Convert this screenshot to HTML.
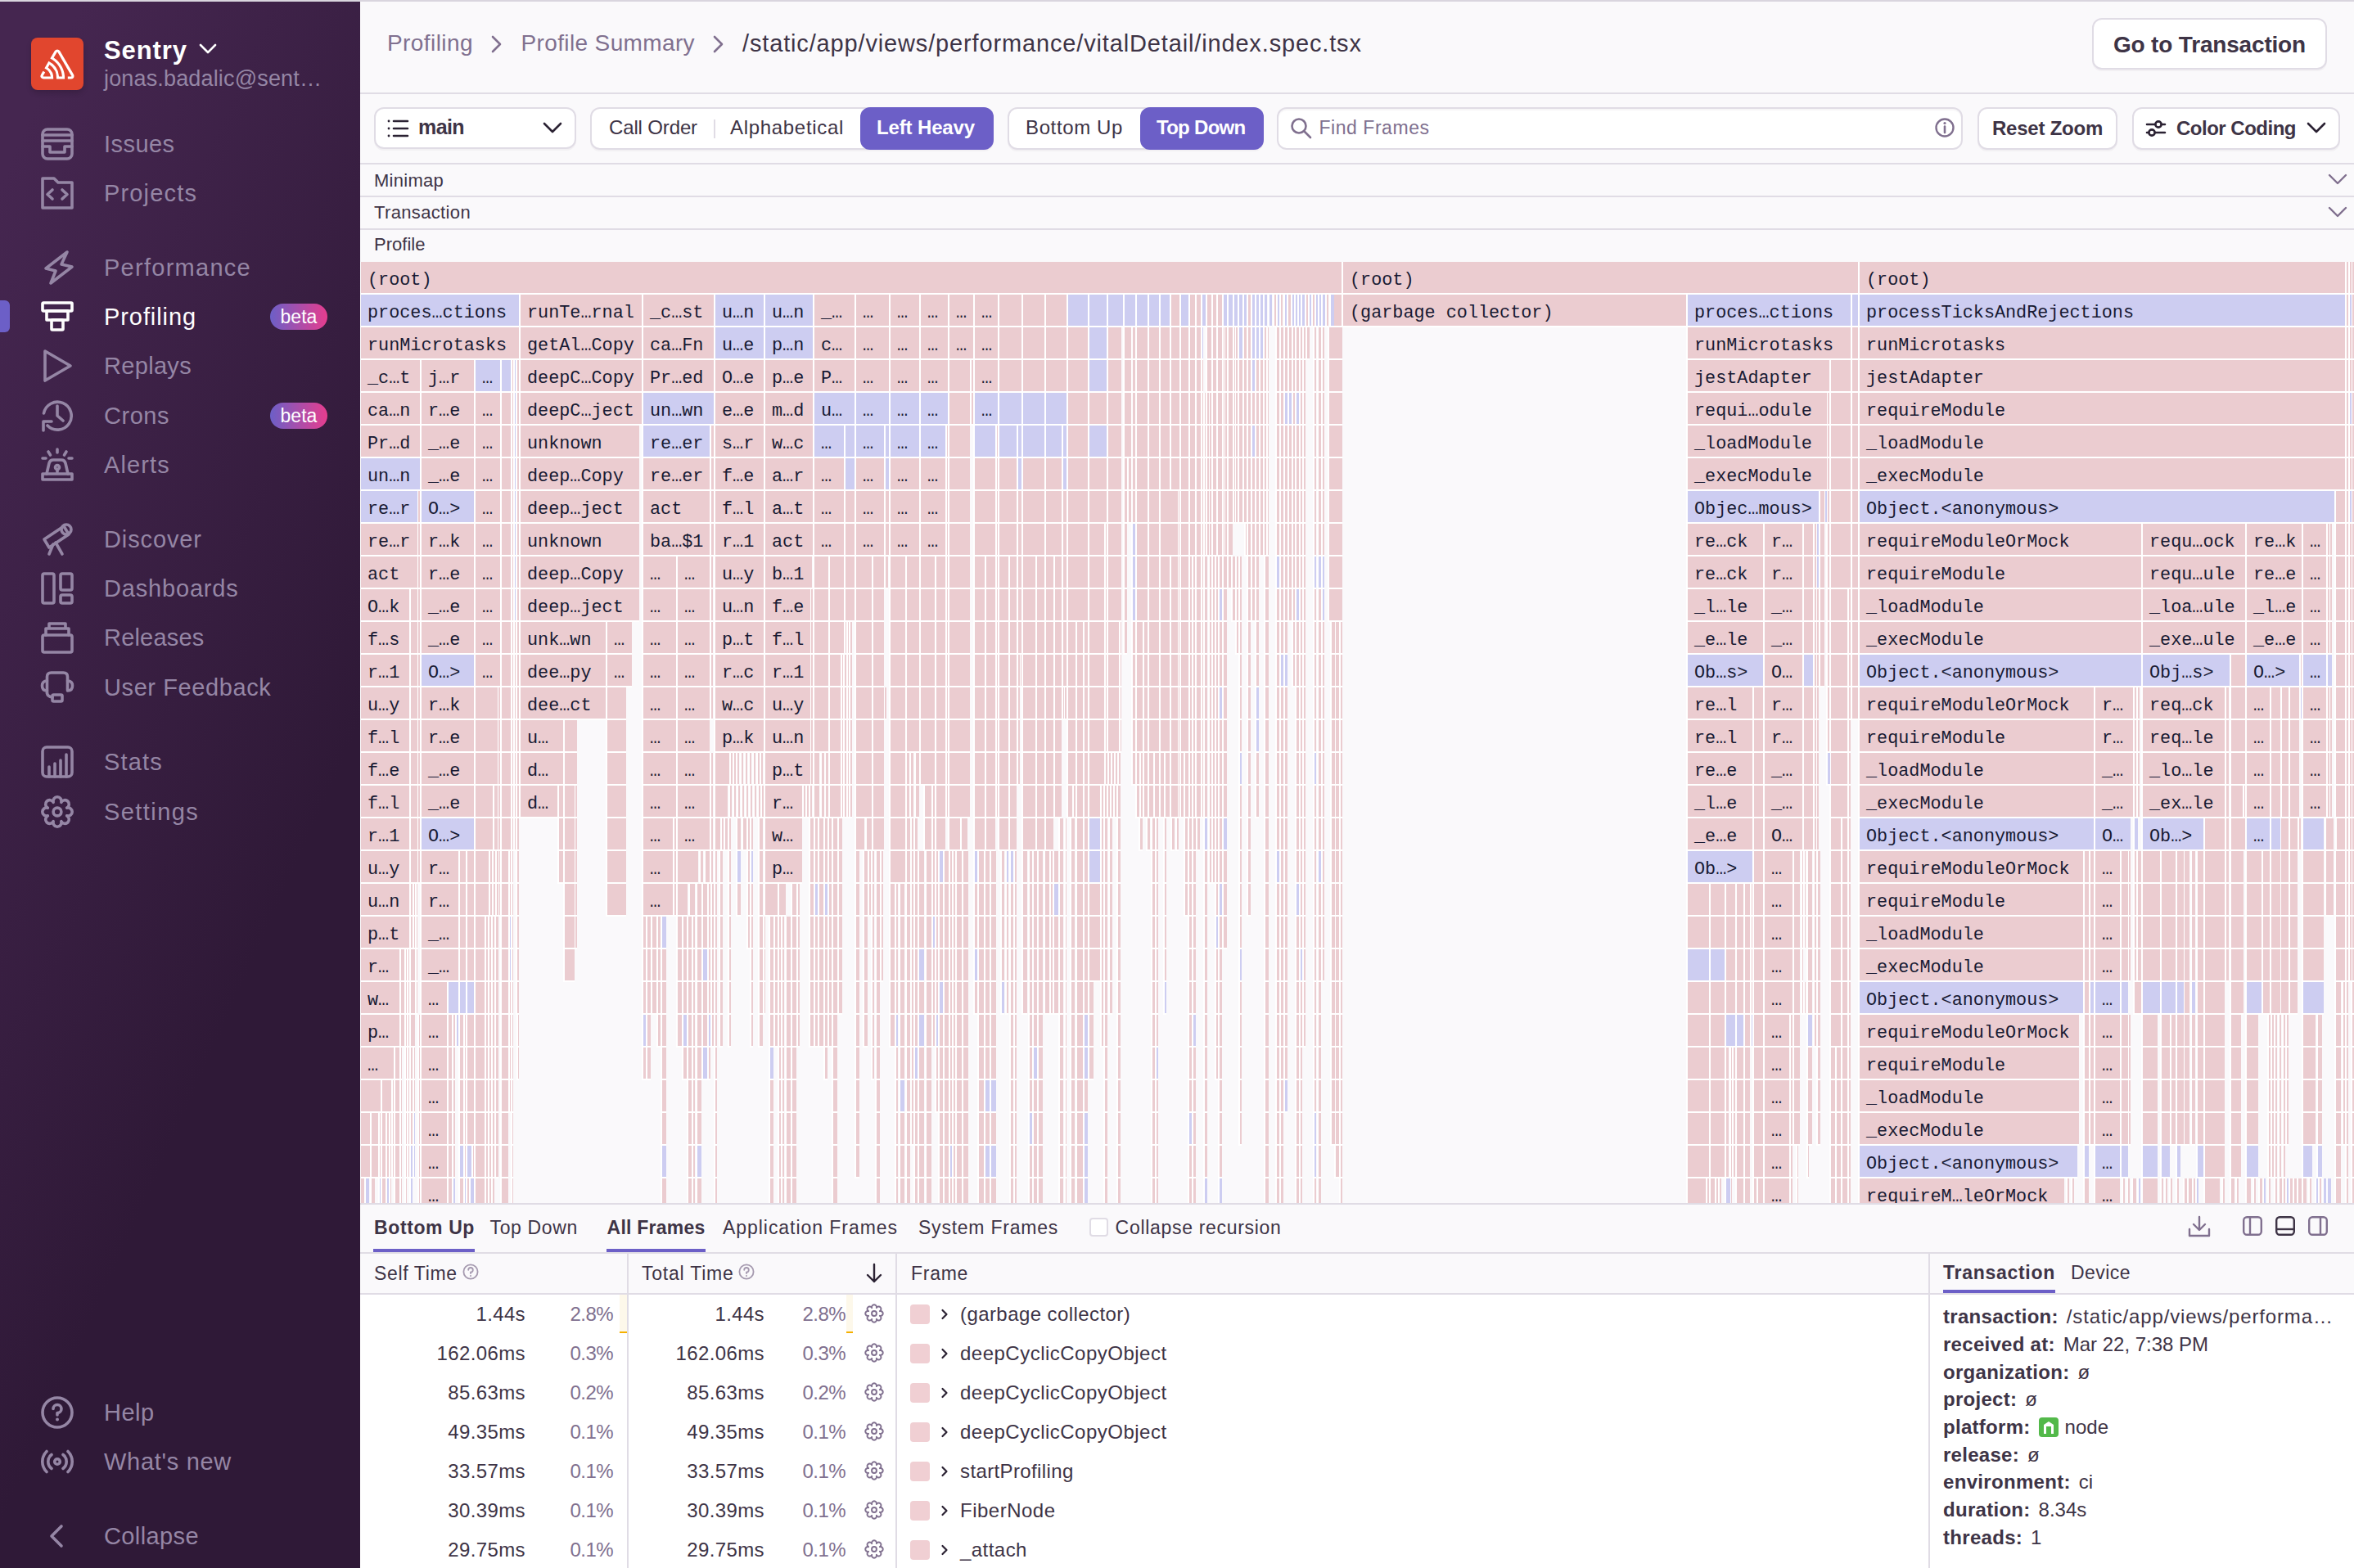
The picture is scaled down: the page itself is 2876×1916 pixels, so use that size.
<!DOCTYPE html>
<html><head><meta charset="utf-8"><title>Profiling</title>
<style>
html,body{margin:0;padding:0;width:2876px;height:1916px;overflow:hidden;background:#faf9fb;}
@media (max-width:2000px){html{zoom:0.5;}}
body{position:relative;font-family:"Liberation Sans",sans-serif;}
.t{position:absolute;white-space:pre;}
.r{position:absolute;display:block;}
</style></head><body>
<div class="r" style="left:0px;top:0px;width:2876px;height:2px;background:#d9d5de;"></div>
<div class="r" style="left:0px;top:2px;width:440px;height:1914px;background:linear-gradient(294.17deg, #2f1937 35.57%, #452650 92.42%);"></div>
<div class="r" style="left:38px;top:46px;width:64px;height:64px;background:#e1462e;border-radius:8px;box-shadow:0 4px 6px rgba(0,0,0,0.15);"></div>
<svg class="r" style="left:38px;top:46px;" width="64" height="64" viewBox="0 0 64 64"><path transform="translate(11.5,14.5) scale(0.82)" d="M29,2.26a4.67,4.67,0,0,0-8,0L14.42,13.53A32.21,32.21,0,0,1,32.17,40.19H27.55A27.68,27.68,0,0,0,12.09,17.47L6,28a15.92,15.92,0,0,1,9.23,12.17H4.62A.76.76,0,0,1,4,39.06l2.94-5a10.74,10.74,0,0,0-3.36-1.9l-2.91,5a4.54,4.54,0,0,0,1.69,6.24A4.66,4.66,0,0,0,4.62,44H19.150a19.4,19.4,0,0,0-8-17.31l2.31-4A23.87,23.87,0,0,1,23.76,44H36.07a35.88,35.88,0,0,0-16.41-31.8l4.67-8a.77.77,0,0,1,1.05-.27c.53.29,20.290,34.77,20.66,35.17a.76.76,0,0,1-.68,1.13H40.6q.09,1.91,0,3.81h4.78A4.59,4.59,0,0,0,50,39.43a4.49,4.49,0,0,0-.62-2.28Z" fill="#fff"/></svg>
<div class="t" style="left:127.0px;top:45.8px;font-size:31px;line-height:31px;color:#ffffff;font-family:'Liberation Sans', sans-serif;font-weight:bold;letter-spacing:0.92px;">Sentry</div>
<svg class="r" style="left:243px;top:53px;" width="22" height="14" viewBox="0 0 22 14"><path d="M2 2 L11 11 L20 2" fill="none" stroke="#fff" stroke-width="2.6" stroke-linecap="round" stroke-linejoin="round"/></svg>
<div class="t" style="left:127.0px;top:82.6px;font-size:27px;line-height:27px;color:#9586a5;font-family:'Liberation Sans', sans-serif;font-weight:normal;letter-spacing:0.16px;">jonas.badalic@sent…</div>
<div class="t" style="left:127.0px;top:162.0px;font-size:29px;line-height:29px;color:#9586a5;font-family:'Liberation Sans', sans-serif;font-weight:normal;letter-spacing:0.45px;">Issues</div>
<svg class="r" style="left:48px;top:154px;" width="44" height="44" viewBox="0 0 44 44"><rect x="4" y="4" width="36" height="36" rx="6" fill="none" stroke="#9586a5" stroke-width="3.6" stroke-linecap="round" stroke-linejoin="round"/><path d="M4 11 H40 M4 18 H40 M4 25 H13 V32 H31 V25 H40" fill="none" stroke="#9586a5" stroke-width="3.6" stroke-linecap="round" stroke-linejoin="round"/></svg>
<div class="t" style="left:127.0px;top:222.0px;font-size:29px;line-height:29px;color:#9586a5;font-family:'Liberation Sans', sans-serif;font-weight:normal;letter-spacing:1.16px;">Projects</div>
<svg class="r" style="left:48px;top:214px;" width="44" height="44" viewBox="0 0 44 44"><path d="M4 4 H18 L23 9 H40 V40 H4 Z" fill="none" stroke="#9586a5" stroke-width="3.6" stroke-linecap="round" stroke-linejoin="round"/><path d="M16 18 L10 23.5 L16 29 M28 18 L34 23.5 L28 29" fill="none" stroke="#9586a5" stroke-width="3.6" stroke-linecap="round" stroke-linejoin="round"/></svg>
<div class="t" style="left:127.0px;top:313.0px;font-size:29px;line-height:29px;color:#9586a5;font-family:'Liberation Sans', sans-serif;font-weight:normal;letter-spacing:1.27px;">Performance</div>
<svg class="r" style="left:48px;top:305px;" width="44" height="44" viewBox="0 0 44 44"><path d="M34 3 L8 23 L20 26 L14 41 L40 21 L27 18 Z" fill="none" stroke="#9586a5" stroke-width="3.6" stroke-linecap="round" stroke-linejoin="round"/></svg>
<div class="t" style="left:127.0px;top:373.0px;font-size:29px;line-height:29px;color:#ffffff;font-family:'Liberation Sans', sans-serif;font-weight:normal;letter-spacing:0.92px;">Profiling</div>
<svg class="r" style="left:48px;top:365px;" width="44" height="44" viewBox="0 0 44 44"><rect x="4" y="5" width="36" height="10" rx="1" fill="none" stroke="#ffffff" stroke-width="3.6" stroke-linecap="round" stroke-linejoin="round"/><rect x="9" y="15" width="26" height="11" fill="none" stroke="#ffffff" stroke-width="3.6" stroke-linecap="round" stroke-linejoin="round"/><rect x="15" y="26" width="14" height="12" rx="1" fill="none" stroke="#ffffff" stroke-width="3.6" stroke-linecap="round" stroke-linejoin="round"/></svg>
<div class="t" style="left:127.0px;top:433.0px;font-size:29px;line-height:29px;color:#9586a5;font-family:'Liberation Sans', sans-serif;font-weight:normal;letter-spacing:0.32px;">Replays</div>
<svg class="r" style="left:48px;top:425px;" width="44" height="44" viewBox="0 0 44 44"><path d="M7 4 L38 22 L7 40 Z" fill="none" stroke="#9586a5" stroke-width="3.6" stroke-linecap="round" stroke-linejoin="round"/></svg>
<div class="t" style="left:127.0px;top:494.0px;font-size:29px;line-height:29px;color:#9586a5;font-family:'Liberation Sans', sans-serif;font-weight:normal;letter-spacing:0.53px;">Crons</div>
<svg class="r" style="left:48px;top:486px;" width="44" height="44" viewBox="0 0 44 44"><path d="M5.5 19 A17 17 0 1 1 10 34" fill="none" stroke="#9586a5" stroke-width="3.6" stroke-linecap="round" stroke-linejoin="round"/><path d="M22 10 V22 L29 28" fill="none" stroke="#9586a5" stroke-width="3.6" stroke-linecap="round" stroke-linejoin="round"/><path d="M5 40 V29 H15" fill="none" stroke="#9586a5" stroke-width="3.6" stroke-linecap="round" stroke-linejoin="round"/></svg>
<div class="t" style="left:127.0px;top:554.0px;font-size:29px;line-height:29px;color:#9586a5;font-family:'Liberation Sans', sans-serif;font-weight:normal;letter-spacing:1.10px;">Alerts</div>
<svg class="r" style="left:48px;top:546px;" width="44" height="44" viewBox="0 0 44 44"><path d="M4 40 V33 H40 V40 Z" fill="none" stroke="#9586a5" stroke-width="3.6" stroke-linecap="round" stroke-linejoin="round"/><path d="M9 33 L12 20 Q13 16 17 16 H27 Q31 16 32 20 L35 33" fill="none" stroke="#9586a5" stroke-width="3.6" stroke-linecap="round" stroke-linejoin="round"/><circle cx="22" cy="25" r="2.5" fill="none" stroke="#9586a5" stroke-width="3.6" stroke-linecap="round" stroke-linejoin="round"/><path d="M22 27.5 V31 M22 3 V7 M11 6 L13.5 10 M33 6 L30.5 10 M4 14 H8 M36 14 H40" fill="none" stroke="#9586a5" stroke-width="3.6" stroke-linecap="round" stroke-linejoin="round"/></svg>
<div class="t" style="left:127.0px;top:645.0px;font-size:29px;line-height:29px;color:#9586a5;font-family:'Liberation Sans', sans-serif;font-weight:normal;letter-spacing:0.88px;">Discover</div>
<svg class="r" style="left:48px;top:637px;" width="44" height="44" viewBox="0 0 44 44"><path d="M6 22 L30 6 L36 16 L12 32 Z" fill="none" stroke="#9586a5" stroke-width="3.6" stroke-linecap="round" stroke-linejoin="round"/><circle cx="33" cy="10" r="6" fill="none" stroke="#9586a5" stroke-width="3.6" stroke-linecap="round" stroke-linejoin="round"/><path d="M17 28 L12 40 M20 26 L28 40" fill="none" stroke="#9586a5" stroke-width="3.6" stroke-linecap="round" stroke-linejoin="round"/></svg>
<div class="t" style="left:127.0px;top:705.0px;font-size:29px;line-height:29px;color:#9586a5;font-family:'Liberation Sans', sans-serif;font-weight:normal;letter-spacing:0.82px;">Dashboards</div>
<svg class="r" style="left:48px;top:697px;" width="44" height="44" viewBox="0 0 44 44"><rect x="4" y="4" width="14" height="36" rx="2" fill="none" stroke="#9586a5" stroke-width="3.6" stroke-linecap="round" stroke-linejoin="round"/><rect x="26" y="4" width="14" height="20" rx="2" fill="none" stroke="#9586a5" stroke-width="3.6" stroke-linecap="round" stroke-linejoin="round"/><rect x="26" y="30" width="14" height="10" rx="2" fill="none" stroke="#9586a5" stroke-width="3.6" stroke-linecap="round" stroke-linejoin="round"/></svg>
<div class="t" style="left:127.0px;top:765.0px;font-size:29px;line-height:29px;color:#9586a5;font-family:'Liberation Sans', sans-serif;font-weight:normal;letter-spacing:0.19px;">Releases</div>
<svg class="r" style="left:48px;top:757px;" width="44" height="44" viewBox="0 0 44 44"><rect x="4" y="19" width="36" height="21" rx="2" fill="none" stroke="#9586a5" stroke-width="3.6" stroke-linecap="round" stroke-linejoin="round"/><path d="M8 19 V11 H36 V19 M12 11 V5 H32 V11" fill="none" stroke="#9586a5" stroke-width="3.6" stroke-linecap="round" stroke-linejoin="round"/></svg>
<div class="t" style="left:127.0px;top:826.0px;font-size:29px;line-height:29px;color:#9586a5;font-family:'Liberation Sans', sans-serif;font-weight:normal;letter-spacing:0.60px;">User Feedback</div>
<svg class="r" style="left:48px;top:818px;" width="44" height="44" viewBox="0 0 44 44"><path d="M9.5 29 V9 Q9.5 4 14.5 4 H29.5 Q34.5 4 34.5 9 V25" fill="none" stroke="#9586a5" stroke-width="3.6" stroke-linecap="round" stroke-linejoin="round"/><path d="M9.5 14 Q3.5 14 3.5 20 Q3.5 26 9.5 26 M34.5 14 Q40.5 14 40.5 20 Q40.5 26 34.5 26" fill="none" stroke="#9586a5" stroke-width="3.6" stroke-linecap="round" stroke-linejoin="round"/><path d="M9.5 29 Q10 33 16 34" fill="none" stroke="#9586a5" stroke-width="3.6" stroke-linecap="round" stroke-linejoin="round"/><rect x="16" y="31" width="12" height="8" rx="1.5" fill="none" stroke="#9586a5" stroke-width="3.6" stroke-linecap="round" stroke-linejoin="round"/></svg>
<div class="t" style="left:127.0px;top:917.0px;font-size:29px;line-height:29px;color:#9586a5;font-family:'Liberation Sans', sans-serif;font-weight:normal;letter-spacing:1.18px;">Stats</div>
<svg class="r" style="left:48px;top:909px;" width="44" height="44" viewBox="0 0 44 44"><rect x="4" y="4" width="36" height="36" rx="5" fill="none" stroke="#9586a5" stroke-width="3.6" stroke-linecap="round" stroke-linejoin="round"/><path d="M12 40 V28 M19 40 V24 M26 40 V20 M33 40 V13" fill="none" stroke="#9586a5" stroke-width="3.6" stroke-linecap="round" stroke-linejoin="round"/></svg>
<div class="t" style="left:127.0px;top:978.0px;font-size:29px;line-height:29px;color:#9586a5;font-family:'Liberation Sans', sans-serif;font-weight:normal;letter-spacing:1.44px;">Settings</div>
<svg class="r" style="left:48px;top:970px;" width="44" height="44" viewBox="0 0 44 44"><path d="M17.18 10.36A5.05 5.05 0 1 1 26.82 10.36A5.05 5.05 0 1 1 33.64 17.18A5.05 5.05 0 1 1 33.64 26.82A5.05 5.05 0 1 1 26.82 33.64A5.05 5.05 0 1 1 17.18 33.64A5.05 5.05 0 1 1 10.36 26.82A5.05 5.05 0 1 1 10.36 17.18A5.05 5.05 0 1 1 17.18 10.36Z" fill="none" stroke="#9586a5" stroke-width="3.6" stroke-linecap="round" stroke-linejoin="round"/><circle cx="22" cy="22" r="4.9" fill="none" stroke="#9586a5" stroke-width="3.6" stroke-linecap="round" stroke-linejoin="round"/></svg>
<div class="t" style="left:127.0px;top:1712.0px;font-size:29px;line-height:29px;color:#9586a5;font-family:'Liberation Sans', sans-serif;font-weight:normal;letter-spacing:0.52px;">Help</div>
<svg class="r" style="left:48px;top:1704px;" width="44" height="44" viewBox="0 0 44 44"><circle cx="22" cy="22" r="18" fill="none" stroke="#9586a5" stroke-width="3.6" stroke-linecap="round" stroke-linejoin="round"/><path d="M17 17.5 A5 5 0 1 1 22 22.5 V25" fill="none" stroke="#9586a5" stroke-width="3.6" stroke-linecap="round" stroke-linejoin="round"/><circle cx="22" cy="30.5" r="2" fill="#9586a5"/></svg>
<div class="t" style="left:127.0px;top:1772.0px;font-size:29px;line-height:29px;color:#9586a5;font-family:'Liberation Sans', sans-serif;font-weight:normal;letter-spacing:0.70px;">What's new</div>
<svg class="r" style="left:48px;top:1764px;" width="44" height="44" viewBox="0 0 44 44"><circle cx="22" cy="22" r="3.3" fill="none" stroke="#9586a5" stroke-width="3.6" stroke-linecap="round" stroke-linejoin="round"/><path d="M15 13.5 A10.7 10.7 0 0 0 15 30.5 M29 13.5 A10.7 10.7 0 0 1 29 30.5 M9 9.5 A17.6 17.6 0 0 0 9 34.5 M35 9.5 A17.6 17.6 0 0 1 35 34.5" fill="none" stroke="#9586a5" stroke-width="3.6" stroke-linecap="round" stroke-linejoin="round"/></svg>
<div class="t" style="left:127.0px;top:1863.0px;font-size:29px;line-height:29px;color:#9586a5;font-family:'Liberation Sans', sans-serif;font-weight:normal;letter-spacing:0.40px;">Collapse</div>
<svg class="r" style="left:48px;top:1855px;" width="44" height="44" viewBox="0 0 44 44"><path d="M27 10 L15 22 L27 34" fill="none" stroke="#9586a5" stroke-width="3.6" stroke-linecap="round" stroke-linejoin="round"/></svg>
<div class="r" style="left:0px;top:367px;width:12px;height:39px;background:#6c5fc7;border-radius:0 6px 6px 0;"></div>
<div class="r" style="left:330px;top:371px;width:70px;height:32px;background:linear-gradient(90deg,#6c5fc7,#e63d8e);border-radius:16px;"></div>
<div class="t" style="left:342.5px;top:376.0px;font-size:23px;line-height:23px;color:#ffffff;font-family:'Liberation Sans', sans-serif;font-weight:normal;letter-spacing:0.05px;">beta</div>
<div class="r" style="left:330px;top:492px;width:70px;height:32px;background:linear-gradient(90deg,#6c5fc7,#e63d8e);border-radius:16px;"></div>
<div class="t" style="left:342.5px;top:497.0px;font-size:23px;line-height:23px;color:#ffffff;font-family:'Liberation Sans', sans-serif;font-weight:normal;letter-spacing:0.05px;">beta</div>
<div class="r" style="left:440px;top:2px;width:2436px;height:1914px;background:#faf9fb;"></div>
<div class="t" style="left:473.0px;top:39.3px;font-size:28px;line-height:28px;color:#80708f;font-family:'Liberation Sans', sans-serif;font-weight:normal;letter-spacing:0.43px;">Profiling</div>
<div class="t" style="left:636.5px;top:39.3px;font-size:28px;line-height:28px;color:#80708f;font-family:'Liberation Sans', sans-serif;font-weight:normal;letter-spacing:0.37px;">Profile Summary</div>
<div class="t" style="left:907.0px;top:38.5px;font-size:29px;line-height:29px;color:#3e3446;font-family:'Liberation Sans', sans-serif;font-weight:normal;letter-spacing:0.85px;">/static/app/views/performance/vitalDetail/index.spec.tsx</div>
<svg class="r" style="left:599px;top:42px;" width="16" height="24" viewBox="0 0 16 24"><path d="M3 3 L12 12 L3 21" fill="none" stroke="#80708f" stroke-width="2.6" stroke-linecap="round" stroke-linejoin="round"/></svg>
<svg class="r" style="left:870px;top:42px;" width="16" height="24" viewBox="0 0 16 24"><path d="M3 3 L12 12 L3 21" fill="none" stroke="#80708f" stroke-width="2.6" stroke-linecap="round" stroke-linejoin="round"/></svg>
<div class="r" style="left:2556px;top:22px;width:287px;height:63px;background:#ffffff;box-sizing:border-box;border:2px solid #e0dce5;border-radius:12px;box-shadow:0 2px 0 rgba(43,34,51,0.04);"></div>
<div class="t" style="left:2582.0px;top:41.3px;font-size:28px;line-height:28px;color:#3e3446;font-family:'Liberation Sans', sans-serif;font-weight:bold;letter-spacing:-0.18px;">Go to Transaction</div>
<div class="r" style="left:440px;top:113px;width:2436px;height:2px;background:#e0dce5;"></div>
<div class="r" style="left:457px;top:131px;width:247px;height:51px;background:#ffffff;box-sizing:border-box;border:2px solid #e0dce5;border-radius:12px;box-shadow:0 2px 0 rgba(43,34,51,0.04);"></div>
<svg class="r" style="left:472px;top:144px;" width="30" height="26" viewBox="0 0 30 26"><path d="M9 4 H26 M9 13 H26 M9 22 H26" stroke="#2b2233" stroke-width="2.6" stroke-linecap="round"/><circle cx="3" cy="4" r="1.4" fill="#2b2233"/><circle cx="3" cy="13" r="1.4" fill="#2b2233"/><circle cx="3" cy="22" r="1.4" fill="#2b2233"/></svg>
<div class="t" style="left:511.0px;top:143.3px;font-size:25px;line-height:25px;color:#3e3446;font-family:'Liberation Sans', sans-serif;font-weight:bold;letter-spacing:-0.59px;">main</div>
<svg class="r" style="left:663px;top:149px;" width="24" height="16" viewBox="0 0 24 16"><path d="M2 2 L12 12 L22 2" fill="none" stroke="#2b2233" stroke-width="2.6" stroke-linecap="round" stroke-linejoin="round"/></svg>
<div class="r" style="left:721px;top:131px;width:493px;height:52px;background:#ffffff;box-sizing:border-box;border:2px solid #e0dce5;border-radius:12px;box-shadow:0 2px 0 rgba(43,34,51,0.04);"></div>
<div class="t" style="left:744.0px;top:144.2px;font-size:24px;line-height:24px;color:#3e3446;font-family:'Liberation Sans', sans-serif;font-weight:normal;letter-spacing:-0.14px;">Call Order</div>
<div class="r" style="left:872px;top:146px;width:2px;height:23px;background:#e0dce5;"></div>
<div class="t" style="left:892.0px;top:144.2px;font-size:24px;line-height:24px;color:#3e3446;font-family:'Liberation Sans', sans-serif;font-weight:normal;letter-spacing:0.69px;">Alphabetical</div>
<div class="r" style="left:1051px;top:131px;width:163px;height:52px;background:#6c5fc7;border-radius:12px;"></div>
<div class="t" style="left:1071.0px;top:144.2px;font-size:24px;line-height:24px;color:#ffffff;font-family:'Liberation Sans', sans-serif;font-weight:bold;letter-spacing:-0.14px;">Left Heavy</div>
<div class="r" style="left:1231px;top:131px;width:313px;height:52px;background:#ffffff;box-sizing:border-box;border:2px solid #e0dce5;border-radius:12px;box-shadow:0 2px 0 rgba(43,34,51,0.04);"></div>
<div class="t" style="left:1253.0px;top:144.2px;font-size:24px;line-height:24px;color:#3e3446;font-family:'Liberation Sans', sans-serif;font-weight:normal;letter-spacing:0.62px;">Bottom Up</div>
<div class="r" style="left:1393px;top:131px;width:151px;height:52px;background:#6c5fc7;border-radius:12px;"></div>
<div class="t" style="left:1413.0px;top:144.2px;font-size:24px;line-height:24px;color:#ffffff;font-family:'Liberation Sans', sans-serif;font-weight:bold;letter-spacing:-0.71px;">Top Down</div>
<div class="r" style="left:1560px;top:131px;width:838px;height:52px;background:#ffffff;box-sizing:border-box;border:2px solid #e0dce5;border-radius:12px;box-shadow:0 2px 0 rgba(43,34,51,0.04);box-shadow:inset 0 2px 1px rgba(43,34,51,0.04);"></div>
<svg class="r" style="left:1576px;top:143px;" width="28" height="28" viewBox="0 0 28 28"><circle cx="11" cy="11" r="8.5" fill="none" stroke="#80708f" stroke-width="2.6"/><path d="M17.5 17.5 L25 25" stroke="#80708f" stroke-width="2.6" stroke-linecap="round"/></svg>
<div class="t" style="left:1611.5px;top:145.2px;font-size:23px;line-height:23px;color:#80708f;font-family:'Liberation Sans', sans-serif;font-weight:normal;letter-spacing:0.54px;">Find Frames</div>
<svg class="r" style="left:2363px;top:143px;" width="26" height="26" viewBox="0 0 26 26"><circle cx="13" cy="13" r="10.5" fill="none" stroke="#80708f" stroke-width="2.4"/><path d="M13 11.5 V19" stroke="#80708f" stroke-width="2.6" stroke-linecap="round"/><circle cx="13" cy="7.5" r="1.6" fill="#80708f"/></svg>
<div class="r" style="left:2416px;top:131px;width:171px;height:52px;background:#ffffff;box-sizing:border-box;border:2px solid #e0dce5;border-radius:12px;box-shadow:0 2px 0 rgba(43,34,51,0.04);"></div>
<div class="t" style="left:2434.0px;top:145.2px;font-size:24px;line-height:24px;color:#3e3446;font-family:'Liberation Sans', sans-serif;font-weight:bold;letter-spacing:-0.23px;">Reset Zoom</div>
<div class="r" style="left:2605px;top:131px;width:254px;height:52px;background:#ffffff;box-sizing:border-box;border:2px solid #e0dce5;border-radius:12px;box-shadow:0 2px 0 rgba(43,34,51,0.04);"></div>
<svg class="r" style="left:2620px;top:145px;" width="28" height="24" viewBox="0 0 28 24"><path d="M3 7 H25 M3 17 H25" stroke="#2b2233" stroke-width="2.6" stroke-linecap="round"/><circle cx="17" cy="7" r="3.6" fill="#fff" stroke="#2b2233" stroke-width="2.6"/><circle cx="9" cy="17" r="3.6" fill="#fff" stroke="#2b2233" stroke-width="2.6"/></svg>
<div class="t" style="left:2659.0px;top:145.2px;font-size:24px;line-height:24px;color:#3e3446;font-family:'Liberation Sans', sans-serif;font-weight:bold;letter-spacing:-0.50px;">Color Coding</div>
<svg class="r" style="left:2818px;top:149px;" width="24" height="16" viewBox="0 0 24 16"><path d="M2 2 L12 12 L22 2" fill="none" stroke="#2b2233" stroke-width="2.6" stroke-linecap="round" stroke-linejoin="round"/></svg>
<div class="r" style="left:440px;top:199px;width:2436px;height:2px;background:#e0dce5;"></div>
<div class="t" style="left:457.0px;top:209.9px;font-size:22px;line-height:22px;color:#3e3446;font-family:'Liberation Sans', sans-serif;font-weight:normal;letter-spacing:0.27px;">Minimap</div>
<div class="r" style="left:440px;top:239px;width:2436px;height:2px;background:#e0dce5;"></div>
<div class="t" style="left:457.0px;top:249.4px;font-size:22px;line-height:22px;color:#3e3446;font-family:'Liberation Sans', sans-serif;font-weight:normal;letter-spacing:0.35px;">Transaction</div>
<div class="r" style="left:440px;top:279px;width:2436px;height:2px;background:#e0dce5;"></div>
<div class="t" style="left:457.0px;top:288.4px;font-size:22px;line-height:22px;color:#3e3446;font-family:'Liberation Sans', sans-serif;font-weight:normal;letter-spacing:0.01px;">Profile</div>
<svg class="r" style="left:2844px;top:212px;" width="24" height="16" viewBox="0 0 24 16"><path d="M2 2 L12 12 L22 2" fill="none" stroke="#80708f" stroke-width="2.4" stroke-linecap="round" stroke-linejoin="round"/></svg>
<svg class="r" style="left:2844px;top:252px;" width="24" height="16" viewBox="0 0 24 16"><path d="M2 2 L12 12 L22 2" fill="none" stroke="#80708f" stroke-width="2.4" stroke-linecap="round" stroke-linejoin="round"/></svg>
<svg class="r" style="left:440px;top:320px" width="2436" height="1150" viewBox="440 320 2436 1150"><path fill="#ffffff" d="M439 320h1200v40h-1200zM1639 320h631v40h-631zM2270 320h595v40h-595zM2865 320h4v40h-4zM2869 320h4v40h-4zM2872 320h4v40h-4zM439 360h195v40h-195zM634 360h150v40h-150zM784 360h88v40h-88zM872 360h61v40h-61zM933 360h60v40h-60zM993 360h51v40h-51zM1044 360h42v40h-42zM1086 360h37v40h-37zM1123 360h35v40h-35zM1158 360h31v40h-31zM1189 360h30v40h-30zM1219 360h29v40h-29zM1248 360h28v40h-28zM1276 360h27v40h-27zM1303 360h26v40h-26zM1329 360h23v40h-23zM1352 360h20v40h-20zM1372 360h15v40h-15zM1387 360h15v40h-15zM1402 360h14v40h-14zM1416 360h13v40h-13zM1429 360h12v40h-12zM1441 360h11v40h-11zM1452 360h8v40h-8zM1460 360h7v40h-7zM1467 360h6v40h-6zM1473 360h7v40h-7zM1480 360h6v40h-6zM1486 360h7v40h-7zM1493 360h6v40h-6zM1499 360h7v40h-7zM1506 360h6v40h-6zM1512 360h6v40h-6zM1518 360h5v40h-5zM1523 360h5v40h-5zM1528 360h5v40h-5zM1533 360h5v40h-5zM1538 360h5v40h-5zM1624 360h6v40h-6zM1628 360h11v40h-11zM1639 360h421v40h-421zM2060 360h201v40h-201zM2261 360h9v40h-9zM2270 360h595v40h-595zM2865 360h4v40h-4zM2869 360h4v40h-4zM2872 360h4v40h-4zM1543 360h5v40h-5zM1549 360h5v40h-5zM1555 360h4v40h-4zM1559 360h4v40h-4zM1563 360h4v40h-4zM1568 360h4v40h-4zM1572 360h5v40h-5zM1577 360h4v40h-4zM1581 360h4v40h-4zM1585 360h4v40h-4zM1589 360h5v40h-5zM1594 360h4v40h-4zM1598 360h4v40h-4zM1602 360h4v40h-4zM1606 360h4v40h-4zM1610 360h4v40h-4zM1614 360h5v40h-5zM1619 360h4v40h-4zM439 400h195v40h-195zM634 400h150v40h-150zM784 400h88v40h-88zM872 400h61v40h-61zM933 400h60v40h-60zM993 400h51v40h-51zM1044 400h42v40h-42zM1086 400h37v40h-37zM1123 400h35v40h-35zM1158 400h31v40h-31zM1189 400h30v40h-30zM1219 400h29v40h-29zM1248 400h28v40h-28zM1276 400h27v40h-27zM1303 400h26v40h-26zM1329 400h23v40h-23zM1352 400h18v40h-18zM1372 400h10v40h-10zM1382 400h5v40h-5zM1387 400h15v40h-15zM1402 400h14v40h-14zM1416 400h13v40h-13zM1429 400h12v40h-12zM1441 400h11v40h-11zM1452 400h8v40h-8zM1460 400h7v40h-7zM1467 400h3v40h-3zM1473 400h7v40h-7zM1480 400h6v40h-6zM1486 400h7v40h-7zM1493 400h3v40h-3zM1495 400h4v40h-4zM1499 400h7v40h-7zM1506 400h3v40h-3zM1508 400h4v40h-4zM1512 400h6v40h-6zM1518 400h5v40h-5zM1523 400h5v40h-5zM1528 400h5v40h-5zM1533 400h5v40h-5zM1538 400h5v40h-5zM1543 400h4v40h-4zM1547 400h3v40h-3zM1622 400h18v40h-18zM2060 400h201v40h-201zM2261 400h9v40h-9zM2270 400h595v40h-595zM2865 400h4v40h-4zM2869 400h4v40h-4zM2872 400h4v40h-4zM1558 400h5v40h-5zM1563 400h5v40h-5zM1568 400h5v40h-5zM1573 400h5v40h-5zM1578 400h4v40h-4zM1582 400h5v40h-5zM1587 400h4v40h-4zM1591 400h4v40h-4zM1595 400h5v40h-5zM1604 400h4v40h-4zM1609 400h5v40h-5zM1614 400h4v40h-4zM439 440h74v40h-74zM513 440h66v40h-66zM579 440h32v40h-32zM611 440h13v40h-13zM624 440h3v40h-3zM627 440h3v40h-3zM630 440h4v40h-4zM634 440h150v40h-150zM784 440h88v40h-88zM872 440h61v40h-61zM933 440h60v40h-60zM993 440h51v40h-51zM1044 440h42v40h-42zM1086 440h37v40h-37zM1123 440h35v40h-35zM1158 440h27v40h-27zM1185 440h4v40h-4zM1189 440h30v40h-30zM1219 440h29v40h-29zM1248 440h28v40h-28zM1276 440h27v40h-27zM1303 440h26v40h-26zM1329 440h23v40h-23zM1352 440h18v40h-18zM1372 440h10v40h-10zM1382 440h5v40h-5zM1387 440h15v40h-15zM1402 440h14v40h-14zM1416 440h13v40h-13zM1429 440h12v40h-12zM1441 440h11v40h-11zM1452 440h8v40h-8zM1460 440h7v40h-7zM1467 440h3v40h-3zM1473 440h7v40h-7zM1480 440h6v40h-6zM1486 440h7v40h-7zM1493 440h3v40h-3zM1495 440h4v40h-4zM1499 440h7v40h-7zM1506 440h3v40h-3zM1508 440h4v40h-4zM1512 440h6v40h-6zM1518 440h5v40h-5zM1523 440h5v40h-5zM1528 440h5v40h-5zM1533 440h5v40h-5zM1538 440h5v40h-5zM1543 440h4v40h-4zM1547 440h3v40h-3zM1622 440h18v40h-18zM2060 440h175v40h-175zM2235 440h26v40h-26zM2261 440h9v40h-9zM2270 440h595v40h-595zM2865 440h4v40h-4zM2869 440h4v40h-4zM2872 440h4v40h-4zM1558 440h5v40h-5zM1563 440h5v40h-5zM1568 440h5v40h-5zM1573 440h5v40h-5zM1578 440h4v40h-4zM1582 440h5v40h-5zM1587 440h4v40h-4zM1591 440h4v40h-4zM1604 440h4v40h-4zM1609 440h5v40h-5zM1614 440h4v40h-4zM439 480h74v40h-74zM513 480h66v40h-66zM579 480h32v40h-32zM611 480h13v40h-13zM624 480h3v40h-3zM627 480h3v40h-3zM630 480h4v40h-4zM634 480h150v40h-150zM784 480h88v40h-88zM872 480h61v40h-61zM933 480h60v40h-60zM993 480h51v40h-51zM1044 480h42v40h-42zM1086 480h37v40h-37zM1123 480h35v40h-35zM1158 480h27v40h-27zM1185 480h4v40h-4zM1189 480h30v40h-30zM1219 480h29v40h-29zM1248 480h28v40h-28zM1276 480h27v40h-27zM1303 480h26v40h-26zM1329 480h23v40h-23zM1352 480h18v40h-18zM1372 480h10v40h-10zM1382 480h5v40h-5zM1387 480h15v40h-15zM1402 480h14v40h-14zM1416 480h13v40h-13zM1429 480h12v40h-12zM1441 480h11v40h-11zM1452 480h8v40h-8zM1460 480h7v40h-7zM1467 480h3v40h-3zM1470 480h3v40h-3zM1473 480h4v40h-4zM1476 480h4v40h-4zM1480 480h6v40h-6zM1486 480h7v40h-7zM1493 480h3v40h-3zM1495 480h4v40h-4zM1499 480h7v40h-7zM1506 480h3v40h-3zM1508 480h4v40h-4zM1512 480h6v40h-6zM1518 480h5v40h-5zM1523 480h5v40h-5zM1528 480h5v40h-5zM1533 480h5v40h-5zM1538 480h5v40h-5zM1543 480h4v40h-4zM1547 480h3v40h-3zM1622 480h18v40h-18zM2060 480h172v40h-172zM2231 480h4v40h-4zM2235 480h26v40h-26zM2261 480h9v40h-9zM2270 480h595v40h-595zM2865 480h4v40h-4zM2869 480h4v40h-4zM2872 480h4v40h-4zM1558 480h5v40h-5zM1563 480h5v40h-5zM1568 480h5v40h-5zM1573 480h5v40h-5zM1578 480h4v40h-4zM1582 480h5v40h-5zM1587 480h4v40h-4zM1591 480h4v40h-4zM1604 480h4v40h-4zM1609 480h5v40h-5zM1614 480h4v40h-4zM439 520h74v40h-74zM513 520h66v40h-66zM579 520h32v40h-32zM611 520h13v40h-13zM624 520h3v40h-3zM627 520h3v40h-3zM630 520h4v40h-4zM634 520h147v40h-147zM784 520h83v40h-83zM867 520h5v40h-5zM872 520h61v40h-61zM933 520h60v40h-60zM993 520h38v40h-38zM1031 520h13v40h-13zM1044 520h36v40h-36zM1080 520h6v40h-6zM1086 520h37v40h-37zM1123 520h32v40h-32zM1155 520h3v40h-3zM1158 520h27v40h-27zM1189 520h27v40h-27zM1216 520h3v40h-3zM1219 520h23v40h-23zM1242 520h6v40h-6zM1248 520h28v40h-28zM1276 520h21v40h-21zM1297 520h6v40h-6zM1303 520h26v40h-26zM1329 520h23v40h-23zM1352 520h18v40h-18zM1372 520h10v40h-10zM1382 520h5v40h-5zM1387 520h15v40h-15zM1402 520h14v40h-14zM1416 520h13v40h-13zM1429 520h12v40h-12zM1441 520h11v40h-11zM1452 520h8v40h-8zM1460 520h7v40h-7zM1467 520h3v40h-3zM1470 520h3v40h-3zM1473 520h4v40h-4zM1476 520h4v40h-4zM1480 520h6v40h-6zM1486 520h7v40h-7zM1493 520h3v40h-3zM1495 520h4v40h-4zM1499 520h7v40h-7zM1506 520h3v40h-3zM1508 520h4v40h-4zM1512 520h6v40h-6zM1518 520h5v40h-5zM1523 520h5v40h-5zM1528 520h5v40h-5zM1533 520h5v40h-5zM1538 520h5v40h-5zM1543 520h4v40h-4zM1547 520h3v40h-3zM1622 520h18v40h-18zM2060 520h172v40h-172zM2231 520h4v40h-4zM2235 520h26v40h-26zM2261 520h9v40h-9zM2270 520h595v40h-595zM2865 520h4v40h-4zM2869 520h4v40h-4zM2872 520h4v40h-4zM1558 520h5v40h-5zM1563 520h5v40h-5zM1568 520h5v40h-5zM1573 520h5v40h-5zM1578 520h4v40h-4zM1582 520h5v40h-5zM1587 520h4v40h-4zM1591 520h4v40h-4zM1604 520h4v40h-4zM1609 520h5v40h-5zM1614 520h4v40h-4zM439 560h74v40h-74zM513 560h66v40h-66zM579 560h32v40h-32zM611 560h13v40h-13zM624 560h3v40h-3zM627 560h3v40h-3zM630 560h4v40h-4zM634 560h147v40h-147zM784 560h83v40h-83zM867 560h5v40h-5zM872 560h61v40h-61zM933 560h60v40h-60zM993 560h38v40h-38zM1031 560h13v40h-13zM1044 560h36v40h-36zM1080 560h6v40h-6zM1086 560h37v40h-37zM1123 560h32v40h-32zM1155 560h3v40h-3zM1158 560h27v40h-27zM1189 560h27v40h-27zM1216 560h3v40h-3zM1219 560h23v40h-23zM1242 560h6v40h-6zM1248 560h28v40h-28zM1276 560h21v40h-21zM1297 560h6v40h-6zM1303 560h26v40h-26zM1329 560h23v40h-23zM1352 560h18v40h-18zM1372 560h5v40h-5zM1377 560h5v40h-5zM1382 560h5v40h-5zM1387 560h15v40h-15zM1402 560h14v40h-14zM1416 560h13v40h-13zM1429 560h12v40h-12zM1441 560h11v40h-11zM1452 560h8v40h-8zM1460 560h7v40h-7zM1467 560h3v40h-3zM1470 560h3v40h-3zM1473 560h4v40h-4zM1476 560h4v40h-4zM1480 560h6v40h-6zM1486 560h7v40h-7zM1493 560h3v40h-3zM1495 560h4v40h-4zM1499 560h7v40h-7zM1506 560h3v40h-3zM1508 560h4v40h-4zM1512 560h6v40h-6zM1518 560h5v40h-5zM1523 560h5v40h-5zM1528 560h5v40h-5zM1533 560h5v40h-5zM1538 560h5v40h-5zM1543 560h4v40h-4zM1547 560h3v40h-3zM1622 560h18v40h-18zM2060 560h172v40h-172zM2231 560h4v40h-4zM2235 560h26v40h-26zM2261 560h9v40h-9zM2270 560h595v40h-595zM2865 560h4v40h-4zM2869 560h4v40h-4zM2872 560h4v40h-4zM1558 560h5v40h-5zM1563 560h5v40h-5zM1568 560h5v40h-5zM1573 560h5v40h-5zM1578 560h4v40h-4zM1582 560h5v40h-5zM1587 560h4v40h-4zM1591 560h4v40h-4zM1604 560h4v40h-4zM1609 560h5v40h-5zM1614 560h4v40h-4zM439 600h71v40h-71zM509 600h4v40h-4zM513 600h66v40h-66zM579 600h32v40h-32zM611 600h13v40h-13zM624 600h3v40h-3zM627 600h3v40h-3zM630 600h4v40h-4zM634 600h147v40h-147zM784 600h83v40h-83zM867 600h5v40h-5zM872 600h61v40h-61zM933 600h60v40h-60zM993 600h38v40h-38zM1031 600h13v40h-13zM1044 600h36v40h-36zM1080 600h6v40h-6zM1086 600h37v40h-37zM1123 600h32v40h-32zM1155 600h3v40h-3zM1158 600h27v40h-27zM1189 600h27v40h-27zM1216 600h3v40h-3zM1219 600h23v40h-23zM1242 600h6v40h-6zM1248 600h28v40h-28zM1276 600h21v40h-21zM1297 600h6v40h-6zM1303 600h26v40h-26zM1329 600h23v40h-23zM1352 600h18v40h-18zM1372 600h5v40h-5zM1377 600h5v40h-5zM1382 600h5v40h-5zM1387 600h15v40h-15zM1402 600h14v40h-14zM1416 600h23v40h-23zM1438 600h3v40h-3zM1441 600h11v40h-11zM1452 600h8v40h-8zM1460 600h7v40h-7zM1467 600h3v40h-3zM1470 600h3v40h-3zM1473 600h4v40h-4zM1476 600h4v40h-4zM1480 600h6v40h-6zM1486 600h7v40h-7zM1493 600h3v40h-3zM1495 600h4v40h-4zM1499 600h7v40h-7zM1506 600h3v40h-3zM1508 600h4v40h-4zM1512 600h6v40h-6zM1518 600h5v40h-5zM1523 600h5v40h-5zM1528 600h5v40h-5zM1533 600h5v40h-5zM1538 600h5v40h-5zM1543 600h4v40h-4zM1547 600h3v40h-3zM1622 600h18v40h-18zM2060 600h162v40h-162zM2222 600h7v40h-7zM2228 600h4v40h-4zM2231 600h4v40h-4zM2235 600h26v40h-26zM2261 600h9v40h-9zM2270 600h582v40h-582zM2852 600h13v40h-13zM2865 600h4v40h-4zM2869 600h4v40h-4zM2872 600h4v40h-4zM1558 600h5v40h-5zM1563 600h5v40h-5zM1568 600h5v40h-5zM1573 600h5v40h-5zM1578 600h4v40h-4zM1582 600h5v40h-5zM1587 600h4v40h-4zM1591 600h4v40h-4zM1604 600h4v40h-4zM1609 600h5v40h-5zM1614 600h4v40h-4zM439 640h71v40h-71zM509 640h4v40h-4zM513 640h66v40h-66zM579 640h32v40h-32zM611 640h13v40h-13zM624 640h3v40h-3zM627 640h3v40h-3zM630 640h4v40h-4zM634 640h147v40h-147zM784 640h83v40h-83zM867 640h5v40h-5zM872 640h61v40h-61zM933 640h60v40h-60zM993 640h38v40h-38zM1031 640h13v40h-13zM1044 640h36v40h-36zM1080 640h6v40h-6zM1086 640h37v40h-37zM1123 640h32v40h-32zM1155 640h3v40h-3zM1158 640h27v40h-27zM1189 640h27v40h-27zM1216 640h3v40h-3zM1219 640h23v40h-23zM1242 640h6v40h-6zM1248 640h28v40h-28zM1276 640h21v40h-21zM1297 640h6v40h-6zM1303 640h26v40h-26zM1329 640h20v40h-20zM1349 640h3v40h-3zM1352 640h18v40h-18zM1372 640h5v40h-5zM1382 640h5v40h-5zM1387 640h15v40h-15zM1402 640h14v40h-14zM1416 640h23v40h-23zM1438 640h3v40h-3zM1441 640h11v40h-11zM1452 640h8v40h-8zM1460 640h7v40h-7zM1467 640h3v40h-3zM1470 640h3v40h-3zM1473 640h4v40h-4zM1476 640h4v40h-4zM1480 640h6v40h-6zM1486 640h7v40h-7zM1493 640h3v40h-3zM1495 640h4v40h-4zM1499 640h7v40h-7zM1520 640h3v40h-3zM1523 640h5v40h-5zM1528 640h5v40h-5zM1533 640h5v40h-5zM1538 640h5v40h-5zM1543 640h4v40h-4zM1547 640h3v40h-3zM1622 640h18v40h-18zM2060 640h94v40h-94zM2154 640h48v40h-48zM2202 640h13v40h-13zM2215 640h4v40h-4zM2218 640h4v40h-4zM2222 640h7v40h-7zM2231 640h4v40h-4zM2235 640h26v40h-26zM2261 640h9v40h-9zM2270 640h346v40h-346zM2616 640h127v40h-127zM2743 640h69v40h-69zM2812 640h30v40h-30zM2842 640h4v40h-4zM2845 640h4v40h-4zM2852 640h13v40h-13zM2865 640h4v40h-4zM2869 640h4v40h-4zM2872 640h4v40h-4zM1558 640h5v40h-5zM1563 640h5v40h-5zM1568 640h5v40h-5zM1573 640h5v40h-5zM1578 640h4v40h-4zM1582 640h5v40h-5zM1587 640h4v40h-4zM1591 640h4v40h-4zM1604 640h4v40h-4zM1609 640h5v40h-5zM1614 640h4v40h-4zM439 680h71v40h-71zM509 680h4v40h-4zM513 680h66v40h-66zM579 680h32v40h-32zM611 680h13v40h-13zM624 680h3v40h-3zM627 680h3v40h-3zM630 680h4v40h-4zM634 680h147v40h-147zM784 680h42v40h-42zM826 680h41v40h-41zM867 680h4v40h-4zM872 680h61v40h-61zM933 680h59v40h-59zM993 680h19v40h-19zM1012 680h19v40h-19zM1031 680h13v40h-13zM1044 680h21v40h-21zM1065 680h15v40h-15zM1080 680h5v40h-5zM1086 680h20v40h-20zM1106 680h17v40h-17zM1123 680h19v40h-19zM1142 680h13v40h-13zM1155 680h3v40h-3zM1158 680h27v40h-27zM1189 680h14v40h-14zM1203 680h13v40h-13zM1216 680h3v40h-3zM1219 680h13v40h-13zM1232 680h10v40h-10zM1242 680h6v40h-6zM1248 680h17v40h-17zM1265 680h11v40h-11zM1276 680h11v40h-11zM1287 680h10v40h-10zM1297 680h6v40h-6zM1303 680h26v40h-26zM1329 680h20v40h-20zM1349 680h3v40h-3zM1352 680h18v40h-18zM1372 680h5v40h-5zM1382 680h5v40h-5zM1387 680h15v40h-15zM1402 680h14v40h-14zM1416 680h13v40h-13zM1429 680h10v40h-10zM1438 680h3v40h-3zM1441 680h11v40h-11zM1452 680h4v40h-4zM1456 680h4v40h-4zM1460 680h7v40h-7zM1467 680h3v40h-3zM1622 680h18v40h-18zM2060 680h94v40h-94zM2154 680h48v40h-48zM2202 680h13v40h-13zM2215 680h4v40h-4zM2218 680h4v40h-4zM2222 680h7v40h-7zM2231 680h4v40h-4zM2235 680h26v40h-26zM2261 680h9v40h-9zM2270 680h346v40h-346zM2616 680h127v40h-127zM2743 680h69v40h-69zM2812 680h30v40h-30zM2842 680h4v40h-4zM2845 680h4v40h-4zM2852 680h13v40h-13zM2865 680h4v40h-4zM2869 680h4v40h-4zM2872 680h4v40h-4zM1558 680h5v40h-5zM1563 680h5v40h-5zM1568 680h5v40h-5zM1573 680h5v40h-5zM1578 680h4v40h-4zM1582 680h5v40h-5zM1587 680h4v40h-4zM1591 680h4v40h-4zM1604 680h4v40h-4zM1609 680h5v40h-5zM1614 680h4v40h-4zM1470 680h5v40h-5zM1476 680h4v40h-4zM1480 680h4v40h-4zM1484 680h4v40h-4zM1488 680h5v40h-5zM1493 680h6v40h-6zM1499 680h5v40h-5zM1504 680h5v40h-5zM1509 680h4v40h-4zM1513 680h4v40h-4zM1523 680h5v40h-5zM1528 680h5v40h-5zM1533 680h5v40h-5zM1544 680h6v40h-6zM439 720h61v40h-61zM500 720h10v40h-10zM509 720h4v40h-4zM513 720h66v40h-66zM579 720h32v40h-32zM611 720h13v40h-13zM624 720h3v40h-3zM627 720h3v40h-3zM630 720h4v40h-4zM634 720h147v40h-147zM784 720h42v40h-42zM826 720h41v40h-41zM867 720h4v40h-4zM872 720h61v40h-61zM933 720h57v40h-57zM989 720h4v40h-4zM993 720h19v40h-19zM1012 720h19v40h-19zM1031 720h13v40h-13zM1044 720h21v40h-21zM1065 720h15v40h-15zM1086 720h20v40h-20zM1106 720h17v40h-17zM1123 720h19v40h-19zM1142 720h13v40h-13zM1155 720h3v40h-3zM1158 720h27v40h-27zM1189 720h14v40h-14zM1203 720h13v40h-13zM1216 720h3v40h-3zM1219 720h13v40h-13zM1232 720h10v40h-10zM1242 720h6v40h-6zM1248 720h17v40h-17zM1265 720h11v40h-11zM1276 720h11v40h-11zM1287 720h10v40h-10zM1297 720h6v40h-6zM1303 720h26v40h-26zM1329 720h20v40h-20zM1349 720h3v40h-3zM1352 720h18v40h-18zM1372 720h5v40h-5zM1382 720h5v40h-5zM1387 720h15v40h-15zM1402 720h14v40h-14zM1416 720h13v40h-13zM1429 720h10v40h-10zM1438 720h3v40h-3zM1441 720h11v40h-11zM1452 720h4v40h-4zM1456 720h4v40h-4zM1460 720h7v40h-7zM1467 720h3v40h-3zM1622 720h18v40h-18zM2060 720h94v40h-94zM2154 720h48v40h-48zM2202 720h13v40h-13zM2215 720h4v40h-4zM2218 720h4v40h-4zM2222 720h7v40h-7zM2231 720h4v40h-4zM2235 720h22v40h-22zM2257 720h4v40h-4zM2261 720h9v40h-9zM2270 720h346v40h-346zM2616 720h127v40h-127zM2743 720h69v40h-69zM2812 720h30v40h-30zM2842 720h4v40h-4zM2845 720h4v40h-4zM2852 720h13v40h-13zM2865 720h4v40h-4zM2869 720h4v40h-4zM2872 720h4v40h-4zM1558 720h5v40h-5zM1563 720h5v40h-5zM1568 720h5v40h-5zM1573 720h5v40h-5zM1578 720h4v40h-4zM1582 720h5v40h-5zM1587 720h4v40h-4zM1591 720h4v40h-4zM1604 720h4v40h-4zM1609 720h5v40h-5zM1614 720h4v40h-4zM1470 720h5v40h-5zM1476 720h4v40h-4zM1480 720h4v40h-4zM1484 720h4v40h-4zM1488 720h5v40h-5zM1493 720h6v40h-6zM1504 720h5v40h-5zM1509 720h4v40h-4zM1513 720h4v40h-4zM1523 720h5v40h-5zM1528 720h5v40h-5zM1533 720h5v40h-5zM1544 720h6v40h-6zM439 760h61v40h-61zM500 760h10v40h-10zM509 760h4v40h-4zM513 760h66v40h-66zM579 760h32v40h-32zM611 760h13v40h-13zM624 760h3v40h-3zM627 760h3v40h-3zM630 760h4v40h-4zM634 760h106v40h-106zM740 760h32v40h-32zM784 760h42v40h-42zM826 760h41v40h-41zM867 760h4v40h-4zM872 760h61v40h-61zM933 760h57v40h-57zM989 760h4v40h-4zM993 760h19v40h-19zM1012 760h19v40h-19zM1031 760h3v40h-3zM1034 760h3v40h-3zM1037 760h4v40h-4zM1044 760h21v40h-21zM1065 760h15v40h-15zM1086 760h20v40h-20zM1106 760h17v40h-17zM1123 760h19v40h-19zM1142 760h13v40h-13zM1155 760h3v40h-3zM1158 760h27v40h-27zM1189 760h14v40h-14zM1203 760h13v40h-13zM1216 760h3v40h-3zM1219 760h13v40h-13zM1232 760h10v40h-10zM1242 760h6v40h-6zM1248 760h17v40h-17zM1265 760h11v40h-11zM1276 760h11v40h-11zM1287 760h10v40h-10zM1297 760h6v40h-6zM1303 760h11v40h-11zM1314 760h9v40h-9zM1323 760h6v40h-6zM1329 760h20v40h-20zM1349 760h3v40h-3zM1352 760h15v40h-15zM1367 760h3v40h-3zM1372 760h5v40h-5zM1382 760h5v40h-5zM1387 760h9v40h-9zM1396 760h6v40h-6zM1402 760h14v40h-14zM1416 760h13v40h-13zM1429 760h10v40h-10zM1438 760h3v40h-3zM1441 760h11v40h-11zM1452 760h4v40h-4zM1456 760h4v40h-4zM1460 760h7v40h-7zM1467 760h3v40h-3zM1625 760h6v40h-6zM1630 760h6v40h-6zM1636 760h4v40h-4zM2060 760h94v40h-94zM2154 760h48v40h-48zM2202 760h13v40h-13zM2215 760h4v40h-4zM2218 760h4v40h-4zM2222 760h7v40h-7zM2231 760h4v40h-4zM2235 760h22v40h-22zM2257 760h4v40h-4zM2261 760h9v40h-9zM2270 760h346v40h-346zM2616 760h127v40h-127zM2743 760h69v40h-69zM2812 760h30v40h-30zM2842 760h4v40h-4zM2845 760h4v40h-4zM2852 760h13v40h-13zM2865 760h4v40h-4zM2869 760h4v40h-4zM2872 760h4v40h-4zM1558 760h5v40h-5zM1563 760h5v40h-5zM1568 760h5v40h-5zM1578 760h4v40h-4zM1582 760h5v40h-5zM1587 760h4v40h-4zM1591 760h4v40h-4zM1604 760h4v40h-4zM1609 760h5v40h-5zM1614 760h4v40h-4zM1470 760h5v40h-5zM1476 760h4v40h-4zM1480 760h4v40h-4zM1484 760h4v40h-4zM1488 760h5v40h-5zM1493 760h6v40h-6zM1509 760h4v40h-4zM1513 760h4v40h-4zM1523 760h5v40h-5zM1533 760h5v40h-5zM1544 760h6v40h-6zM439 800h61v40h-61zM500 800h10v40h-10zM509 800h4v40h-4zM513 800h66v40h-66zM579 800h32v40h-32zM611 800h13v40h-13zM624 800h3v40h-3zM627 800h3v40h-3zM630 800h4v40h-4zM634 800h106v40h-106zM740 800h32v40h-32zM784 800h42v40h-42zM826 800h41v40h-41zM867 800h4v40h-4zM872 800h61v40h-61zM933 800h57v40h-57zM989 800h4v40h-4zM993 800h19v40h-19zM1012 800h15v40h-15zM1027 800h3v40h-3zM1030 800h4v40h-4zM1034 800h3v40h-3zM1037 800h4v40h-4zM1044 800h21v40h-21zM1065 800h15v40h-15zM1086 800h20v40h-20zM1106 800h17v40h-17zM1123 800h19v40h-19zM1142 800h13v40h-13zM1155 800h3v40h-3zM1158 800h27v40h-27zM1189 800h14v40h-14zM1203 800h13v40h-13zM1216 800h3v40h-3zM1219 800h13v40h-13zM1232 800h10v40h-10zM1242 800h4v40h-4zM1245 800h3v40h-3zM1248 800h17v40h-17zM1265 800h11v40h-11zM1276 800h11v40h-11zM1287 800h10v40h-10zM1297 800h6v40h-6zM1303 800h11v40h-11zM1314 800h9v40h-9zM1323 800h6v40h-6zM1329 800h20v40h-20zM1349 800h3v40h-3zM1352 800h15v40h-15zM1367 800h3v40h-3zM1382 800h5v40h-5zM1387 800h9v40h-9zM1396 800h6v40h-6zM1402 800h14v40h-14zM1416 800h13v40h-13zM1429 800h10v40h-10zM1438 800h3v40h-3zM1441 800h11v40h-11zM1452 800h4v40h-4zM1456 800h4v40h-4zM1460 800h7v40h-7zM1467 800h3v40h-3zM1625 800h6v40h-6zM1630 800h6v40h-6zM1636 800h4v40h-4zM2060 800h94v40h-94zM2154 800h48v40h-48zM2202 800h13v40h-13zM2215 800h4v40h-4zM2218 800h4v40h-4zM2222 800h7v40h-7zM2231 800h4v40h-4zM2235 800h22v40h-22zM2257 800h4v40h-4zM2261 800h9v40h-9zM2270 800h346v40h-346zM2616 800h108v40h-108zM2724 800h19v40h-19zM2743 800h66v40h-66zM2809 800h3v40h-3zM2812 800h30v40h-30zM2842 800h7v40h-7zM2852 800h13v40h-13zM2865 800h4v40h-4zM2869 800h4v40h-4zM2872 800h4v40h-4zM1558 800h5v40h-5zM1563 800h5v40h-5zM1568 800h5v40h-5zM1578 800h4v40h-4zM1582 800h5v40h-5zM1587 800h4v40h-4zM1591 800h4v40h-4zM1604 800h4v40h-4zM1609 800h5v40h-5zM1614 800h4v40h-4zM1470 800h5v40h-5zM1476 800h4v40h-4zM1480 800h4v40h-4zM1484 800h4v40h-4zM1488 800h5v40h-5zM1493 800h6v40h-6zM1513 800h4v40h-4zM1523 800h5v40h-5zM1533 800h5v40h-5zM1544 800h6v40h-6zM439 840h61v40h-61zM500 840h10v40h-10zM509 840h4v40h-4zM513 840h66v40h-66zM579 840h29v40h-29zM607 840h4v40h-4zM611 840h13v40h-13zM624 840h3v40h-3zM627 840h3v40h-3zM630 840h4v40h-4zM634 840h106v40h-106zM740 840h25v40h-25zM784 840h42v40h-42zM826 840h41v40h-41zM867 840h4v40h-4zM872 840h61v40h-61zM933 840h57v40h-57zM989 840h4v40h-4zM993 840h19v40h-19zM1012 840h15v40h-15zM1027 840h3v40h-3zM1030 840h4v40h-4zM1034 840h3v40h-3zM1037 840h4v40h-4zM1044 840h21v40h-21zM1065 840h15v40h-15zM1079 840h4v40h-4zM1086 840h20v40h-20zM1106 840h17v40h-17zM1123 840h19v40h-19zM1142 840h13v40h-13zM1155 840h3v40h-3zM1158 840h27v40h-27zM1189 840h14v40h-14zM1203 840h13v40h-13zM1216 840h3v40h-3zM1219 840h13v40h-13zM1232 840h10v40h-10zM1242 840h4v40h-4zM1248 840h17v40h-17zM1265 840h11v40h-11zM1276 840h11v40h-11zM1287 840h10v40h-10zM1297 840h3v40h-3zM1299 840h4v40h-4zM1303 840h11v40h-11zM1314 840h9v40h-9zM1323 840h6v40h-6zM1329 840h20v40h-20zM1349 840h3v40h-3zM1352 840h15v40h-15zM1367 840h3v40h-3zM1382 840h5v40h-5zM1387 840h9v40h-9zM1396 840h6v40h-6zM1402 840h14v40h-14zM1416 840h13v40h-13zM1429 840h10v40h-10zM1438 840h3v40h-3zM1441 840h11v40h-11zM1452 840h4v40h-4zM1456 840h4v40h-4zM1460 840h7v40h-7zM1467 840h3v40h-3zM1625 840h6v40h-6zM1630 840h6v40h-6zM1636 840h4v40h-4zM2060 840h81v40h-81zM2141 840h13v40h-13zM2154 840h48v40h-48zM2202 840h13v40h-13zM2215 840h4v40h-4zM2218 840h4v40h-4zM2231 840h4v40h-4zM2235 840h22v40h-22zM2257 840h4v40h-4zM2261 840h9v40h-9zM2270 840h288v40h-288zM2558 840h48v40h-48zM2606 840h4v40h-4zM2610 840h4v40h-4zM2616 840h102v40h-102zM2718 840h5v40h-5zM2724 840h19v40h-19zM2743 840h30v40h-30zM2773 840h13v40h-13zM2786 840h10v40h-10zM2796 840h13v40h-13zM2809 840h3v40h-3zM2812 840h30v40h-30zM2842 840h4v40h-4zM2845 840h4v40h-4zM2852 840h13v40h-13zM2865 840h4v40h-4zM2869 840h4v40h-4zM2872 840h4v40h-4zM1558 840h5v40h-5zM1563 840h5v40h-5zM1568 840h5v40h-5zM1582 840h5v40h-5zM1587 840h4v40h-4zM1591 840h4v40h-4zM1604 840h4v40h-4zM1609 840h5v40h-5zM1614 840h4v40h-4zM1470 840h5v40h-5zM1476 840h4v40h-4zM1480 840h4v40h-4zM1484 840h4v40h-4zM1488 840h5v40h-5zM1493 840h6v40h-6zM1513 840h4v40h-4zM1523 840h5v40h-5zM1533 840h5v40h-5zM1544 840h6v40h-6zM439 880h61v40h-61zM500 880h10v40h-10zM509 880h4v40h-4zM513 880h66v40h-66zM579 880h29v40h-29zM607 880h4v40h-4zM611 880h13v40h-13zM624 880h3v40h-3zM627 880h3v40h-3zM630 880h4v40h-4zM634 880h54v40h-54zM688 880h17v40h-17zM740 880h25v40h-25zM784 880h42v40h-42zM826 880h41v40h-41zM872 880h61v40h-61zM933 880h57v40h-57zM989 880h4v40h-4zM993 880h19v40h-19zM1012 880h15v40h-15zM1027 880h3v40h-3zM1030 880h4v40h-4zM1034 880h3v40h-3zM1037 880h4v40h-4zM1044 880h21v40h-21zM1065 880h15v40h-15zM1086 880h20v40h-20zM1106 880h17v40h-17zM1123 880h19v40h-19zM1142 880h13v40h-13zM1155 880h3v40h-3zM1158 880h27v40h-27zM1189 880h14v40h-14zM1203 880h13v40h-13zM1216 880h3v40h-3zM1219 880h13v40h-13zM1232 880h10v40h-10zM1242 880h4v40h-4zM1248 880h17v40h-17zM1265 880h11v40h-11zM1276 880h11v40h-11zM1287 880h10v40h-10zM1303 880h11v40h-11zM1314 880h9v40h-9zM1323 880h6v40h-6zM1329 880h20v40h-20zM1349 880h3v40h-3zM1352 880h15v40h-15zM1367 880h3v40h-3zM1382 880h5v40h-5zM1387 880h9v40h-9zM1396 880h6v40h-6zM1402 880h14v40h-14zM1416 880h13v40h-13zM1429 880h10v40h-10zM1438 880h3v40h-3zM1441 880h11v40h-11zM1452 880h4v40h-4zM1456 880h4v40h-4zM1460 880h7v40h-7zM1467 880h3v40h-3zM1625 880h6v40h-6zM1630 880h6v40h-6zM1636 880h4v40h-4zM2060 880h81v40h-81zM2141 880h13v40h-13zM2154 880h48v40h-48zM2202 880h13v40h-13zM2215 880h4v40h-4zM2218 880h4v40h-4zM2231 880h4v40h-4zM2235 880h22v40h-22zM2257 880h4v40h-4zM2270 880h288v40h-288zM2558 880h48v40h-48zM2606 880h4v40h-4zM2610 880h4v40h-4zM2616 880h102v40h-102zM2718 880h5v40h-5zM2724 880h19v40h-19zM2743 880h30v40h-30zM2773 880h13v40h-13zM2786 880h10v40h-10zM2796 880h13v40h-13zM2812 880h30v40h-30zM2842 880h4v40h-4zM2845 880h4v40h-4zM2852 880h13v40h-13zM2865 880h4v40h-4zM2869 880h4v40h-4zM2872 880h4v40h-4zM1558 880h5v40h-5zM1563 880h5v40h-5zM1568 880h5v40h-5zM1582 880h5v40h-5zM1587 880h4v40h-4zM1591 880h4v40h-4zM1604 880h4v40h-4zM1609 880h5v40h-5zM1614 880h4v40h-4zM1470 880h5v40h-5zM1476 880h4v40h-4zM1480 880h4v40h-4zM1484 880h4v40h-4zM1488 880h5v40h-5zM1493 880h6v40h-6zM1513 880h4v40h-4zM1523 880h5v40h-5zM1533 880h5v40h-5zM1544 880h6v40h-6zM439 920h61v40h-61zM500 920h10v40h-10zM509 920h4v40h-4zM513 920h66v40h-66zM579 920h29v40h-29zM607 920h4v40h-4zM611 920h13v40h-13zM624 920h3v40h-3zM627 920h3v40h-3zM630 920h4v40h-4zM634 920h54v40h-54zM688 920h17v40h-17zM740 920h25v40h-25zM784 920h42v40h-42zM826 920h41v40h-41zM867 920h4v40h-4zM872 920h19v40h-19zM891 920h4v40h-4zM895 920h4v40h-4zM899 920h4v40h-4zM904 920h4v40h-4zM909 920h4v40h-4zM914 920h4v40h-4zM919 920h4v40h-4zM924 920h4v40h-4zM928 920h4v40h-4zM933 920h57v40h-57zM989 920h4v40h-4zM993 920h8v40h-8zM1002 920h5v40h-5zM1007 920h5v40h-5zM1012 920h15v40h-15zM1027 920h3v40h-3zM1030 920h4v40h-4zM1034 920h3v40h-3zM1037 920h4v40h-4zM1044 920h21v40h-21zM1065 920h15v40h-15zM1086 920h20v40h-20zM1106 920h5v40h-5zM1111 920h5v40h-5zM1117 920h6v40h-6zM1123 920h19v40h-19zM1142 920h13v40h-13zM1155 920h3v40h-3zM1158 920h27v40h-27zM1189 920h14v40h-14zM1203 920h13v40h-13zM1216 920h3v40h-3zM1219 920h13v40h-13zM1232 920h10v40h-10zM1242 920h4v40h-4zM1248 920h17v40h-17zM1265 920h11v40h-11zM1276 920h11v40h-11zM1287 920h10v40h-10zM1303 920h11v40h-11zM1314 920h9v40h-9zM1323 920h6v40h-6zM1329 920h20v40h-20zM1349 920h4v40h-4zM1353 920h4v40h-4zM1357 920h4v40h-4zM1361 920h4v40h-4zM1365 920h4v40h-4zM1382 920h5v40h-5zM1387 920h5v40h-5zM1392 920h4v40h-4zM1396 920h6v40h-6zM1402 920h7v40h-7zM1409 920h7v40h-7zM1416 920h6v40h-6zM1422 920h7v40h-7zM1429 920h10v40h-10zM1438 920h3v40h-3zM1441 920h5v40h-5zM1446 920h6v40h-6zM1452 920h4v40h-4zM1456 920h4v40h-4zM1460 920h7v40h-7zM1467 920h3v40h-3zM1625 920h6v40h-6zM1630 920h6v40h-6zM1636 920h4v40h-4zM2060 920h81v40h-81zM2141 920h13v40h-13zM2154 920h48v40h-48zM2202 920h13v40h-13zM2215 920h4v40h-4zM2218 920h4v40h-4zM2231 920h5v40h-5zM2235 920h22v40h-22zM2257 920h4v40h-4zM2270 920h288v40h-288zM2558 920h48v40h-48zM2606 920h4v40h-4zM2610 920h4v40h-4zM2616 920h102v40h-102zM2718 920h5v40h-5zM2724 920h19v40h-19zM2743 920h30v40h-30zM2773 920h13v40h-13zM2786 920h10v40h-10zM2796 920h13v40h-13zM2812 920h30v40h-30zM2842 920h4v40h-4zM2845 920h4v40h-4zM2852 920h13v40h-13zM2865 920h4v40h-4zM2869 920h4v40h-4zM2872 920h4v40h-4zM1558 920h5v40h-5zM1563 920h5v40h-5zM1568 920h5v40h-5zM1582 920h5v40h-5zM1587 920h4v40h-4zM1591 920h4v40h-4zM1604 920h4v40h-4zM1609 920h5v40h-5zM1614 920h4v40h-4zM1470 920h5v40h-5zM1476 920h4v40h-4zM1480 920h4v40h-4zM1484 920h4v40h-4zM1488 920h5v40h-5zM1493 920h6v40h-6zM1513 920h4v40h-4zM1523 920h5v40h-5zM1533 920h5v40h-5zM1544 920h6v40h-6zM439 960h61v40h-61zM500 960h10v40h-10zM509 960h4v40h-4zM513 960h66v40h-66zM579 960h23v40h-23zM602 960h6v40h-6zM607 960h4v40h-4zM611 960h13v40h-13zM624 960h3v40h-3zM627 960h3v40h-3zM630 960h4v40h-4zM634 960h47v40h-47zM681 960h7v40h-7zM688 960h14v40h-14zM701 960h4v40h-4zM740 960h25v40h-25zM784 960h42v40h-42zM826 960h41v40h-41zM867 960h4v40h-4zM872 960h17v40h-17zM890 960h4v40h-4zM895 960h4v40h-4zM900 960h4v40h-4zM905 960h4v40h-4zM910 960h4v40h-4zM915 960h4v40h-4zM920 960h4v40h-4zM925 960h4v40h-4zM929 960h4v40h-4zM933 960h47v40h-47zM980 960h4v40h-4zM984 960h4v40h-4zM988 960h4v40h-4zM993 960h8v40h-8zM1002 960h5v40h-5zM1007 960h5v40h-5zM1012 960h15v40h-15zM1027 960h3v40h-3zM1030 960h4v40h-4zM1034 960h3v40h-3zM1037 960h4v40h-4zM1044 960h21v40h-21zM1065 960h15v40h-15zM1086 960h20v40h-20zM1106 960h5v40h-5zM1111 960h5v40h-5zM1117 960h6v40h-6zM1128 960h10v40h-10zM1138 960h4v40h-4zM1142 960h13v40h-13zM1155 960h3v40h-3zM1158 960h27v40h-27zM1189 960h14v40h-14zM1203 960h13v40h-13zM1216 960h3v40h-3zM1219 960h13v40h-13zM1232 960h10v40h-10zM1248 960h17v40h-17zM1265 960h11v40h-11zM1276 960h11v40h-11zM1287 960h10v40h-10zM1303 960h7v40h-7zM1310 960h4v40h-4zM1314 960h9v40h-9zM1323 960h6v40h-6zM1329 960h15v40h-15zM1344 960h4v40h-4zM1348 960h4v40h-4zM1352 960h4v40h-4zM1356 960h4v40h-4zM1360 960h4v40h-4zM1364 960h5v40h-5zM1387 960h5v40h-5zM1392 960h4v40h-4zM1396 960h6v40h-6zM1402 960h7v40h-7zM1409 960h7v40h-7zM1416 960h6v40h-6zM1422 960h7v40h-7zM1429 960h10v40h-10zM1438 960h3v40h-3zM1441 960h5v40h-5zM1446 960h6v40h-6zM1452 960h4v40h-4zM1456 960h4v40h-4zM1460 960h7v40h-7zM1467 960h3v40h-3zM1625 960h6v40h-6zM1630 960h6v40h-6zM1636 960h4v40h-4zM2060 960h81v40h-81zM2141 960h13v40h-13zM2154 960h48v40h-48zM2202 960h13v40h-13zM2215 960h4v40h-4zM2218 960h4v40h-4zM2235 960h22v40h-22zM2257 960h4v40h-4zM2270 960h288v40h-288zM2558 960h48v40h-48zM2606 960h4v40h-4zM2610 960h4v40h-4zM2616 960h102v40h-102zM2718 960h5v40h-5zM2724 960h16v40h-16zM2740 960h3v40h-3zM2743 960h30v40h-30zM2773 960h13v40h-13zM2786 960h10v40h-10zM2796 960h13v40h-13zM2812 960h30v40h-30zM2842 960h4v40h-4zM2845 960h4v40h-4zM2852 960h13v40h-13zM2865 960h4v40h-4zM2869 960h4v40h-4zM2872 960h4v40h-4zM1558 960h5v40h-5zM1563 960h5v40h-5zM1568 960h5v40h-5zM1582 960h5v40h-5zM1587 960h4v40h-4zM1591 960h4v40h-4zM1604 960h4v40h-4zM1609 960h5v40h-5zM1614 960h4v40h-4zM1470 960h5v40h-5zM1476 960h4v40h-4zM1480 960h4v40h-4zM1484 960h4v40h-4zM1488 960h5v40h-5zM1493 960h6v40h-6zM1513 960h4v40h-4zM1523 960h5v40h-5zM1533 960h5v40h-5zM1544 960h6v40h-6zM439 1000h61v40h-61zM500 1000h10v40h-10zM509 1000h4v40h-4zM513 1000h66v40h-66zM579 1000h23v40h-23zM602 1000h6v40h-6zM607 1000h4v40h-4zM611 1000h13v40h-13zM624 1000h3v40h-3zM627 1000h3v40h-3zM630 1000h4v40h-4zM681 1000h7v40h-7zM688 1000h14v40h-14zM701 1000h4v40h-4zM740 1000h25v40h-25zM784 1000h38v40h-38zM822 1000h4v40h-4zM826 1000h41v40h-41zM867 1000h4v40h-4zM872 1000h8v40h-8zM880 1000h4v40h-4zM884 1000h5v40h-5zM933 1000h47v40h-47zM1044 1000h12v40h-12zM1057 1000h8v40h-8zM1065 1000h15v40h-15zM1086 1000h20v40h-20zM1128 1000h10v40h-10zM1138 1000h4v40h-4zM1142 1000h13v40h-13zM1158 1000h15v40h-15zM1173 1000h9v40h-9zM1189 1000h14v40h-14zM1203 1000h13v40h-13zM1219 1000h13v40h-13zM1232 1000h10v40h-10zM1248 1000h17v40h-17zM1265 1000h11v40h-11zM1276 1000h11v40h-11zM1314 1000h9v40h-9zM1323 1000h6v40h-6zM1329 1000h15v40h-15zM1625 1000h6v40h-6zM1630 1000h6v40h-6zM1636 1000h4v40h-4zM2060 1000h81v40h-81zM2141 1000h13v40h-13zM2154 1000h48v40h-48zM2202 1000h13v40h-13zM2215 1000h4v40h-4zM2218 1000h4v40h-4zM2235 1000h14v40h-14zM2249 1000h8v40h-8zM2257 1000h4v40h-4zM2270 1000h288v40h-288zM2558 1000h45v40h-45zM2606 1000h6v40h-6zM2616 1000h76v40h-76zM2692 1000h26v40h-26zM2718 1000h5v40h-5zM2724 1000h19v40h-19zM2743 1000h30v40h-30zM2773 1000h13v40h-13zM2785 1000h11v40h-11zM2796 1000h11v40h-11zM2807 1000h4v40h-4zM2812 1000h27v40h-27zM2840 1000h11v40h-11zM2853 1000h12v40h-12zM2865 1000h4v40h-4zM2869 1000h4v40h-4zM2872 1000h4v40h-4zM1558 1000h5v40h-5zM1563 1000h5v40h-5zM1568 1000h5v40h-5zM1582 1000h5v40h-5zM1587 1000h4v40h-4zM1591 1000h4v40h-4zM1604 1000h4v40h-4zM1609 1000h5v40h-5zM1614 1000h4v40h-4zM1470 1000h5v40h-5zM1476 1000h4v40h-4zM1480 1000h4v40h-4zM1484 1000h4v40h-4zM1488 1000h5v40h-5zM1493 1000h6v40h-6zM1513 1000h4v40h-4zM1523 1000h5v40h-5zM1544 1000h6v40h-6zM889 1000h4v40h-4zM899 1000h6v40h-6zM906 1000h6v40h-6zM912 1000h4v40h-4zM916 1000h4v40h-4zM926 1000h6v40h-6zM988 1000h6v40h-6zM994 1000h5v40h-5zM999 1000h7v40h-7zM1006 1000h5v40h-5zM1011 1000h5v40h-5zM1016 1000h7v40h-7zM1023 1000h6v40h-6zM1106 1000h6v40h-6zM1112 1000h4v40h-4zM1116 1000h5v40h-5zM1293 1000h6v40h-6zM1300 1000h3v40h-3zM1307 1000h6v40h-6zM1344 1000h4v40h-4zM1348 1000h5v40h-5zM1354 1000h5v40h-5zM1364 1000h5v40h-5zM1391 1000h5v40h-5zM1400 1000h5v40h-5zM1406 1000h5v40h-5zM1411 1000h4v40h-4zM1421 1000h4v40h-4zM1430 1000h5v40h-5zM1436 1000h4v40h-4zM1446 1000h5v40h-5zM1451 1000h5v40h-5zM1456 1000h5v40h-5zM1461 1000h5v40h-5zM439 1040h61v40h-61zM500 1040h10v40h-10zM509 1040h4v40h-4zM513 1040h47v40h-47zM560 1040h9v40h-9zM569 1040h10v40h-10zM579 1040h18v40h-18zM597 1040h4v40h-4zM601 1040h4v40h-4zM605 1040h4v40h-4zM608 1040h3v40h-3zM611 1040h10v40h-10zM621 1040h3v40h-3zM624 1040h3v40h-3zM630 1040h4v40h-4zM681 1040h7v40h-7zM688 1040h14v40h-14zM701 1040h4v40h-4zM740 1040h25v40h-25zM784 1040h38v40h-38zM822 1040h4v40h-4zM826 1040h27v40h-27zM854 1040h5v40h-5zM860 1040h7v40h-7zM867 1040h4v40h-4zM933 1040h47v40h-47zM1086 1040h20v40h-20zM1314 1040h9v40h-9zM1323 1040h6v40h-6zM1329 1040h15v40h-15zM1625 1040h6v40h-6zM1630 1040h6v40h-6zM1636 1040h4v40h-4zM2060 1040h81v40h-81zM2141 1040h13v40h-13zM2154 1040h36v40h-36zM2190 1040h9v40h-9zM2200 1040h3v40h-3zM2203 1040h3v40h-3zM2207 1040h7v40h-7zM2215 1040h4v40h-4zM2219 1040h5v40h-5zM2235 1040h14v40h-14zM2249 1040h8v40h-8zM2257 1040h4v40h-4zM2270 1040h275v40h-275zM2545 1040h7v40h-7zM2552 1040h6v40h-6zM2558 1040h32v40h-32zM2590 1040h10v40h-10zM2599 1040h4v40h-4zM2606 1040h4v40h-4zM2610 1040h6v40h-6zM2616 1040h23v40h-23zM2639 1040h19v40h-19zM2658 1040h10v40h-10zM2667 1040h8v40h-8zM2676 1040h6v40h-6zM2683 1040h9v40h-9zM2692 1040h26v40h-26zM2718 1040h5v40h-5zM2724 1040h17v40h-17zM2743 1040h20v40h-20zM2763 1040h10v40h-10zM2773 1040h13v40h-13zM2785 1040h11v40h-11zM2796 1040h11v40h-11zM2812 1040h27v40h-27zM2840 1040h11v40h-11zM2852 1040h13v40h-13zM2865 1040h4v40h-4zM2869 1040h4v40h-4zM2872 1040h4v40h-4zM1558 1040h5v40h-5zM1563 1040h5v40h-5zM1568 1040h5v40h-5zM1582 1040h5v40h-5zM1587 1040h4v40h-4zM1591 1040h4v40h-4zM1604 1040h4v40h-4zM1609 1040h5v40h-5zM1614 1040h4v40h-4zM1470 1040h5v40h-5zM1476 1040h4v40h-4zM1480 1040h4v40h-4zM1484 1040h4v40h-4zM1488 1040h5v40h-5zM1493 1040h6v40h-6zM1513 1040h4v40h-4zM1523 1040h5v40h-5zM1544 1040h6v40h-6zM872 1040h4v40h-4zM878 1040h5v40h-5zM889 1040h4v40h-4zM899 1040h6v40h-6zM912 1040h4v40h-4zM916 1040h4v40h-4zM926 1040h6v40h-6zM988 1040h6v40h-6zM994 1040h5v40h-5zM999 1040h7v40h-7zM1006 1040h5v40h-5zM1011 1040h5v40h-5zM1016 1040h7v40h-7zM1023 1040h6v40h-6zM1044 1040h6v40h-6zM1054 1040h6v40h-6zM1060 1040h4v40h-4zM1064 1040h4v40h-4zM1069 1040h6v40h-6zM1075 1040h4v40h-4zM1106 1040h6v40h-6zM1112 1040h4v40h-4zM1116 1040h5v40h-5zM1121 1040h8v40h-8zM1130 1040h8v40h-8zM1138 1040h4v40h-4zM1142 1040h4v40h-4zM1146 1040h6v40h-6zM1152 1040h7v40h-7zM1159 1040h4v40h-4zM1163 1040h4v40h-4zM1167 1040h8v40h-8zM1175 1040h8v40h-8zM1189 1040h5v40h-5zM1194 1040h8v40h-8zM1202 1040h7v40h-7zM1209 1040h8v40h-8zM1222 1040h5v40h-5zM1228 1040h4v40h-4zM1233 1040h5v40h-5zM1238 1040h4v40h-4zM1248 1040h7v40h-7zM1256 1040h5v40h-5zM1261 1040h6v40h-6zM1267 1040h7v40h-7zM1275 1040h7v40h-7zM1282 1040h4v40h-4zM1286 1040h7v40h-7zM1293 1040h6v40h-6zM1300 1040h3v40h-3zM1307 1040h6v40h-6zM1344 1040h4v40h-4zM1348 1040h5v40h-5zM1354 1040h5v40h-5zM1364 1040h5v40h-5zM1406 1040h5v40h-5zM1411 1040h4v40h-4zM1421 1040h4v40h-4zM1446 1040h5v40h-5zM1451 1040h5v40h-5zM1456 1040h5v40h-5zM439 1080h61v40h-61zM500 1080h4v40h-4zM504 1080h3v40h-3zM507 1080h3v40h-3zM513 1080h47v40h-47zM560 1080h9v40h-9zM569 1080h10v40h-10zM579 1080h18v40h-18zM597 1080h4v40h-4zM601 1080h4v40h-4zM605 1080h4v40h-4zM608 1080h3v40h-3zM611 1080h10v40h-10zM621 1080h3v40h-3zM624 1080h3v40h-3zM630 1080h4v40h-4zM688 1080h14v40h-14zM701 1080h4v40h-4zM740 1080h25v40h-25zM784 1080h38v40h-38zM822 1080h4v40h-4zM826 1080h14v40h-14zM841 1080h8v40h-8zM933 1080h17v40h-17zM950 1080h10v40h-10zM1314 1080h9v40h-9zM1323 1080h6v40h-6zM1329 1080h15v40h-15zM1625 1080h6v40h-6zM1630 1080h6v40h-6zM1636 1080h4v40h-4zM2060 1080h28v40h-28zM2088 1080h19v40h-19zM2107 1080h13v40h-13zM2120 1080h10v40h-10zM2130 1080h8v40h-8zM2138 1080h3v40h-3zM2141 1080h13v40h-13zM2154 1080h36v40h-36zM2190 1080h9v40h-9zM2200 1080h3v40h-3zM2203 1080h3v40h-3zM2207 1080h7v40h-7zM2215 1080h4v40h-4zM2219 1080h5v40h-5zM2235 1080h14v40h-14zM2249 1080h8v40h-8zM2257 1080h4v40h-4zM2270 1080h275v40h-275zM2545 1080h7v40h-7zM2552 1080h6v40h-6zM2558 1080h32v40h-32zM2590 1080h10v40h-10zM2599 1080h4v40h-4zM2606 1080h4v40h-4zM2610 1080h6v40h-6zM2616 1080h23v40h-23zM2639 1080h19v40h-19zM2658 1080h10v40h-10zM2667 1080h8v40h-8zM2676 1080h6v40h-6zM2683 1080h9v40h-9zM2692 1080h26v40h-26zM2718 1080h5v40h-5zM2724 1080h17v40h-17zM2743 1080h20v40h-20zM2763 1080h10v40h-10zM2773 1080h13v40h-13zM2785 1080h11v40h-11zM2796 1080h11v40h-11zM2812 1080h27v40h-27zM2840 1080h11v40h-11zM2852 1080h13v40h-13zM2865 1080h4v40h-4zM2869 1080h4v40h-4zM2872 1080h4v40h-4zM1558 1080h5v40h-5zM1563 1080h5v40h-5zM1568 1080h5v40h-5zM1582 1080h5v40h-5zM1587 1080h4v40h-4zM1591 1080h4v40h-4zM1604 1080h4v40h-4zM1609 1080h5v40h-5zM1614 1080h4v40h-4zM1470 1080h5v40h-5zM1484 1080h4v40h-4zM1488 1080h5v40h-5zM1493 1080h6v40h-6zM1513 1080h4v40h-4zM1523 1080h5v40h-5zM1544 1080h6v40h-6zM850 1080h7v40h-7zM857 1080h7v40h-7zM864 1080h4v40h-4zM868 1080h4v40h-4zM872 1080h4v40h-4zM878 1080h5v40h-5zM889 1080h4v40h-4zM899 1080h6v40h-6zM912 1080h4v40h-4zM916 1080h4v40h-4zM926 1080h6v40h-6zM966 1080h7v40h-7zM973 1080h4v40h-4zM988 1080h6v40h-6zM994 1080h5v40h-5zM999 1080h7v40h-7zM1006 1080h5v40h-5zM1011 1080h5v40h-5zM1016 1080h7v40h-7zM1023 1080h6v40h-6zM1044 1080h6v40h-6zM1054 1080h6v40h-6zM1060 1080h4v40h-4zM1064 1080h4v40h-4zM1069 1080h6v40h-6zM1075 1080h4v40h-4zM1086 1080h7v40h-7zM1093 1080h4v40h-4zM1098 1080h7v40h-7zM1106 1080h6v40h-6zM1112 1080h4v40h-4zM1116 1080h5v40h-5zM1121 1080h8v40h-8zM1130 1080h8v40h-8zM1138 1080h4v40h-4zM1142 1080h4v40h-4zM1146 1080h6v40h-6zM1152 1080h7v40h-7zM1159 1080h4v40h-4zM1163 1080h4v40h-4zM1167 1080h8v40h-8zM1175 1080h8v40h-8zM1189 1080h5v40h-5zM1194 1080h8v40h-8zM1202 1080h7v40h-7zM1209 1080h8v40h-8zM1222 1080h5v40h-5zM1228 1080h4v40h-4zM1233 1080h5v40h-5zM1238 1080h4v40h-4zM1248 1080h7v40h-7zM1256 1080h5v40h-5zM1261 1080h6v40h-6zM1267 1080h7v40h-7zM1275 1080h7v40h-7zM1282 1080h4v40h-4zM1286 1080h7v40h-7zM1293 1080h6v40h-6zM1300 1080h3v40h-3zM1307 1080h6v40h-6zM1344 1080h4v40h-4zM1348 1080h5v40h-5zM1354 1080h5v40h-5zM1364 1080h5v40h-5zM1406 1080h5v40h-5zM1411 1080h4v40h-4zM1421 1080h4v40h-4zM1446 1080h5v40h-5zM1451 1080h5v40h-5zM1456 1080h5v40h-5zM439 1120h61v40h-61zM500 1120h4v40h-4zM504 1120h3v40h-3zM507 1120h3v40h-3zM513 1120h47v40h-47zM560 1120h9v40h-9zM569 1120h10v40h-10zM579 1120h13v40h-13zM592 1120h4v40h-4zM596 1120h4v40h-4zM600 1120h4v40h-4zM604 1120h5v40h-5zM611 1120h10v40h-10zM621 1120h3v40h-3zM624 1120h3v40h-3zM630 1120h4v40h-4zM688 1120h14v40h-14zM701 1120h4v40h-4zM1314 1120h9v40h-9zM1323 1120h6v40h-6zM1329 1120h15v40h-15zM1625 1120h6v40h-6zM1630 1120h6v40h-6zM1636 1120h4v40h-4zM2060 1120h28v40h-28zM2088 1120h19v40h-19zM2107 1120h13v40h-13zM2120 1120h10v40h-10zM2130 1120h8v40h-8zM2138 1120h3v40h-3zM2141 1120h13v40h-13zM2154 1120h36v40h-36zM2190 1120h9v40h-9zM2200 1120h3v40h-3zM2203 1120h3v40h-3zM2207 1120h7v40h-7zM2215 1120h4v40h-4zM2219 1120h5v40h-5zM2235 1120h14v40h-14zM2249 1120h8v40h-8zM2257 1120h4v40h-4zM2270 1120h275v40h-275zM2545 1120h7v40h-7zM2552 1120h6v40h-6zM2558 1120h32v40h-32zM2590 1120h10v40h-10zM2599 1120h4v40h-4zM2606 1120h4v40h-4zM2610 1120h6v40h-6zM2616 1120h23v40h-23zM2639 1120h19v40h-19zM2658 1120h10v40h-10zM2667 1120h8v40h-8zM2676 1120h6v40h-6zM2683 1120h9v40h-9zM2692 1120h26v40h-26zM2718 1120h5v40h-5zM2724 1120h17v40h-17zM2743 1120h20v40h-20zM2763 1120h10v40h-10zM2773 1120h13v40h-13zM2785 1120h11v40h-11zM2796 1120h11v40h-11zM2812 1120h27v40h-27zM2852 1120h13v40h-13zM2865 1120h4v40h-4zM2869 1120h4v40h-4zM2872 1120h4v40h-4zM1558 1120h5v40h-5zM1563 1120h5v40h-5zM1568 1120h5v40h-5zM1582 1120h5v40h-5zM1587 1120h4v40h-4zM1591 1120h4v40h-4zM1604 1120h4v40h-4zM1609 1120h5v40h-5zM1614 1120h4v40h-4zM1470 1120h5v40h-5zM1484 1120h4v40h-4zM1488 1120h5v40h-5zM1493 1120h6v40h-6zM1513 1120h4v40h-4zM1544 1120h6v40h-6zM784 1120h5v40h-5zM789 1120h6v40h-6zM795 1120h7v40h-7zM802 1120h5v40h-5zM807 1120h7v40h-7zM826 1120h7v40h-7zM833 1120h6v40h-6zM839 1120h6v40h-6zM845 1120h4v40h-4zM850 1120h7v40h-7zM857 1120h7v40h-7zM864 1120h4v40h-4zM868 1120h4v40h-4zM872 1120h4v40h-4zM878 1120h5v40h-5zM889 1120h4v40h-4zM912 1120h4v40h-4zM916 1120h4v40h-4zM926 1120h6v40h-6zM932 1120h3v40h-3zM939 1120h6v40h-6zM945 1120h5v40h-5zM950 1120h4v40h-4zM954 1120h4v40h-4zM959 1120h7v40h-7zM966 1120h7v40h-7zM973 1120h4v40h-4zM988 1120h6v40h-6zM994 1120h5v40h-5zM999 1120h7v40h-7zM1006 1120h5v40h-5zM1011 1120h5v40h-5zM1016 1120h7v40h-7zM1023 1120h6v40h-6zM1044 1120h6v40h-6zM1054 1120h6v40h-6zM1064 1120h4v40h-4zM1069 1120h6v40h-6zM1075 1120h4v40h-4zM1086 1120h7v40h-7zM1093 1120h4v40h-4zM1098 1120h7v40h-7zM1106 1120h6v40h-6zM1112 1120h4v40h-4zM1116 1120h5v40h-5zM1121 1120h8v40h-8zM1130 1120h8v40h-8zM1138 1120h4v40h-4zM1142 1120h4v40h-4zM1146 1120h6v40h-6zM1152 1120h7v40h-7zM1159 1120h4v40h-4zM1163 1120h4v40h-4zM1167 1120h8v40h-8zM1175 1120h8v40h-8zM1189 1120h5v40h-5zM1194 1120h8v40h-8zM1202 1120h7v40h-7zM1209 1120h8v40h-8zM1222 1120h5v40h-5zM1228 1120h4v40h-4zM1233 1120h5v40h-5zM1238 1120h4v40h-4zM1248 1120h7v40h-7zM1256 1120h5v40h-5zM1261 1120h6v40h-6zM1267 1120h7v40h-7zM1275 1120h7v40h-7zM1282 1120h4v40h-4zM1286 1120h7v40h-7zM1293 1120h6v40h-6zM1300 1120h3v40h-3zM1307 1120h6v40h-6zM1344 1120h4v40h-4zM1348 1120h5v40h-5zM1354 1120h5v40h-5zM1364 1120h5v40h-5zM1406 1120h5v40h-5zM1411 1120h4v40h-4zM1421 1120h4v40h-4zM1451 1120h5v40h-5zM1456 1120h5v40h-5zM439 1160h49v40h-49zM488 1160h6v40h-6zM494 1160h3v40h-3zM497 1160h3v40h-3zM500 1160h7v40h-7zM507 1160h3v40h-3zM513 1160h47v40h-47zM560 1160h9v40h-9zM569 1160h10v40h-10zM579 1160h13v40h-13zM592 1160h4v40h-4zM596 1160h4v40h-4zM600 1160h4v40h-4zM604 1160h5v40h-5zM611 1160h10v40h-10zM621 1160h3v40h-3zM624 1160h3v40h-3zM630 1160h4v40h-4zM688 1160h14v40h-14zM1314 1160h9v40h-9zM1323 1160h6v40h-6zM1329 1160h15v40h-15zM1625 1160h6v40h-6zM1630 1160h6v40h-6zM1636 1160h4v40h-4zM2060 1160h28v40h-28zM2088 1160h19v40h-19zM2107 1160h13v40h-13zM2120 1160h10v40h-10zM2130 1160h8v40h-8zM2138 1160h3v40h-3zM2141 1160h13v40h-13zM2154 1160h36v40h-36zM2190 1160h9v40h-9zM2200 1160h3v40h-3zM2207 1160h7v40h-7zM2215 1160h4v40h-4zM2219 1160h5v40h-5zM2235 1160h14v40h-14zM2249 1160h8v40h-8zM2257 1160h4v40h-4zM2270 1160h275v40h-275zM2545 1160h7v40h-7zM2552 1160h6v40h-6zM2558 1160h32v40h-32zM2590 1160h10v40h-10zM2599 1160h4v40h-4zM2606 1160h4v40h-4zM2610 1160h6v40h-6zM2616 1160h23v40h-23zM2639 1160h19v40h-19zM2658 1160h10v40h-10zM2667 1160h8v40h-8zM2676 1160h6v40h-6zM2683 1160h9v40h-9zM2692 1160h26v40h-26zM2718 1160h5v40h-5zM2724 1160h17v40h-17zM2743 1160h20v40h-20zM2763 1160h10v40h-10zM2773 1160h13v40h-13zM2785 1160h11v40h-11zM2796 1160h11v40h-11zM2812 1160h27v40h-27zM2852 1160h13v40h-13zM2865 1160h4v40h-4zM2869 1160h4v40h-4zM2872 1160h4v40h-4zM1558 1160h5v40h-5zM1563 1160h5v40h-5zM1568 1160h5v40h-5zM1582 1160h5v40h-5zM1587 1160h4v40h-4zM1591 1160h4v40h-4zM1604 1160h4v40h-4zM1609 1160h5v40h-5zM1614 1160h4v40h-4zM1470 1160h5v40h-5zM1484 1160h4v40h-4zM1488 1160h5v40h-5zM1513 1160h4v40h-4zM1544 1160h6v40h-6zM784 1160h5v40h-5zM789 1160h6v40h-6zM795 1160h7v40h-7zM802 1160h5v40h-5zM807 1160h7v40h-7zM826 1160h7v40h-7zM833 1160h6v40h-6zM839 1160h6v40h-6zM845 1160h4v40h-4zM850 1160h7v40h-7zM857 1160h7v40h-7zM864 1160h4v40h-4zM868 1160h4v40h-4zM872 1160h4v40h-4zM878 1160h5v40h-5zM889 1160h4v40h-4zM916 1160h4v40h-4zM926 1160h6v40h-6zM932 1160h3v40h-3zM939 1160h6v40h-6zM945 1160h5v40h-5zM950 1160h4v40h-4zM954 1160h4v40h-4zM959 1160h7v40h-7zM966 1160h7v40h-7zM973 1160h4v40h-4zM988 1160h6v40h-6zM994 1160h5v40h-5zM999 1160h7v40h-7zM1006 1160h5v40h-5zM1011 1160h5v40h-5zM1016 1160h7v40h-7zM1023 1160h6v40h-6zM1044 1160h6v40h-6zM1054 1160h6v40h-6zM1064 1160h4v40h-4zM1069 1160h6v40h-6zM1075 1160h4v40h-4zM1086 1160h7v40h-7zM1093 1160h4v40h-4zM1098 1160h7v40h-7zM1106 1160h6v40h-6zM1112 1160h4v40h-4zM1116 1160h5v40h-5zM1121 1160h8v40h-8zM1130 1160h8v40h-8zM1138 1160h4v40h-4zM1142 1160h4v40h-4zM1146 1160h6v40h-6zM1152 1160h7v40h-7zM1159 1160h4v40h-4zM1163 1160h4v40h-4zM1167 1160h8v40h-8zM1175 1160h8v40h-8zM1189 1160h5v40h-5zM1194 1160h8v40h-8zM1202 1160h7v40h-7zM1209 1160h8v40h-8zM1222 1160h5v40h-5zM1228 1160h4v40h-4zM1233 1160h5v40h-5zM1238 1160h4v40h-4zM1248 1160h7v40h-7zM1256 1160h5v40h-5zM1261 1160h6v40h-6zM1267 1160h7v40h-7zM1275 1160h7v40h-7zM1282 1160h4v40h-4zM1286 1160h7v40h-7zM1293 1160h6v40h-6zM1300 1160h3v40h-3zM1307 1160h6v40h-6zM1344 1160h4v40h-4zM1348 1160h5v40h-5zM1354 1160h5v40h-5zM1364 1160h5v40h-5zM1406 1160h5v40h-5zM1411 1160h4v40h-4zM1421 1160h4v40h-4zM1451 1160h5v40h-5zM1456 1160h5v40h-5zM439 1200h49v40h-49zM488 1200h6v40h-6zM494 1200h3v40h-3zM497 1200h3v40h-3zM500 1200h7v40h-7zM507 1200h3v40h-3zM513 1200h33v40h-33zM546 1200h14v40h-14zM560 1200h9v40h-9zM569 1200h10v40h-10zM579 1200h13v40h-13zM592 1200h4v40h-4zM596 1200h4v40h-4zM600 1200h4v40h-4zM604 1200h5v40h-5zM611 1200h10v40h-10zM621 1200h3v40h-3zM624 1200h3v40h-3zM630 1200h4v40h-4zM1314 1200h9v40h-9zM1323 1200h6v40h-6zM1329 1200h7v40h-7zM1625 1200h6v40h-6zM1630 1200h6v40h-6zM1636 1200h4v40h-4zM2060 1200h28v40h-28zM2088 1200h19v40h-19zM2107 1200h13v40h-13zM2120 1200h10v40h-10zM2130 1200h8v40h-8zM2138 1200h3v40h-3zM2141 1200h13v40h-13zM2154 1200h36v40h-36zM2190 1200h9v40h-9zM2200 1200h3v40h-3zM2203 1200h3v40h-3zM2207 1200h7v40h-7zM2215 1200h4v40h-4zM2219 1200h5v40h-5zM2235 1200h14v40h-14zM2249 1200h8v40h-8zM2257 1200h4v40h-4zM2270 1200h275v40h-275zM2545 1200h7v40h-7zM2552 1200h6v40h-6zM2558 1200h32v40h-32zM2590 1200h10v40h-10zM2606 1200h10v40h-10zM2616 1200h23v40h-23zM2639 1200h19v40h-19zM2658 1200h10v40h-10zM2667 1200h8v40h-8zM2676 1200h6v40h-6zM2683 1200h9v40h-9zM2692 1200h26v40h-26zM2724 1200h17v40h-17zM2743 1200h20v40h-20zM2763 1200h10v40h-10zM2773 1200h13v40h-13zM2785 1200h11v40h-11zM2796 1200h11v40h-11zM2812 1200h27v40h-27zM2852 1200h8v40h-8zM2861 1200h4v40h-4zM2865 1200h4v40h-4zM2872 1200h4v40h-4zM1558 1200h5v40h-5zM1563 1200h5v40h-5zM1568 1200h5v40h-5zM1582 1200h5v40h-5zM1587 1200h4v40h-4zM1591 1200h4v40h-4zM1604 1200h4v40h-4zM1609 1200h5v40h-5zM1470 1200h5v40h-5zM1484 1200h4v40h-4zM1488 1200h5v40h-5zM1513 1200h4v40h-4zM1544 1200h6v40h-6zM784 1200h5v40h-5zM789 1200h6v40h-6zM795 1200h7v40h-7zM802 1200h5v40h-5zM807 1200h7v40h-7zM826 1200h7v40h-7zM833 1200h6v40h-6zM839 1200h6v40h-6zM845 1200h4v40h-4zM850 1200h7v40h-7zM857 1200h7v40h-7zM864 1200h4v40h-4zM868 1200h4v40h-4zM872 1200h4v40h-4zM878 1200h5v40h-5zM889 1200h4v40h-4zM916 1200h4v40h-4zM926 1200h6v40h-6zM932 1200h3v40h-3zM939 1200h6v40h-6zM945 1200h5v40h-5zM950 1200h4v40h-4zM954 1200h4v40h-4zM959 1200h7v40h-7zM966 1200h7v40h-7zM973 1200h4v40h-4zM988 1200h6v40h-6zM994 1200h5v40h-5zM999 1200h7v40h-7zM1006 1200h5v40h-5zM1011 1200h5v40h-5zM1016 1200h7v40h-7zM1023 1200h6v40h-6zM1044 1200h6v40h-6zM1054 1200h6v40h-6zM1064 1200h4v40h-4zM1069 1200h6v40h-6zM1086 1200h7v40h-7zM1093 1200h4v40h-4zM1098 1200h7v40h-7zM1106 1200h6v40h-6zM1112 1200h4v40h-4zM1116 1200h5v40h-5zM1121 1200h8v40h-8zM1130 1200h8v40h-8zM1138 1200h4v40h-4zM1142 1200h4v40h-4zM1146 1200h6v40h-6zM1152 1200h7v40h-7zM1159 1200h4v40h-4zM1163 1200h4v40h-4zM1167 1200h8v40h-8zM1175 1200h8v40h-8zM1189 1200h5v40h-5zM1194 1200h8v40h-8zM1202 1200h7v40h-7zM1209 1200h8v40h-8zM1222 1200h5v40h-5zM1228 1200h4v40h-4zM1233 1200h5v40h-5zM1238 1200h4v40h-4zM1248 1200h7v40h-7zM1256 1200h5v40h-5zM1261 1200h6v40h-6zM1267 1200h7v40h-7zM1275 1200h7v40h-7zM1282 1200h4v40h-4zM1286 1200h7v40h-7zM1293 1200h6v40h-6zM1300 1200h3v40h-3zM1307 1200h6v40h-6zM1344 1200h4v40h-4zM1348 1200h5v40h-5zM1354 1200h5v40h-5zM1364 1200h5v40h-5zM1406 1200h5v40h-5zM1411 1200h4v40h-4zM1421 1200h4v40h-4zM1451 1200h5v40h-5zM1456 1200h5v40h-5zM439 1240h49v40h-49zM488 1240h6v40h-6zM494 1240h3v40h-3zM497 1240h3v40h-3zM500 1240h7v40h-7zM510 1240h3v40h-3zM513 1240h33v40h-33zM546 1240h6v40h-6zM552 1240h4v40h-4zM556 1240h4v40h-4zM560 1240h6v40h-6zM566 1240h3v40h-3zM569 1240h10v40h-10zM579 1240h13v40h-13zM592 1240h4v40h-4zM596 1240h4v40h-4zM600 1240h4v40h-4zM604 1240h5v40h-5zM611 1240h10v40h-10zM621 1240h3v40h-3zM624 1240h3v40h-3zM631 1240h3v40h-3zM1314 1240h9v40h-9zM1323 1240h6v40h-6zM1329 1240h7v40h-7zM1625 1240h6v40h-6zM1630 1240h6v40h-6zM1636 1240h4v40h-4zM2060 1240h28v40h-28zM2088 1240h19v40h-19zM2107 1240h13v40h-13zM2120 1240h10v40h-10zM2130 1240h8v40h-8zM2138 1240h3v40h-3zM2141 1240h13v40h-13zM2154 1240h32v40h-32zM2186 1240h4v40h-4zM2190 1240h9v40h-9zM2207 1240h7v40h-7zM2215 1240h4v40h-4zM2219 1240h5v40h-5zM2235 1240h14v40h-14zM2249 1240h8v40h-8zM2257 1240h4v40h-4zM2270 1240h270v40h-270zM2545 1240h7v40h-7zM2552 1240h6v40h-6zM2558 1240h32v40h-32zM2590 1240h10v40h-10zM2599 1240h4v40h-4zM2616 1240h20v40h-20zM2639 1240h12v40h-12zM2651 1240h7v40h-7zM2658 1240h10v40h-10zM2667 1240h8v40h-8zM2676 1240h6v40h-6zM2683 1240h9v40h-9zM2692 1240h26v40h-26zM2724 1240h14v40h-14zM2743 1240h16v40h-16zM2770 1240h4v40h-4zM2774 1240h4v40h-4zM2778 1240h4v40h-4zM2783 1240h4v40h-4zM2788 1240h4v40h-4zM2792 1240h4v40h-4zM2812 1240h17v40h-17zM2830 1240h7v40h-7zM2852 1240h8v40h-8zM2861 1240h4v40h-4zM2865 1240h4v40h-4zM2872 1240h4v40h-4zM1558 1240h5v40h-5zM1563 1240h5v40h-5zM1568 1240h5v40h-5zM1582 1240h5v40h-5zM1587 1240h4v40h-4zM1591 1240h4v40h-4zM1604 1240h4v40h-4zM1609 1240h5v40h-5zM1470 1240h5v40h-5zM1484 1240h4v40h-4zM1488 1240h5v40h-5zM1513 1240h4v40h-4zM1544 1240h6v40h-6zM784 1240h5v40h-5zM789 1240h6v40h-6zM802 1240h5v40h-5zM807 1240h7v40h-7zM826 1240h7v40h-7zM833 1240h6v40h-6zM839 1240h6v40h-6zM845 1240h4v40h-4zM850 1240h7v40h-7zM857 1240h7v40h-7zM864 1240h4v40h-4zM868 1240h4v40h-4zM872 1240h4v40h-4zM878 1240h5v40h-5zM889 1240h4v40h-4zM916 1240h4v40h-4zM926 1240h6v40h-6zM939 1240h6v40h-6zM945 1240h5v40h-5zM950 1240h4v40h-4zM954 1240h4v40h-4zM959 1240h7v40h-7zM966 1240h7v40h-7zM973 1240h4v40h-4zM988 1240h6v40h-6zM994 1240h5v40h-5zM999 1240h7v40h-7zM1006 1240h5v40h-5zM1011 1240h5v40h-5zM1016 1240h7v40h-7zM1044 1240h6v40h-6zM1054 1240h6v40h-6zM1064 1240h4v40h-4zM1069 1240h6v40h-6zM1086 1240h7v40h-7zM1093 1240h4v40h-4zM1098 1240h7v40h-7zM1106 1240h6v40h-6zM1112 1240h4v40h-4zM1116 1240h5v40h-5zM1121 1240h8v40h-8zM1130 1240h8v40h-8zM1138 1240h4v40h-4zM1142 1240h4v40h-4zM1146 1240h6v40h-6zM1152 1240h7v40h-7zM1159 1240h4v40h-4zM1163 1240h4v40h-4zM1167 1240h8v40h-8zM1175 1240h8v40h-8zM1194 1240h8v40h-8zM1202 1240h7v40h-7zM1209 1240h8v40h-8zM1233 1240h5v40h-5zM1238 1240h4v40h-4zM1256 1240h5v40h-5zM1261 1240h6v40h-6zM1267 1240h7v40h-7zM1293 1240h6v40h-6zM1300 1240h3v40h-3zM1307 1240h6v40h-6zM1344 1240h4v40h-4zM1348 1240h5v40h-5zM1364 1240h5v40h-5zM1406 1240h5v40h-5zM1411 1240h4v40h-4zM1451 1240h5v40h-5zM1456 1240h5v40h-5zM439 1280h42v40h-42zM481 1280h7v40h-7zM488 1280h3v40h-3zM494 1280h3v40h-3zM497 1280h3v40h-3zM500 1280h4v40h-4zM504 1280h3v40h-3zM510 1280h3v40h-3zM513 1280h33v40h-33zM546 1280h6v40h-6zM552 1280h4v40h-4zM560 1280h6v40h-6zM566 1280h3v40h-3zM569 1280h10v40h-10zM579 1280h13v40h-13zM592 1280h4v40h-4zM596 1280h4v40h-4zM600 1280h4v40h-4zM604 1280h5v40h-5zM611 1280h10v40h-10zM621 1280h3v40h-3zM624 1280h3v40h-3zM631 1280h3v40h-3zM1314 1280h9v40h-9zM1323 1280h6v40h-6zM1329 1280h7v40h-7zM1625 1280h6v40h-6zM1630 1280h6v40h-6zM1636 1280h4v40h-4zM2060 1280h28v40h-28zM2088 1280h19v40h-19zM2107 1280h5v40h-5zM2113 1280h3v40h-3zM2116 1280h4v40h-4zM2120 1280h10v40h-10zM2130 1280h8v40h-8zM2141 1280h13v40h-13zM2154 1280h32v40h-32zM2186 1280h4v40h-4zM2190 1280h9v40h-9zM2207 1280h7v40h-7zM2219 1280h5v40h-5zM2235 1280h7v40h-7zM2242 1280h7v40h-7zM2249 1280h8v40h-8zM2257 1280h4v40h-4zM2270 1280h270v40h-270zM2545 1280h7v40h-7zM2552 1280h6v40h-6zM2558 1280h32v40h-32zM2590 1280h10v40h-10zM2599 1280h4v40h-4zM2616 1280h20v40h-20zM2639 1280h12v40h-12zM2651 1280h7v40h-7zM2658 1280h10v40h-10zM2667 1280h8v40h-8zM2676 1280h6v40h-6zM2683 1280h9v40h-9zM2692 1280h26v40h-26zM2724 1280h14v40h-14zM2743 1280h16v40h-16zM2770 1280h4v40h-4zM2774 1280h4v40h-4zM2778 1280h4v40h-4zM2783 1280h4v40h-4zM2788 1280h4v40h-4zM2792 1280h4v40h-4zM2812 1280h17v40h-17zM2830 1280h7v40h-7zM2852 1280h8v40h-8zM2861 1280h4v40h-4zM2865 1280h4v40h-4zM2872 1280h4v40h-4zM1558 1280h5v40h-5zM1563 1280h5v40h-5zM1568 1280h5v40h-5zM1582 1280h5v40h-5zM1587 1280h4v40h-4zM1604 1280h4v40h-4zM1609 1280h5v40h-5zM1470 1280h5v40h-5zM1484 1280h4v40h-4zM1488 1280h5v40h-5zM1513 1280h4v40h-4zM1544 1280h6v40h-6zM784 1280h5v40h-5zM789 1280h6v40h-6zM807 1280h7v40h-7zM833 1280h6v40h-6zM839 1280h6v40h-6zM845 1280h4v40h-4zM850 1280h7v40h-7zM857 1280h7v40h-7zM864 1280h4v40h-4zM872 1280h4v40h-4zM939 1280h6v40h-6zM950 1280h4v40h-4zM954 1280h4v40h-4zM959 1280h7v40h-7zM966 1280h7v40h-7zM1006 1280h5v40h-5zM1016 1280h7v40h-7zM1044 1280h6v40h-6zM1064 1280h4v40h-4zM1069 1280h6v40h-6zM1093 1280h4v40h-4zM1098 1280h7v40h-7zM1106 1280h6v40h-6zM1112 1280h4v40h-4zM1116 1280h5v40h-5zM1121 1280h8v40h-8zM1130 1280h8v40h-8zM1142 1280h4v40h-4zM1146 1280h6v40h-6zM1152 1280h7v40h-7zM1159 1280h4v40h-4zM1163 1280h4v40h-4zM1167 1280h8v40h-8zM1175 1280h8v40h-8zM1194 1280h8v40h-8zM1202 1280h7v40h-7zM1209 1280h8v40h-8zM1233 1280h5v40h-5zM1238 1280h4v40h-4zM1256 1280h5v40h-5zM1261 1280h6v40h-6zM1267 1280h7v40h-7zM1293 1280h6v40h-6zM1300 1280h3v40h-3zM1307 1280h6v40h-6zM1348 1280h5v40h-5zM1364 1280h5v40h-5zM1406 1280h5v40h-5zM1411 1280h4v40h-4zM1451 1280h5v40h-5zM1456 1280h5v40h-5zM439 1320h26v40h-26zM465 1320h13v40h-13zM478 1320h3v40h-3zM481 1320h7v40h-7zM488 1320h3v40h-3zM494 1320h3v40h-3zM497 1320h3v40h-3zM500 1320h4v40h-4zM504 1320h3v40h-3zM510 1320h3v40h-3zM513 1320h33v40h-33zM546 1320h6v40h-6zM552 1320h4v40h-4zM560 1320h6v40h-6zM566 1320h3v40h-3zM569 1320h10v40h-10zM579 1320h13v40h-13zM592 1320h4v40h-4zM596 1320h4v40h-4zM600 1320h4v40h-4zM604 1320h5v40h-5zM611 1320h10v40h-10zM621 1320h3v40h-3zM624 1320h3v40h-3zM1314 1320h9v40h-9zM1323 1320h6v40h-6zM1625 1320h6v40h-6zM1630 1320h6v40h-6zM1636 1320h4v40h-4zM2060 1320h28v40h-28zM2088 1320h19v40h-19zM2107 1320h5v40h-5zM2113 1320h3v40h-3zM2116 1320h4v40h-4zM2120 1320h10v40h-10zM2130 1320h8v40h-8zM2141 1320h13v40h-13zM2154 1320h32v40h-32zM2186 1320h4v40h-4zM2190 1320h9v40h-9zM2207 1320h7v40h-7zM2219 1320h5v40h-5zM2235 1320h7v40h-7zM2242 1320h7v40h-7zM2249 1320h8v40h-8zM2257 1320h4v40h-4zM2270 1320h270v40h-270zM2545 1320h7v40h-7zM2552 1320h6v40h-6zM2558 1320h32v40h-32zM2590 1320h10v40h-10zM2599 1320h4v40h-4zM2616 1320h20v40h-20zM2639 1320h12v40h-12zM2651 1320h7v40h-7zM2658 1320h10v40h-10zM2667 1320h8v40h-8zM2676 1320h6v40h-6zM2683 1320h9v40h-9zM2692 1320h26v40h-26zM2724 1320h14v40h-14zM2743 1320h16v40h-16zM2770 1320h4v40h-4zM2774 1320h4v40h-4zM2778 1320h4v40h-4zM2783 1320h4v40h-4zM2788 1320h4v40h-4zM2792 1320h4v40h-4zM2812 1320h17v40h-17zM2830 1320h7v40h-7zM2852 1320h8v40h-8zM2861 1320h4v40h-4zM2865 1320h4v40h-4zM2872 1320h4v40h-4zM1558 1320h5v40h-5zM1563 1320h5v40h-5zM1568 1320h5v40h-5zM1582 1320h5v40h-5zM1587 1320h4v40h-4zM1604 1320h4v40h-4zM1609 1320h5v40h-5zM1470 1320h5v40h-5zM1488 1320h5v40h-5zM1513 1320h4v40h-4zM1544 1320h6v40h-6zM807 1320h7v40h-7zM839 1320h6v40h-6zM845 1320h4v40h-4zM850 1320h7v40h-7zM872 1320h4v40h-4zM939 1320h6v40h-6zM950 1320h4v40h-4zM954 1320h4v40h-4zM959 1320h7v40h-7zM966 1320h7v40h-7zM1016 1320h7v40h-7zM1044 1320h6v40h-6zM1069 1320h6v40h-6zM1093 1320h4v40h-4zM1098 1320h7v40h-7zM1106 1320h6v40h-6zM1112 1320h4v40h-4zM1116 1320h5v40h-5zM1121 1320h8v40h-8zM1130 1320h8v40h-8zM1142 1320h4v40h-4zM1146 1320h6v40h-6zM1152 1320h7v40h-7zM1159 1320h4v40h-4zM1163 1320h4v40h-4zM1167 1320h8v40h-8zM1175 1320h8v40h-8zM1194 1320h8v40h-8zM1202 1320h7v40h-7zM1209 1320h8v40h-8zM1233 1320h5v40h-5zM1238 1320h4v40h-4zM1256 1320h5v40h-5zM1261 1320h6v40h-6zM1267 1320h7v40h-7zM1293 1320h6v40h-6zM1300 1320h3v40h-3zM1307 1320h6v40h-6zM1348 1320h5v40h-5zM1364 1320h5v40h-5zM1406 1320h5v40h-5zM1411 1320h4v40h-4zM1451 1320h5v40h-5zM1456 1320h5v40h-5zM439 1360h13v40h-13zM452 1360h10v40h-10zM462 1360h3v40h-3zM465 1360h6v40h-6zM471 1360h4v40h-4zM475 1360h3v40h-3zM478 1360h3v40h-3zM481 1360h7v40h-7zM488 1360h3v40h-3zM494 1360h3v40h-3zM497 1360h3v40h-3zM500 1360h4v40h-4zM504 1360h3v40h-3zM510 1360h3v40h-3zM513 1360h33v40h-33zM546 1360h6v40h-6zM552 1360h4v40h-4zM560 1360h6v40h-6zM566 1360h3v40h-3zM569 1360h10v40h-10zM579 1360h13v40h-13zM592 1360h4v40h-4zM596 1360h4v40h-4zM600 1360h4v40h-4zM604 1360h5v40h-5zM611 1360h10v40h-10zM624 1360h3v40h-3zM1314 1360h9v40h-9zM1323 1360h6v40h-6zM1625 1360h6v40h-6zM1630 1360h6v40h-6zM1636 1360h4v40h-4zM2060 1360h28v40h-28zM2088 1360h19v40h-19zM2107 1360h5v40h-5zM2113 1360h3v40h-3zM2116 1360h4v40h-4zM2120 1360h10v40h-10zM2130 1360h8v40h-8zM2141 1360h13v40h-13zM2154 1360h32v40h-32zM2186 1360h4v40h-4zM2190 1360h9v40h-9zM2207 1360h7v40h-7zM2219 1360h5v40h-5zM2235 1360h7v40h-7zM2242 1360h7v40h-7zM2249 1360h8v40h-8zM2257 1360h4v40h-4zM2270 1360h270v40h-270zM2545 1360h7v40h-7zM2552 1360h6v40h-6zM2558 1360h32v40h-32zM2590 1360h10v40h-10zM2599 1360h4v40h-4zM2616 1360h20v40h-20zM2639 1360h12v40h-12zM2651 1360h7v40h-7zM2658 1360h10v40h-10zM2667 1360h8v40h-8zM2676 1360h6v40h-6zM2683 1360h9v40h-9zM2692 1360h26v40h-26zM2724 1360h14v40h-14zM2743 1360h16v40h-16zM2770 1360h4v40h-4zM2774 1360h4v40h-4zM2778 1360h4v40h-4zM2783 1360h4v40h-4zM2788 1360h4v40h-4zM2792 1360h4v40h-4zM2812 1360h17v40h-17zM2830 1360h7v40h-7zM2852 1360h8v40h-8zM2861 1360h4v40h-4zM2865 1360h4v40h-4zM2872 1360h4v40h-4zM1558 1360h5v40h-5zM1563 1360h5v40h-5zM1582 1360h5v40h-5zM1587 1360h4v40h-4zM1604 1360h4v40h-4zM1609 1360h5v40h-5zM1470 1360h5v40h-5zM1488 1360h5v40h-5zM1513 1360h4v40h-4zM1544 1360h6v40h-6zM807 1360h7v40h-7zM839 1360h6v40h-6zM845 1360h4v40h-4zM850 1360h7v40h-7zM872 1360h4v40h-4zM939 1360h6v40h-6zM950 1360h4v40h-4zM954 1360h4v40h-4zM959 1360h7v40h-7zM966 1360h7v40h-7zM1016 1360h7v40h-7zM1044 1360h6v40h-6zM1069 1360h6v40h-6zM1093 1360h4v40h-4zM1098 1360h7v40h-7zM1106 1360h6v40h-6zM1112 1360h4v40h-4zM1116 1360h5v40h-5zM1121 1360h8v40h-8zM1130 1360h8v40h-8zM1146 1360h6v40h-6zM1152 1360h7v40h-7zM1159 1360h4v40h-4zM1163 1360h4v40h-4zM1167 1360h8v40h-8zM1175 1360h8v40h-8zM1194 1360h8v40h-8zM1202 1360h7v40h-7zM1209 1360h8v40h-8zM1233 1360h5v40h-5zM1238 1360h4v40h-4zM1256 1360h5v40h-5zM1261 1360h6v40h-6zM1267 1360h7v40h-7zM1293 1360h6v40h-6zM1300 1360h3v40h-3zM1307 1360h6v40h-6zM1348 1360h5v40h-5zM1364 1360h5v40h-5zM1406 1360h5v40h-5zM1411 1360h4v40h-4zM1451 1360h5v40h-5zM1456 1360h5v40h-5zM439 1400h13v40h-13zM452 1400h10v40h-10zM462 1400h3v40h-3zM465 1400h6v40h-6zM471 1400h4v40h-4zM475 1400h3v40h-3zM478 1400h3v40h-3zM481 1400h7v40h-7zM488 1400h3v40h-3zM494 1400h3v40h-3zM497 1400h3v40h-3zM500 1400h4v40h-4zM504 1400h3v40h-3zM510 1400h3v40h-3zM513 1400h33v40h-33zM546 1400h6v40h-6zM552 1400h4v40h-4zM560 1400h6v40h-6zM566 1400h3v40h-3zM569 1400h7v40h-7zM576 1400h3v40h-3zM579 1400h13v40h-13zM592 1400h4v40h-4zM596 1400h4v40h-4zM600 1400h4v40h-4zM604 1400h5v40h-5zM611 1400h10v40h-10zM624 1400h3v40h-3zM1314 1400h9v40h-9zM1323 1400h6v40h-6zM1630 1400h6v40h-6zM1636 1400h4v40h-4zM2060 1400h28v40h-28zM2088 1400h19v40h-19zM2107 1400h5v40h-5zM2113 1400h3v40h-3zM2116 1400h4v40h-4zM2120 1400h10v40h-10zM2130 1400h8v40h-8zM2141 1400h13v40h-13zM2154 1400h32v40h-32zM2186 1400h4v40h-4zM2194 1400h3v40h-3zM2207 1400h3v40h-3zM2235 1400h7v40h-7zM2242 1400h7v40h-7zM2249 1400h8v40h-8zM2257 1400h4v40h-4zM2270 1400h268v40h-268zM2545 1400h7v40h-7zM2558 1400h32v40h-32zM2590 1400h10v40h-10zM2616 1400h20v40h-20zM2639 1400h12v40h-12zM2658 1400h6v40h-6zM2683 1400h9v40h-9zM2692 1400h26v40h-26zM2724 1400h14v40h-14zM2743 1400h16v40h-16zM2770 1400h4v40h-4zM2774 1400h4v40h-4zM2778 1400h4v40h-4zM2783 1400h4v40h-4zM2788 1400h4v40h-4zM2812 1400h13v40h-13zM2830 1400h7v40h-7zM2852 1400h8v40h-8zM2865 1400h4v40h-4zM2872 1400h4v40h-4zM1558 1400h5v40h-5zM1563 1400h5v40h-5zM1582 1400h5v40h-5zM1587 1400h4v40h-4zM1604 1400h4v40h-4zM1609 1400h5v40h-5zM1470 1400h5v40h-5zM1488 1400h5v40h-5zM1544 1400h6v40h-6zM807 1400h7v40h-7zM839 1400h6v40h-6zM845 1400h4v40h-4zM850 1400h7v40h-7zM872 1400h4v40h-4zM939 1400h6v40h-6zM950 1400h4v40h-4zM954 1400h4v40h-4zM959 1400h7v40h-7zM966 1400h7v40h-7zM1016 1400h7v40h-7zM1044 1400h6v40h-6zM1069 1400h6v40h-6zM1093 1400h4v40h-4zM1098 1400h7v40h-7zM1106 1400h6v40h-6zM1116 1400h5v40h-5zM1121 1400h8v40h-8zM1130 1400h8v40h-8zM1146 1400h6v40h-6zM1152 1400h7v40h-7zM1159 1400h4v40h-4zM1163 1400h4v40h-4zM1167 1400h8v40h-8zM1175 1400h8v40h-8zM1194 1400h8v40h-8zM1202 1400h7v40h-7zM1209 1400h8v40h-8zM1233 1400h5v40h-5zM1238 1400h4v40h-4zM1256 1400h5v40h-5zM1261 1400h6v40h-6zM1267 1400h7v40h-7zM1293 1400h6v40h-6zM1300 1400h3v40h-3zM1307 1400h6v40h-6zM1348 1400h5v40h-5zM1364 1400h5v40h-5zM1406 1400h5v40h-5zM1411 1400h4v40h-4zM1451 1400h5v40h-5zM1456 1400h5v40h-5zM439 1440h6v40h-6zM445 1440h6v40h-6zM452 1440h6v40h-6zM462 1440h3v40h-3zM465 1440h6v40h-6zM471 1440h4v40h-4zM475 1440h3v40h-3zM481 1440h7v40h-7zM488 1440h3v40h-3zM494 1440h3v40h-3zM500 1440h4v40h-4zM510 1440h3v40h-3zM513 1440h33v40h-33zM546 1440h6v40h-6zM552 1440h4v40h-4zM560 1440h6v40h-6zM566 1440h3v40h-3zM569 1440h4v40h-4zM573 1440h6v40h-6zM579 1440h13v40h-13zM592 1440h4v40h-4zM596 1440h4v40h-4zM600 1440h4v40h-4zM611 1440h10v40h-10zM624 1440h3v40h-3zM1314 1440h9v40h-9zM1323 1440h6v40h-6zM1636 1440h4v40h-4zM2060 1440h24v40h-24zM2084 1440h4v40h-4zM2088 1440h7v40h-7zM2095 1440h4v40h-4zM2099 1440h4v40h-4zM2107 1440h7v40h-7zM2113 1440h3v40h-3zM2120 1440h10v40h-10zM2130 1440h8v40h-8zM2141 1440h5v40h-5zM2146 1440h8v40h-8zM2154 1440h32v40h-32zM2186 1440h4v40h-4zM2194 1440h3v40h-3zM2235 1440h7v40h-7zM2242 1440h7v40h-7zM2249 1440h8v40h-8zM2257 1440h4v40h-4zM2270 1440h252v40h-252zM2524 1440h4v40h-4zM2530 1440h4v40h-4zM2545 1440h7v40h-7zM2558 1440h32v40h-32zM2592 1440h4v40h-4zM2598 1440h4v40h-4zM2616 1440h20v40h-20zM2639 1440h4v40h-4zM2644 1440h4v40h-4zM2650 1440h4v40h-4zM2658 1440h4v40h-4zM2692 1440h20v40h-20zM2714 1440h4v40h-4zM2724 1440h6v40h-6zM2731 1440h4v40h-4zM2743 1440h7v40h-7zM2752 1440h4v40h-4zM2770 1440h4v40h-4zM2778 1440h4v40h-4zM2788 1440h4v40h-4zM2812 1440h6v40h-6zM2820 1440h4v40h-4zM2852 1440h8v40h-8zM2865 1440h4v40h-4zM2872 1440h4v40h-4zM1558 1440h5v40h-5zM1563 1440h5v40h-5zM1582 1440h5v40h-5zM1587 1440h4v40h-4zM1604 1440h4v40h-4zM1609 1440h5v40h-5zM1470 1440h5v40h-5zM1488 1440h5v40h-5zM1544 1440h6v40h-6zM2604 1440h6v40h-6zM2611 1440h4v40h-4zM2667 1440h5v40h-5zM2672 1440h6v40h-6zM2678 1440h4v40h-4zM2682 1440h4v40h-4zM2759 1440h5v40h-5zM2764 1440h4v40h-4zM2783 1440h5v40h-5zM2792 1440h4v40h-4zM2796 1440h5v40h-5zM2801 1440h5v40h-5zM2806 1440h6v40h-6zM2828 1440h4v40h-4zM2832 1440h4v40h-4zM2837 1440h5v40h-5zM2842 1440h6v40h-6zM807 1440h7v40h-7zM839 1440h6v40h-6zM845 1440h4v40h-4zM850 1440h7v40h-7zM872 1440h4v40h-4zM939 1440h6v40h-6zM950 1440h4v40h-4zM954 1440h4v40h-4zM959 1440h7v40h-7zM966 1440h7v40h-7zM1016 1440h7v40h-7zM1069 1440h6v40h-6zM1093 1440h4v40h-4zM1098 1440h7v40h-7zM1106 1440h6v40h-6zM1116 1440h5v40h-5zM1121 1440h8v40h-8zM1130 1440h8v40h-8zM1146 1440h6v40h-6zM1152 1440h7v40h-7zM1159 1440h4v40h-4zM1163 1440h4v40h-4zM1167 1440h8v40h-8zM1175 1440h8v40h-8zM1194 1440h8v40h-8zM1202 1440h7v40h-7zM1209 1440h8v40h-8zM1233 1440h5v40h-5zM1238 1440h4v40h-4zM1256 1440h5v40h-5zM1261 1440h6v40h-6zM1267 1440h7v40h-7zM1293 1440h6v40h-6zM1300 1440h3v40h-3zM1307 1440h6v40h-6zM1348 1440h5v40h-5zM1364 1440h5v40h-5zM1406 1440h5v40h-5zM1411 1440h4v40h-4zM1451 1440h5v40h-5zM1456 1440h5v40h-5z"/><g shape-rendering="crispEdges"><path fill="#ebccd0" d="M441 320h1198v38h-1198zM1641 320h629v38h-629zM2272 320h593v38h-593zM2867 320h2v38h-2zM2871 320h2v38h-2zM2874 320h2v38h-2zM636 360h148v38h-148zM786 360h86v38h-86zM995 360h49v38h-49zM1046 360h40v38h-40zM1088 360h35v38h-35zM1125 360h33v38h-33zM1160 360h29v38h-29zM1191 360h28v38h-28zM1221 360h27v38h-27zM1250 360h26v38h-26zM1278 360h25v38h-25zM1431 360h10v38h-10zM1454 360h6v38h-6zM1462 360h5v38h-5zM1475 360h5v38h-5zM1482 360h4v38h-4zM1488 360h5v38h-5zM1525 360h3v38h-3zM1630 360h9v38h-9zM1641 360h419v38h-419zM2867 360h2v38h-2zM2874 360h2v38h-2zM1557 360h2v38h-2zM1565 360h2v38h-2zM1574 360h3v38h-3zM1596 360h2v38h-2zM1604 360h2v38h-2zM1621 360h2v38h-2zM441 400h193v38h-193zM636 400h148v38h-148zM786 400h86v38h-86zM995 400h49v38h-49zM1046 400h40v38h-40zM1088 400h35v38h-35zM1125 400h33v38h-33zM1160 400h29v38h-29zM1191 400h28v38h-28zM1221 400h27v38h-27zM1250 400h26v38h-26zM1278 400h25v38h-25zM1305 400h24v38h-24zM1354 400h16v38h-16zM1374 400h8v38h-8zM1384 400h3v38h-3zM1389 400h13v38h-13zM1404 400h12v38h-12zM1418 400h11v38h-11zM1431 400h10v38h-10zM1443 400h9v38h-9zM1454 400h6v38h-6zM1462 400h5v38h-5zM1475 400h5v38h-5zM1482 400h4v38h-4zM1488 400h5v38h-5zM1495 400h1v38h-1zM1497 400h2v38h-2zM1501 400h5v38h-5zM1508 400h1v38h-1zM1510 400h2v38h-2zM1520 400h3v38h-3zM1525 400h3v38h-3zM1545 400h2v38h-2zM1549 400h1v38h-1zM1624 400h16v38h-16zM2062 400h199v38h-199zM2263 400h7v38h-7zM2272 400h593v38h-593zM2867 400h2v38h-2zM2871 400h2v38h-2zM2874 400h2v38h-2zM1560 400h3v38h-3zM1565 400h3v38h-3zM1570 400h3v38h-3zM1575 400h3v38h-3zM1580 400h2v38h-2zM1584 400h3v38h-3zM1589 400h2v38h-2zM1593 400h2v38h-2zM1597 400h3v38h-3zM1606 400h2v38h-2zM1611 400h3v38h-3zM1616 400h2v38h-2zM441 440h72v38h-72zM515 440h64v38h-64zM626 440h1v38h-1zM632 440h2v38h-2zM636 440h148v38h-148zM786 440h86v38h-86zM874 440h59v38h-59zM935 440h58v38h-58zM995 440h49v38h-49zM1046 440h40v38h-40zM1088 440h35v38h-35zM1125 440h33v38h-33zM1160 440h25v38h-25zM1187 440h2v38h-2zM1191 440h28v38h-28zM1221 440h27v38h-27zM1250 440h26v38h-26zM1278 440h25v38h-25zM1305 440h24v38h-24zM1354 440h16v38h-16zM1374 440h8v38h-8zM1384 440h3v38h-3zM1389 440h13v38h-13zM1404 440h12v38h-12zM1418 440h11v38h-11zM1431 440h10v38h-10zM1443 440h9v38h-9zM1454 440h6v38h-6zM1462 440h5v38h-5zM1469 440h1v38h-1zM1475 440h5v38h-5zM1482 440h4v38h-4zM1488 440h5v38h-5zM1495 440h1v38h-1zM1497 440h2v38h-2zM1501 440h5v38h-5zM1508 440h1v38h-1zM1510 440h2v38h-2zM1514 440h4v38h-4zM1520 440h3v38h-3zM1525 440h3v38h-3zM1535 440h3v38h-3zM1540 440h3v38h-3zM1545 440h2v38h-2zM1549 440h1v38h-1zM1624 440h16v38h-16zM2062 440h173v38h-173zM2237 440h24v38h-24zM2263 440h7v38h-7zM2272 440h593v38h-593zM2867 440h2v38h-2zM2871 440h2v38h-2zM2874 440h2v38h-2zM1560 440h3v38h-3zM1565 440h3v38h-3zM1570 440h3v38h-3zM1575 440h3v38h-3zM1580 440h2v38h-2zM1584 440h3v38h-3zM1589 440h2v38h-2zM1593 440h2v38h-2zM1606 440h2v38h-2zM1611 440h3v38h-3zM1616 440h2v38h-2zM441 480h72v38h-72zM515 480h64v38h-64zM581 480h30v38h-30zM613 480h11v38h-11zM626 480h1v38h-1zM632 480h2v38h-2zM636 480h148v38h-148zM874 480h59v38h-59zM935 480h58v38h-58zM1160 480h25v38h-25zM1187 480h2v38h-2zM1305 480h24v38h-24zM1331 480h21v38h-21zM1354 480h16v38h-16zM1374 480h8v38h-8zM1384 480h3v38h-3zM1389 480h13v38h-13zM1404 480h12v38h-12zM1418 480h11v38h-11zM1431 480h10v38h-10zM1443 480h9v38h-9zM1454 480h6v38h-6zM1462 480h5v38h-5zM1469 480h1v38h-1zM1472 480h1v38h-1zM1475 480h2v38h-2zM1478 480h2v38h-2zM1482 480h4v38h-4zM1488 480h5v38h-5zM1495 480h1v38h-1zM1497 480h2v38h-2zM1501 480h5v38h-5zM1508 480h1v38h-1zM1510 480h2v38h-2zM1514 480h4v38h-4zM1520 480h3v38h-3zM1525 480h3v38h-3zM1530 480h3v38h-3zM1535 480h3v38h-3zM1540 480h3v38h-3zM1545 480h2v38h-2zM1549 480h1v38h-1zM1624 480h16v38h-16zM2062 480h170v38h-170zM2233 480h2v38h-2zM2237 480h24v38h-24zM2263 480h7v38h-7zM2272 480h593v38h-593zM2867 480h2v38h-2zM2874 480h2v38h-2zM1560 480h3v38h-3zM1565 480h3v38h-3zM1580 480h2v38h-2zM1589 480h2v38h-2zM1593 480h2v38h-2zM1606 480h2v38h-2zM1611 480h3v38h-3zM1616 480h2v38h-2zM441 520h72v38h-72zM515 520h64v38h-64zM581 520h30v38h-30zM613 520h11v38h-11zM626 520h1v38h-1zM632 520h2v38h-2zM636 520h145v38h-145zM869 520h3v38h-3zM874 520h59v38h-59zM935 520h58v38h-58zM1157 520h1v38h-1zM1160 520h25v38h-25zM1218 520h1v38h-1zM1305 520h24v38h-24zM1354 520h16v38h-16zM1374 520h8v38h-8zM1384 520h3v38h-3zM1389 520h13v38h-13zM1404 520h12v38h-12zM1418 520h11v38h-11zM1431 520h10v38h-10zM1443 520h9v38h-9zM1454 520h6v38h-6zM1462 520h5v38h-5zM1469 520h1v38h-1zM1472 520h1v38h-1zM1475 520h2v38h-2zM1478 520h2v38h-2zM1482 520h4v38h-4zM1488 520h5v38h-5zM1495 520h1v38h-1zM1497 520h2v38h-2zM1501 520h5v38h-5zM1508 520h1v38h-1zM1510 520h2v38h-2zM1514 520h4v38h-4zM1520 520h3v38h-3zM1525 520h3v38h-3zM1535 520h3v38h-3zM1540 520h3v38h-3zM1545 520h2v38h-2zM1549 520h1v38h-1zM1624 520h16v38h-16zM2062 520h170v38h-170zM2233 520h2v38h-2zM2237 520h24v38h-24zM2263 520h7v38h-7zM2272 520h593v38h-593zM2867 520h2v38h-2zM2871 520h2v38h-2zM2874 520h2v38h-2zM1560 520h3v38h-3zM1565 520h3v38h-3zM1570 520h3v38h-3zM1575 520h3v38h-3zM1580 520h2v38h-2zM1584 520h3v38h-3zM1589 520h2v38h-2zM1593 520h2v38h-2zM1606 520h2v38h-2zM1611 520h3v38h-3zM1616 520h2v38h-2zM515 560h64v38h-64zM581 560h30v38h-30zM613 560h11v38h-11zM626 560h1v38h-1zM632 560h2v38h-2zM636 560h145v38h-145zM786 560h81v38h-81zM869 560h3v38h-3zM874 560h59v38h-59zM935 560h58v38h-58zM995 560h36v38h-36zM1046 560h34v38h-34zM1088 560h35v38h-35zM1125 560h30v38h-30zM1157 560h1v38h-1zM1160 560h25v38h-25zM1191 560h25v38h-25zM1218 560h1v38h-1zM1221 560h21v38h-21zM1250 560h26v38h-26zM1278 560h19v38h-19zM1305 560h24v38h-24zM1331 560h21v38h-21zM1354 560h16v38h-16zM1374 560h3v38h-3zM1379 560h3v38h-3zM1384 560h3v38h-3zM1389 560h13v38h-13zM1404 560h12v38h-12zM1418 560h11v38h-11zM1431 560h10v38h-10zM1443 560h9v38h-9zM1454 560h6v38h-6zM1462 560h5v38h-5zM1469 560h1v38h-1zM1472 560h1v38h-1zM1475 560h2v38h-2zM1478 560h2v38h-2zM1482 560h4v38h-4zM1488 560h5v38h-5zM1495 560h1v38h-1zM1497 560h2v38h-2zM1501 560h5v38h-5zM1508 560h1v38h-1zM1510 560h2v38h-2zM1514 560h4v38h-4zM1520 560h3v38h-3zM1525 560h3v38h-3zM1530 560h3v38h-3zM1535 560h3v38h-3zM1540 560h3v38h-3zM1545 560h2v38h-2zM1549 560h1v38h-1zM1624 560h16v38h-16zM2062 560h170v38h-170zM2233 560h2v38h-2zM2237 560h24v38h-24zM2263 560h7v38h-7zM2272 560h593v38h-593zM2867 560h2v38h-2zM2871 560h2v38h-2zM2874 560h2v38h-2zM1560 560h3v38h-3zM1565 560h3v38h-3zM1570 560h3v38h-3zM1575 560h3v38h-3zM1580 560h2v38h-2zM1584 560h3v38h-3zM1589 560h2v38h-2zM1593 560h2v38h-2zM1606 560h2v38h-2zM1611 560h3v38h-3zM1616 560h2v38h-2zM511 600h2v38h-2zM581 600h30v38h-30zM613 600h11v38h-11zM626 600h1v38h-1zM632 600h2v38h-2zM636 600h145v38h-145zM786 600h81v38h-81zM869 600h3v38h-3zM874 600h59v38h-59zM935 600h58v38h-58zM995 600h36v38h-36zM1033 600h11v38h-11zM1046 600h34v38h-34zM1082 600h4v38h-4zM1088 600h35v38h-35zM1125 600h30v38h-30zM1157 600h1v38h-1zM1160 600h25v38h-25zM1191 600h25v38h-25zM1218 600h1v38h-1zM1221 600h21v38h-21zM1244 600h4v38h-4zM1250 600h26v38h-26zM1278 600h19v38h-19zM1299 600h4v38h-4zM1305 600h24v38h-24zM1331 600h21v38h-21zM1354 600h16v38h-16zM1374 600h3v38h-3zM1379 600h3v38h-3zM1384 600h3v38h-3zM1389 600h13v38h-13zM1404 600h12v38h-12zM1418 600h21v38h-21zM1440 600h1v38h-1zM1443 600h9v38h-9zM1454 600h6v38h-6zM1462 600h5v38h-5zM1469 600h1v38h-1zM1472 600h1v38h-1zM1475 600h2v38h-2zM1478 600h2v38h-2zM1482 600h4v38h-4zM1488 600h5v38h-5zM1495 600h1v38h-1zM1497 600h2v38h-2zM1501 600h5v38h-5zM1508 600h1v38h-1zM1510 600h2v38h-2zM1514 600h4v38h-4zM1520 600h3v38h-3zM1525 600h3v38h-3zM1530 600h3v38h-3zM1535 600h3v38h-3zM1540 600h3v38h-3zM1545 600h2v38h-2zM1549 600h1v38h-1zM1624 600h16v38h-16zM2224 600h5v38h-5zM2233 600h2v38h-2zM2237 600h24v38h-24zM2263 600h7v38h-7zM2854 600h11v38h-11zM2867 600h2v38h-2zM2874 600h2v38h-2zM1560 600h3v38h-3zM1565 600h3v38h-3zM1570 600h3v38h-3zM1575 600h3v38h-3zM1580 600h2v38h-2zM1584 600h3v38h-3zM1589 600h2v38h-2zM1593 600h2v38h-2zM1606 600h2v38h-2zM1611 600h3v38h-3zM1616 600h2v38h-2zM441 640h69v38h-69zM511 640h2v38h-2zM515 640h64v38h-64zM581 640h30v38h-30zM613 640h11v38h-11zM626 640h1v38h-1zM632 640h2v38h-2zM636 640h145v38h-145zM786 640h81v38h-81zM869 640h3v38h-3zM874 640h59v38h-59zM935 640h58v38h-58zM995 640h36v38h-36zM1033 640h11v38h-11zM1046 640h34v38h-34zM1082 640h4v38h-4zM1088 640h35v38h-35zM1125 640h30v38h-30zM1157 640h1v38h-1zM1160 640h25v38h-25zM1191 640h25v38h-25zM1218 640h1v38h-1zM1221 640h21v38h-21zM1244 640h4v38h-4zM1250 640h26v38h-26zM1278 640h19v38h-19zM1299 640h4v38h-4zM1305 640h24v38h-24zM1331 640h18v38h-18zM1351 640h1v38h-1zM1354 640h16v38h-16zM1374 640h3v38h-3zM1389 640h13v38h-13zM1404 640h12v38h-12zM1418 640h21v38h-21zM1440 640h1v38h-1zM1443 640h9v38h-9zM1454 640h6v38h-6zM1462 640h5v38h-5zM1469 640h1v38h-1zM1472 640h1v38h-1zM1475 640h2v38h-2zM1478 640h2v38h-2zM1482 640h4v38h-4zM1488 640h5v38h-5zM1495 640h1v38h-1zM1497 640h2v38h-2zM1501 640h5v38h-5zM1522 640h1v38h-1zM1525 640h3v38h-3zM1530 640h3v38h-3zM1535 640h3v38h-3zM1540 640h3v38h-3zM1545 640h2v38h-2zM1549 640h1v38h-1zM1624 640h16v38h-16zM2062 640h92v38h-92zM2156 640h46v38h-46zM2204 640h11v38h-11zM2217 640h2v38h-2zM2224 640h5v38h-5zM2233 640h2v38h-2zM2237 640h24v38h-24zM2263 640h7v38h-7zM2272 640h344v38h-344zM2618 640h125v38h-125zM2745 640h67v38h-67zM2814 640h28v38h-28zM2844 640h2v38h-2zM2847 640h2v38h-2zM2854 640h11v38h-11zM2867 640h2v38h-2zM2871 640h2v38h-2zM2874 640h2v38h-2zM1560 640h3v38h-3zM1565 640h3v38h-3zM1570 640h3v38h-3zM1575 640h3v38h-3zM1580 640h2v38h-2zM1584 640h3v38h-3zM1589 640h2v38h-2zM1593 640h2v38h-2zM1606 640h2v38h-2zM1611 640h3v38h-3zM1616 640h2v38h-2zM441 680h69v38h-69zM511 680h2v38h-2zM515 680h64v38h-64zM581 680h30v38h-30zM613 680h11v38h-11zM626 680h1v38h-1zM632 680h2v38h-2zM636 680h145v38h-145zM786 680h40v38h-40zM828 680h39v38h-39zM869 680h2v38h-2zM874 680h59v38h-59zM935 680h57v38h-57zM995 680h17v38h-17zM1014 680h17v38h-17zM1033 680h11v38h-11zM1046 680h19v38h-19zM1067 680h13v38h-13zM1082 680h3v38h-3zM1088 680h18v38h-18zM1108 680h15v38h-15zM1125 680h17v38h-17zM1144 680h11v38h-11zM1157 680h1v38h-1zM1160 680h25v38h-25zM1191 680h12v38h-12zM1205 680h11v38h-11zM1218 680h1v38h-1zM1221 680h11v38h-11zM1234 680h8v38h-8zM1244 680h4v38h-4zM1250 680h15v38h-15zM1267 680h9v38h-9zM1278 680h9v38h-9zM1289 680h8v38h-8zM1299 680h4v38h-4zM1305 680h24v38h-24zM1331 680h18v38h-18zM1351 680h1v38h-1zM1354 680h16v38h-16zM1374 680h3v38h-3zM1389 680h13v38h-13zM1404 680h12v38h-12zM1418 680h11v38h-11zM1431 680h8v38h-8zM1440 680h1v38h-1zM1443 680h9v38h-9zM1454 680h2v38h-2zM1458 680h2v38h-2zM1462 680h5v38h-5zM1469 680h1v38h-1zM1624 680h16v38h-16zM2062 680h92v38h-92zM2156 680h46v38h-46zM2204 680h11v38h-11zM2217 680h2v38h-2zM2224 680h5v38h-5zM2233 680h2v38h-2zM2237 680h24v38h-24zM2263 680h7v38h-7zM2272 680h344v38h-344zM2618 680h125v38h-125zM2745 680h67v38h-67zM2814 680h28v38h-28zM2844 680h2v38h-2zM2847 680h2v38h-2zM2854 680h11v38h-11zM2867 680h2v38h-2zM2871 680h2v38h-2zM2874 680h2v38h-2zM1565 680h3v38h-3zM1570 680h3v38h-3zM1575 680h3v38h-3zM1580 680h2v38h-2zM1584 680h3v38h-3zM1589 680h2v38h-2zM1593 680h2v38h-2zM1472 680h3v38h-3zM1478 680h2v38h-2zM1482 680h2v38h-2zM1486 680h2v38h-2zM1490 680h3v38h-3zM1495 680h4v38h-4zM1501 680h3v38h-3zM1506 680h3v38h-3zM1511 680h2v38h-2zM1515 680h2v38h-2zM1525 680h3v38h-3zM1530 680h3v38h-3zM1535 680h3v38h-3zM1546 680h4v38h-4zM441 720h59v38h-59zM502 720h8v38h-8zM511 720h2v38h-2zM515 720h64v38h-64zM581 720h30v38h-30zM613 720h11v38h-11zM626 720h1v38h-1zM632 720h2v38h-2zM636 720h145v38h-145zM786 720h40v38h-40zM828 720h39v38h-39zM869 720h2v38h-2zM874 720h59v38h-59zM935 720h55v38h-55zM991 720h2v38h-2zM995 720h17v38h-17zM1014 720h17v38h-17zM1033 720h11v38h-11zM1046 720h19v38h-19zM1067 720h13v38h-13zM1088 720h18v38h-18zM1108 720h15v38h-15zM1125 720h17v38h-17zM1144 720h11v38h-11zM1157 720h1v38h-1zM1160 720h25v38h-25zM1191 720h12v38h-12zM1205 720h11v38h-11zM1218 720h1v38h-1zM1221 720h11v38h-11zM1234 720h8v38h-8zM1244 720h4v38h-4zM1250 720h15v38h-15zM1267 720h9v38h-9zM1278 720h9v38h-9zM1289 720h8v38h-8zM1299 720h4v38h-4zM1305 720h24v38h-24zM1331 720h18v38h-18zM1351 720h1v38h-1zM1354 720h16v38h-16zM1374 720h3v38h-3zM1389 720h13v38h-13zM1404 720h12v38h-12zM1418 720h11v38h-11zM1431 720h8v38h-8zM1440 720h1v38h-1zM1443 720h9v38h-9zM1454 720h2v38h-2zM1458 720h2v38h-2zM1462 720h5v38h-5zM1469 720h1v38h-1zM1624 720h16v38h-16zM2062 720h92v38h-92zM2156 720h46v38h-46zM2204 720h11v38h-11zM2217 720h2v38h-2zM2220 720h2v38h-2zM2224 720h5v38h-5zM2233 720h2v38h-2zM2237 720h20v38h-20zM2259 720h2v38h-2zM2263 720h7v38h-7zM2272 720h344v38h-344zM2618 720h125v38h-125zM2745 720h67v38h-67zM2814 720h28v38h-28zM2844 720h2v38h-2zM2847 720h2v38h-2zM2854 720h11v38h-11zM2867 720h2v38h-2zM2871 720h2v38h-2zM2874 720h2v38h-2zM1560 720h3v38h-3zM1565 720h3v38h-3zM1570 720h3v38h-3zM1575 720h3v38h-3zM1580 720h2v38h-2zM1589 720h2v38h-2zM1593 720h2v38h-2zM1606 720h2v38h-2zM1611 720h3v38h-3zM1472 720h3v38h-3zM1478 720h2v38h-2zM1482 720h2v38h-2zM1486 720h2v38h-2zM1495 720h4v38h-4zM1506 720h3v38h-3zM1511 720h2v38h-2zM1515 720h2v38h-2zM1525 720h3v38h-3zM1530 720h3v38h-3zM1535 720h3v38h-3zM1546 720h4v38h-4zM441 760h59v38h-59zM502 760h8v38h-8zM511 760h2v38h-2zM515 760h64v38h-64zM581 760h30v38h-30zM613 760h11v38h-11zM626 760h1v38h-1zM629 760h1v38h-1zM632 760h2v38h-2zM636 760h104v38h-104zM742 760h30v38h-30zM786 760h40v38h-40zM828 760h39v38h-39zM869 760h2v38h-2zM874 760h59v38h-59zM935 760h55v38h-55zM991 760h2v38h-2zM995 760h17v38h-17zM1014 760h17v38h-17zM1033 760h1v38h-1zM1036 760h1v38h-1zM1039 760h2v38h-2zM1046 760h19v38h-19zM1067 760h13v38h-13zM1088 760h18v38h-18zM1108 760h15v38h-15zM1125 760h17v38h-17zM1144 760h11v38h-11zM1157 760h1v38h-1zM1160 760h25v38h-25zM1191 760h12v38h-12zM1205 760h11v38h-11zM1218 760h1v38h-1zM1221 760h11v38h-11zM1234 760h8v38h-8zM1244 760h4v38h-4zM1250 760h15v38h-15zM1267 760h9v38h-9zM1278 760h9v38h-9zM1289 760h8v38h-8zM1299 760h4v38h-4zM1305 760h9v38h-9zM1316 760h7v38h-7zM1325 760h4v38h-4zM1331 760h18v38h-18zM1351 760h1v38h-1zM1354 760h13v38h-13zM1369 760h1v38h-1zM1374 760h3v38h-3zM1384 760h3v38h-3zM1389 760h7v38h-7zM1398 760h4v38h-4zM1404 760h12v38h-12zM1418 760h11v38h-11zM1431 760h8v38h-8zM1440 760h1v38h-1zM1443 760h9v38h-9zM1454 760h2v38h-2zM1458 760h2v38h-2zM1462 760h5v38h-5zM1469 760h1v38h-1zM1627 760h4v38h-4zM1632 760h4v38h-4zM1638 760h2v38h-2zM2062 760h92v38h-92zM2156 760h46v38h-46zM2204 760h11v38h-11zM2217 760h2v38h-2zM2220 760h2v38h-2zM2224 760h5v38h-5zM2233 760h2v38h-2zM2237 760h20v38h-20zM2259 760h2v38h-2zM2263 760h7v38h-7zM2272 760h344v38h-344zM2618 760h125v38h-125zM2745 760h67v38h-67zM2814 760h28v38h-28zM2844 760h2v38h-2zM2847 760h2v38h-2zM2854 760h11v38h-11zM2867 760h2v38h-2zM2871 760h2v38h-2zM2874 760h2v38h-2zM1560 760h3v38h-3zM1565 760h3v38h-3zM1570 760h3v38h-3zM1580 760h2v38h-2zM1584 760h3v38h-3zM1589 760h2v38h-2zM1593 760h2v38h-2zM1606 760h2v38h-2zM1611 760h3v38h-3zM1616 760h2v38h-2zM1472 760h3v38h-3zM1478 760h2v38h-2zM1482 760h2v38h-2zM1486 760h2v38h-2zM1490 760h3v38h-3zM1495 760h4v38h-4zM1511 760h2v38h-2zM1515 760h2v38h-2zM1525 760h3v38h-3zM1535 760h3v38h-3zM1546 760h4v38h-4zM441 800h59v38h-59zM502 800h8v38h-8zM511 800h2v38h-2zM581 800h30v38h-30zM613 800h11v38h-11zM626 800h1v38h-1zM629 800h1v38h-1zM632 800h2v38h-2zM636 800h104v38h-104zM742 800h30v38h-30zM786 800h40v38h-40zM828 800h39v38h-39zM869 800h2v38h-2zM874 800h59v38h-59zM935 800h55v38h-55zM991 800h2v38h-2zM995 800h17v38h-17zM1014 800h13v38h-13zM1029 800h1v38h-1zM1032 800h2v38h-2zM1036 800h1v38h-1zM1039 800h2v38h-2zM1046 800h19v38h-19zM1067 800h13v38h-13zM1088 800h18v38h-18zM1108 800h15v38h-15zM1125 800h17v38h-17zM1144 800h11v38h-11zM1157 800h1v38h-1zM1160 800h25v38h-25zM1191 800h12v38h-12zM1205 800h11v38h-11zM1218 800h1v38h-1zM1221 800h11v38h-11zM1234 800h8v38h-8zM1244 800h2v38h-2zM1247 800h1v38h-1zM1250 800h15v38h-15zM1267 800h9v38h-9zM1278 800h9v38h-9zM1289 800h8v38h-8zM1299 800h4v38h-4zM1305 800h9v38h-9zM1316 800h7v38h-7zM1325 800h4v38h-4zM1331 800h18v38h-18zM1351 800h1v38h-1zM1354 800h13v38h-13zM1369 800h1v38h-1zM1384 800h3v38h-3zM1389 800h7v38h-7zM1398 800h4v38h-4zM1404 800h12v38h-12zM1418 800h11v38h-11zM1431 800h8v38h-8zM1440 800h1v38h-1zM1443 800h9v38h-9zM1454 800h2v38h-2zM1458 800h2v38h-2zM1462 800h5v38h-5zM1469 800h1v38h-1zM1627 800h4v38h-4zM1632 800h4v38h-4zM1638 800h2v38h-2zM2156 800h46v38h-46zM2217 800h2v38h-2zM2220 800h2v38h-2zM2224 800h5v38h-5zM2233 800h2v38h-2zM2237 800h20v38h-20zM2259 800h2v38h-2zM2263 800h7v38h-7zM2726 800h17v38h-17zM2811 800h1v38h-1zM2854 800h11v38h-11zM2867 800h2v38h-2zM2871 800h2v38h-2zM2874 800h2v38h-2zM1560 800h3v38h-3zM1580 800h2v38h-2zM1584 800h3v38h-3zM1589 800h2v38h-2zM1593 800h2v38h-2zM1606 800h2v38h-2zM1611 800h3v38h-3zM1616 800h2v38h-2zM1472 800h3v38h-3zM1478 800h2v38h-2zM1482 800h2v38h-2zM1486 800h2v38h-2zM1490 800h3v38h-3zM1495 800h4v38h-4zM1515 800h2v38h-2zM1525 800h3v38h-3zM1535 800h3v38h-3zM1546 800h4v38h-4zM441 840h59v38h-59zM502 840h8v38h-8zM511 840h2v38h-2zM515 840h64v38h-64zM581 840h27v38h-27zM609 840h2v38h-2zM613 840h11v38h-11zM626 840h1v38h-1zM629 840h1v38h-1zM632 840h2v38h-2zM636 840h104v38h-104zM742 840h23v38h-23zM786 840h40v38h-40zM828 840h39v38h-39zM869 840h2v38h-2zM874 840h59v38h-59zM935 840h55v38h-55zM991 840h2v38h-2zM995 840h17v38h-17zM1014 840h13v38h-13zM1029 840h1v38h-1zM1032 840h2v38h-2zM1036 840h1v38h-1zM1039 840h2v38h-2zM1046 840h19v38h-19zM1067 840h13v38h-13zM1081 840h2v38h-2zM1088 840h18v38h-18zM1108 840h15v38h-15zM1125 840h17v38h-17zM1144 840h11v38h-11zM1157 840h1v38h-1zM1160 840h25v38h-25zM1191 840h12v38h-12zM1205 840h11v38h-11zM1218 840h1v38h-1zM1221 840h11v38h-11zM1234 840h8v38h-8zM1244 840h2v38h-2zM1250 840h15v38h-15zM1267 840h9v38h-9zM1278 840h9v38h-9zM1289 840h8v38h-8zM1299 840h1v38h-1zM1301 840h2v38h-2zM1305 840h9v38h-9zM1316 840h7v38h-7zM1325 840h4v38h-4zM1331 840h18v38h-18zM1351 840h1v38h-1zM1354 840h13v38h-13zM1369 840h1v38h-1zM1384 840h3v38h-3zM1389 840h7v38h-7zM1398 840h4v38h-4zM1404 840h12v38h-12zM1418 840h11v38h-11zM1431 840h8v38h-8zM1440 840h1v38h-1zM1443 840h9v38h-9zM1454 840h2v38h-2zM1458 840h2v38h-2zM1462 840h5v38h-5zM1469 840h1v38h-1zM1627 840h4v38h-4zM1632 840h4v38h-4zM1638 840h2v38h-2zM2062 840h79v38h-79zM2143 840h11v38h-11zM2156 840h46v38h-46zM2204 840h11v38h-11zM2217 840h2v38h-2zM2220 840h2v38h-2zM2233 840h2v38h-2zM2237 840h20v38h-20zM2259 840h2v38h-2zM2263 840h7v38h-7zM2272 840h286v38h-286zM2560 840h46v38h-46zM2608 840h2v38h-2zM2612 840h2v38h-2zM2618 840h100v38h-100zM2720 840h3v38h-3zM2726 840h17v38h-17zM2745 840h28v38h-28zM2775 840h11v38h-11zM2788 840h8v38h-8zM2798 840h11v38h-11zM2814 840h28v38h-28zM2844 840h2v38h-2zM2847 840h2v38h-2zM2854 840h11v38h-11zM2867 840h2v38h-2zM2871 840h2v38h-2zM2874 840h2v38h-2zM1560 840h3v38h-3zM1565 840h3v38h-3zM1570 840h3v38h-3zM1584 840h3v38h-3zM1589 840h2v38h-2zM1593 840h2v38h-2zM1606 840h2v38h-2zM1611 840h3v38h-3zM1616 840h2v38h-2zM1472 840h3v38h-3zM1478 840h2v38h-2zM1482 840h2v38h-2zM1486 840h2v38h-2zM1495 840h4v38h-4zM1515 840h2v38h-2zM1525 840h3v38h-3zM1546 840h4v38h-4zM441 880h59v38h-59zM502 880h8v38h-8zM511 880h2v38h-2zM515 880h64v38h-64zM581 880h27v38h-27zM609 880h2v38h-2zM613 880h11v38h-11zM626 880h1v38h-1zM629 880h1v38h-1zM632 880h2v38h-2zM636 880h52v38h-52zM690 880h15v38h-15zM742 880h23v38h-23zM786 880h40v38h-40zM828 880h39v38h-39zM874 880h59v38h-59zM935 880h55v38h-55zM991 880h2v38h-2zM995 880h17v38h-17zM1014 880h13v38h-13zM1029 880h1v38h-1zM1032 880h2v38h-2zM1036 880h1v38h-1zM1039 880h2v38h-2zM1046 880h19v38h-19zM1067 880h13v38h-13zM1088 880h18v38h-18zM1108 880h15v38h-15zM1125 880h17v38h-17zM1144 880h11v38h-11zM1157 880h1v38h-1zM1160 880h25v38h-25zM1191 880h12v38h-12zM1205 880h11v38h-11zM1218 880h1v38h-1zM1221 880h11v38h-11zM1234 880h8v38h-8zM1244 880h2v38h-2zM1250 880h15v38h-15zM1267 880h9v38h-9zM1278 880h9v38h-9zM1289 880h8v38h-8zM1305 880h9v38h-9zM1316 880h7v38h-7zM1325 880h4v38h-4zM1331 880h18v38h-18zM1351 880h1v38h-1zM1354 880h13v38h-13zM1369 880h1v38h-1zM1384 880h3v38h-3zM1389 880h7v38h-7zM1398 880h4v38h-4zM1404 880h12v38h-12zM1418 880h11v38h-11zM1431 880h8v38h-8zM1440 880h1v38h-1zM1443 880h9v38h-9zM1454 880h2v38h-2zM1458 880h2v38h-2zM1462 880h5v38h-5zM1469 880h1v38h-1zM1627 880h4v38h-4zM1632 880h4v38h-4zM1638 880h2v38h-2zM2062 880h79v38h-79zM2143 880h11v38h-11zM2156 880h46v38h-46zM2204 880h11v38h-11zM2217 880h2v38h-2zM2220 880h2v38h-2zM2233 880h2v38h-2zM2237 880h20v38h-20zM2259 880h2v38h-2zM2272 880h286v38h-286zM2560 880h46v38h-46zM2608 880h2v38h-2zM2612 880h2v38h-2zM2618 880h100v38h-100zM2720 880h3v38h-3zM2726 880h17v38h-17zM2745 880h28v38h-28zM2775 880h11v38h-11zM2788 880h8v38h-8zM2798 880h11v38h-11zM2814 880h28v38h-28zM2844 880h2v38h-2zM2847 880h2v38h-2zM2854 880h11v38h-11zM2867 880h2v38h-2zM2871 880h2v38h-2zM2874 880h2v38h-2zM1560 880h3v38h-3zM1565 880h3v38h-3zM1570 880h3v38h-3zM1584 880h3v38h-3zM1589 880h2v38h-2zM1593 880h2v38h-2zM1606 880h2v38h-2zM1611 880h3v38h-3zM1616 880h2v38h-2zM1472 880h3v38h-3zM1478 880h2v38h-2zM1482 880h2v38h-2zM1486 880h2v38h-2zM1490 880h3v38h-3zM1495 880h4v38h-4zM1515 880h2v38h-2zM1525 880h3v38h-3zM1546 880h4v38h-4zM441 920h59v38h-59zM502 920h8v38h-8zM511 920h2v38h-2zM515 920h64v38h-64zM581 920h27v38h-27zM609 920h2v38h-2zM613 920h11v38h-11zM626 920h1v38h-1zM629 920h1v38h-1zM632 920h2v38h-2zM636 920h52v38h-52zM690 920h15v38h-15zM742 920h23v38h-23zM786 920h40v38h-40zM828 920h39v38h-39zM869 920h2v38h-2zM874 920h17v38h-17zM893 920h2v38h-2zM897 920h2v38h-2zM901 920h2v38h-2zM906 920h2v38h-2zM911 920h2v38h-2zM916 920h2v38h-2zM921 920h2v38h-2zM926 920h2v38h-2zM930 920h2v38h-2zM935 920h55v38h-55zM991 920h2v38h-2zM995 920h6v38h-6zM1004 920h3v38h-3zM1009 920h3v38h-3zM1014 920h13v38h-13zM1029 920h1v38h-1zM1032 920h2v38h-2zM1036 920h1v38h-1zM1039 920h2v38h-2zM1046 920h19v38h-19zM1067 920h13v38h-13zM1088 920h18v38h-18zM1108 920h3v38h-3zM1113 920h3v38h-3zM1119 920h4v38h-4zM1125 920h17v38h-17zM1144 920h11v38h-11zM1157 920h1v38h-1zM1160 920h25v38h-25zM1191 920h12v38h-12zM1205 920h11v38h-11zM1218 920h1v38h-1zM1221 920h11v38h-11zM1234 920h8v38h-8zM1244 920h2v38h-2zM1250 920h15v38h-15zM1267 920h9v38h-9zM1278 920h9v38h-9zM1289 920h8v38h-8zM1305 920h9v38h-9zM1316 920h7v38h-7zM1325 920h4v38h-4zM1331 920h18v38h-18zM1351 920h2v38h-2zM1355 920h2v38h-2zM1359 920h2v38h-2zM1363 920h2v38h-2zM1367 920h2v38h-2zM1384 920h3v38h-3zM1389 920h3v38h-3zM1394 920h2v38h-2zM1398 920h4v38h-4zM1404 920h5v38h-5zM1411 920h5v38h-5zM1418 920h4v38h-4zM1424 920h5v38h-5zM1431 920h8v38h-8zM1440 920h1v38h-1zM1443 920h3v38h-3zM1448 920h4v38h-4zM1454 920h2v38h-2zM1458 920h2v38h-2zM1462 920h5v38h-5zM1469 920h1v38h-1zM1627 920h4v38h-4zM1632 920h4v38h-4zM1638 920h2v38h-2zM2062 920h79v38h-79zM2143 920h11v38h-11zM2156 920h46v38h-46zM2204 920h11v38h-11zM2217 920h2v38h-2zM2220 920h2v38h-2zM2237 920h20v38h-20zM2259 920h2v38h-2zM2272 920h286v38h-286zM2560 920h46v38h-46zM2608 920h2v38h-2zM2612 920h2v38h-2zM2618 920h100v38h-100zM2720 920h3v38h-3zM2726 920h17v38h-17zM2745 920h28v38h-28zM2775 920h11v38h-11zM2788 920h8v38h-8zM2798 920h11v38h-11zM2814 920h28v38h-28zM2844 920h2v38h-2zM2847 920h2v38h-2zM2854 920h11v38h-11zM2867 920h2v38h-2zM2871 920h2v38h-2zM2874 920h2v38h-2zM1560 920h3v38h-3zM1565 920h3v38h-3zM1570 920h3v38h-3zM1584 920h3v38h-3zM1589 920h2v38h-2zM1593 920h2v38h-2zM1611 920h3v38h-3zM1616 920h2v38h-2zM1472 920h3v38h-3zM1478 920h2v38h-2zM1482 920h2v38h-2zM1486 920h2v38h-2zM1490 920h3v38h-3zM1495 920h4v38h-4zM1525 920h3v38h-3zM1535 920h3v38h-3zM1546 920h4v38h-4zM441 960h59v38h-59zM502 960h8v38h-8zM511 960h2v38h-2zM515 960h64v38h-64zM581 960h21v38h-21zM604 960h4v38h-4zM609 960h2v38h-2zM613 960h11v38h-11zM626 960h1v38h-1zM629 960h1v38h-1zM632 960h2v38h-2zM636 960h45v38h-45zM683 960h5v38h-5zM690 960h12v38h-12zM703 960h2v38h-2zM742 960h23v38h-23zM786 960h40v38h-40zM828 960h39v38h-39zM869 960h2v38h-2zM874 960h15v38h-15zM892 960h2v38h-2zM897 960h2v38h-2zM902 960h2v38h-2zM907 960h2v38h-2zM912 960h2v38h-2zM917 960h2v38h-2zM922 960h2v38h-2zM927 960h2v38h-2zM931 960h2v38h-2zM935 960h45v38h-45zM982 960h2v38h-2zM986 960h2v38h-2zM990 960h2v38h-2zM995 960h6v38h-6zM1004 960h3v38h-3zM1009 960h3v38h-3zM1014 960h13v38h-13zM1029 960h1v38h-1zM1032 960h2v38h-2zM1036 960h1v38h-1zM1039 960h2v38h-2zM1046 960h19v38h-19zM1067 960h13v38h-13zM1088 960h18v38h-18zM1108 960h3v38h-3zM1113 960h3v38h-3zM1119 960h4v38h-4zM1130 960h8v38h-8zM1140 960h2v38h-2zM1144 960h11v38h-11zM1157 960h1v38h-1zM1160 960h25v38h-25zM1191 960h12v38h-12zM1205 960h11v38h-11zM1218 960h1v38h-1zM1221 960h11v38h-11zM1234 960h8v38h-8zM1250 960h15v38h-15zM1267 960h9v38h-9zM1278 960h9v38h-9zM1289 960h8v38h-8zM1305 960h5v38h-5zM1312 960h2v38h-2zM1316 960h7v38h-7zM1325 960h4v38h-4zM1331 960h13v38h-13zM1346 960h2v38h-2zM1350 960h2v38h-2zM1354 960h2v38h-2zM1358 960h2v38h-2zM1362 960h2v38h-2zM1366 960h3v38h-3zM1389 960h3v38h-3zM1394 960h2v38h-2zM1398 960h4v38h-4zM1404 960h5v38h-5zM1411 960h5v38h-5zM1418 960h4v38h-4zM1424 960h5v38h-5zM1431 960h8v38h-8zM1440 960h1v38h-1zM1443 960h3v38h-3zM1448 960h4v38h-4zM1454 960h2v38h-2zM1458 960h2v38h-2zM1462 960h5v38h-5zM1469 960h1v38h-1zM1627 960h4v38h-4zM1632 960h4v38h-4zM1638 960h2v38h-2zM2062 960h79v38h-79zM2143 960h11v38h-11zM2156 960h46v38h-46zM2204 960h11v38h-11zM2217 960h2v38h-2zM2220 960h2v38h-2zM2237 960h20v38h-20zM2259 960h2v38h-2zM2272 960h286v38h-286zM2560 960h46v38h-46zM2608 960h2v38h-2zM2612 960h2v38h-2zM2618 960h100v38h-100zM2720 960h3v38h-3zM2726 960h14v38h-14zM2742 960h1v38h-1zM2745 960h28v38h-28zM2775 960h11v38h-11zM2788 960h8v38h-8zM2798 960h11v38h-11zM2814 960h28v38h-28zM2844 960h2v38h-2zM2847 960h2v38h-2zM2854 960h11v38h-11zM2867 960h2v38h-2zM2871 960h2v38h-2zM2874 960h2v38h-2zM1560 960h3v38h-3zM1565 960h3v38h-3zM1570 960h3v38h-3zM1584 960h3v38h-3zM1589 960h2v38h-2zM1593 960h2v38h-2zM1606 960h2v38h-2zM1611 960h3v38h-3zM1616 960h2v38h-2zM1472 960h3v38h-3zM1478 960h2v38h-2zM1482 960h2v38h-2zM1486 960h2v38h-2zM1490 960h3v38h-3zM1495 960h4v38h-4zM1515 960h2v38h-2zM1525 960h3v38h-3zM1535 960h3v38h-3zM1546 960h4v38h-4zM441 1000h59v38h-59zM502 1000h8v38h-8zM511 1000h2v38h-2zM581 1000h21v38h-21zM604 1000h4v38h-4zM609 1000h2v38h-2zM613 1000h11v38h-11zM626 1000h1v38h-1zM629 1000h1v38h-1zM632 1000h2v38h-2zM683 1000h5v38h-5zM690 1000h12v38h-12zM703 1000h2v38h-2zM742 1000h23v38h-23zM786 1000h36v38h-36zM824 1000h2v38h-2zM828 1000h39v38h-39zM869 1000h2v38h-2zM874 1000h6v38h-6zM882 1000h2v38h-2zM886 1000h3v38h-3zM935 1000h45v38h-45zM1046 1000h10v38h-10zM1059 1000h6v38h-6zM1067 1000h13v38h-13zM1088 1000h18v38h-18zM1130 1000h8v38h-8zM1140 1000h2v38h-2zM1144 1000h11v38h-11zM1160 1000h13v38h-13zM1175 1000h7v38h-7zM1191 1000h12v38h-12zM1205 1000h11v38h-11zM1221 1000h11v38h-11zM1234 1000h8v38h-8zM1250 1000h15v38h-15zM1267 1000h9v38h-9zM1278 1000h9v38h-9zM1316 1000h7v38h-7zM1325 1000h4v38h-4zM1627 1000h4v38h-4zM1632 1000h4v38h-4zM1638 1000h2v38h-2zM2062 1000h79v38h-79zM2143 1000h11v38h-11zM2156 1000h46v38h-46zM2204 1000h11v38h-11zM2217 1000h2v38h-2zM2220 1000h2v38h-2zM2237 1000h12v38h-12zM2251 1000h6v38h-6zM2259 1000h2v38h-2zM2694 1000h24v38h-24zM2720 1000h3v38h-3zM2726 1000h17v38h-17zM2787 1000h9v38h-9zM2798 1000h9v38h-9zM2809 1000h2v38h-2zM2842 1000h9v38h-9zM2855 1000h10v38h-10zM2867 1000h2v38h-2zM2871 1000h2v38h-2zM2874 1000h2v38h-2zM1560 1000h3v38h-3zM1565 1000h3v38h-3zM1570 1000h3v38h-3zM1584 1000h3v38h-3zM1589 1000h2v38h-2zM1593 1000h2v38h-2zM1606 1000h2v38h-2zM1611 1000h3v38h-3zM1616 1000h2v38h-2zM1478 1000h2v38h-2zM1482 1000h2v38h-2zM1486 1000h2v38h-2zM1490 1000h3v38h-3zM1515 1000h2v38h-2zM1525 1000h3v38h-3zM1546 1000h4v38h-4zM891 1000h2v38h-2zM901 1000h4v38h-4zM908 1000h4v38h-4zM914 1000h2v38h-2zM918 1000h2v38h-2zM928 1000h4v38h-4zM990 1000h4v38h-4zM996 1000h3v38h-3zM1001 1000h5v38h-5zM1008 1000h3v38h-3zM1013 1000h3v38h-3zM1018 1000h5v38h-5zM1025 1000h4v38h-4zM1108 1000h4v38h-4zM1114 1000h2v38h-2zM1118 1000h3v38h-3zM1295 1000h4v38h-4zM1302 1000h1v38h-1zM1309 1000h4v38h-4zM1346 1000h2v38h-2zM1350 1000h3v38h-3zM1356 1000h3v38h-3zM1366 1000h3v38h-3zM1393 1000h3v38h-3zM1402 1000h3v38h-3zM1408 1000h3v38h-3zM1413 1000h2v38h-2zM1423 1000h2v38h-2zM1432 1000h3v38h-3zM1438 1000h2v38h-2zM1448 1000h3v38h-3zM1453 1000h3v38h-3zM1458 1000h3v38h-3zM1463 1000h3v38h-3zM441 1040h59v38h-59zM502 1040h8v38h-8zM511 1040h2v38h-2zM515 1040h45v38h-45zM562 1040h7v38h-7zM571 1040h8v38h-8zM581 1040h16v38h-16zM599 1040h2v38h-2zM603 1040h2v38h-2zM607 1040h2v38h-2zM610 1040h1v38h-1zM613 1040h8v38h-8zM623 1040h1v38h-1zM626 1040h1v38h-1zM632 1040h2v38h-2zM683 1040h5v38h-5zM690 1040h12v38h-12zM703 1040h2v38h-2zM742 1040h23v38h-23zM786 1040h36v38h-36zM824 1040h2v38h-2zM828 1040h25v38h-25zM856 1040h3v38h-3zM862 1040h5v38h-5zM869 1040h2v38h-2zM935 1040h45v38h-45zM1088 1040h18v38h-18zM1316 1040h7v38h-7zM1325 1040h4v38h-4zM1627 1040h4v38h-4zM1632 1040h4v38h-4zM1638 1040h2v38h-2zM2143 1040h11v38h-11zM2156 1040h34v38h-34zM2192 1040h7v38h-7zM2202 1040h1v38h-1zM2205 1040h1v38h-1zM2209 1040h5v38h-5zM2217 1040h2v38h-2zM2221 1040h3v38h-3zM2237 1040h12v38h-12zM2251 1040h6v38h-6zM2259 1040h2v38h-2zM2272 1040h273v38h-273zM2547 1040h5v38h-5zM2554 1040h4v38h-4zM2560 1040h30v38h-30zM2592 1040h8v38h-8zM2601 1040h2v38h-2zM2608 1040h2v38h-2zM2612 1040h4v38h-4zM2618 1040h21v38h-21zM2641 1040h17v38h-17zM2660 1040h8v38h-8zM2669 1040h6v38h-6zM2678 1040h4v38h-4zM2685 1040h7v38h-7zM2694 1040h24v38h-24zM2720 1040h3v38h-3zM2726 1040h15v38h-15zM2745 1040h18v38h-18zM2765 1040h8v38h-8zM2775 1040h11v38h-11zM2787 1040h9v38h-9zM2798 1040h9v38h-9zM2814 1040h25v38h-25zM2842 1040h9v38h-9zM2854 1040h11v38h-11zM2867 1040h2v38h-2zM2871 1040h2v38h-2zM2874 1040h2v38h-2zM1565 1040h3v38h-3zM1570 1040h3v38h-3zM1584 1040h3v38h-3zM1589 1040h2v38h-2zM1593 1040h2v38h-2zM1606 1040h2v38h-2zM1616 1040h2v38h-2zM1472 1040h3v38h-3zM1478 1040h2v38h-2zM1482 1040h2v38h-2zM1486 1040h2v38h-2zM1490 1040h3v38h-3zM1495 1040h4v38h-4zM1515 1040h2v38h-2zM1525 1040h3v38h-3zM1546 1040h4v38h-4zM874 1040h2v38h-2zM880 1040h3v38h-3zM891 1040h2v38h-2zM914 1040h2v38h-2zM928 1040h4v38h-4zM990 1040h4v38h-4zM996 1040h3v38h-3zM1001 1040h5v38h-5zM1008 1040h3v38h-3zM1013 1040h3v38h-3zM1018 1040h5v38h-5zM1025 1040h4v38h-4zM1046 1040h4v38h-4zM1056 1040h4v38h-4zM1062 1040h2v38h-2zM1066 1040h2v38h-2zM1071 1040h4v38h-4zM1077 1040h2v38h-2zM1108 1040h4v38h-4zM1114 1040h2v38h-2zM1118 1040h3v38h-3zM1123 1040h6v38h-6zM1132 1040h6v38h-6zM1140 1040h2v38h-2zM1144 1040h2v38h-2zM1154 1040h5v38h-5zM1161 1040h2v38h-2zM1165 1040h2v38h-2zM1169 1040h6v38h-6zM1177 1040h6v38h-6zM1196 1040h6v38h-6zM1204 1040h5v38h-5zM1211 1040h6v38h-6zM1224 1040h3v38h-3zM1240 1040h2v38h-2zM1250 1040h5v38h-5zM1258 1040h3v38h-3zM1263 1040h4v38h-4zM1269 1040h5v38h-5zM1277 1040h5v38h-5zM1284 1040h2v38h-2zM1288 1040h5v38h-5zM1295 1040h4v38h-4zM1302 1040h1v38h-1zM1309 1040h4v38h-4zM1346 1040h2v38h-2zM1350 1040h3v38h-3zM1356 1040h3v38h-3zM1366 1040h3v38h-3zM1408 1040h3v38h-3zM1413 1040h2v38h-2zM1423 1040h2v38h-2zM1448 1040h3v38h-3zM1453 1040h3v38h-3zM1458 1040h3v38h-3zM441 1080h59v38h-59zM502 1080h2v38h-2zM506 1080h1v38h-1zM509 1080h1v38h-1zM515 1080h45v38h-45zM562 1080h7v38h-7zM571 1080h8v38h-8zM581 1080h16v38h-16zM599 1080h2v38h-2zM603 1080h2v38h-2zM607 1080h2v38h-2zM610 1080h1v38h-1zM613 1080h8v38h-8zM623 1080h1v38h-1zM626 1080h1v38h-1zM632 1080h2v38h-2zM690 1080h12v38h-12zM703 1080h2v38h-2zM742 1080h23v38h-23zM786 1080h36v38h-36zM824 1080h2v38h-2zM828 1080h12v38h-12zM843 1080h6v38h-6zM935 1080h15v38h-15zM952 1080h8v38h-8zM1316 1080h7v38h-7zM1325 1080h4v38h-4zM1331 1080h13v38h-13zM1627 1080h4v38h-4zM1632 1080h4v38h-4zM1638 1080h2v38h-2zM2062 1080h26v38h-26zM2090 1080h17v38h-17zM2109 1080h11v38h-11zM2122 1080h8v38h-8zM2132 1080h6v38h-6zM2140 1080h1v38h-1zM2143 1080h11v38h-11zM2156 1080h34v38h-34zM2192 1080h7v38h-7zM2202 1080h1v38h-1zM2205 1080h1v38h-1zM2209 1080h5v38h-5zM2217 1080h2v38h-2zM2221 1080h3v38h-3zM2237 1080h12v38h-12zM2251 1080h6v38h-6zM2259 1080h2v38h-2zM2272 1080h273v38h-273zM2547 1080h5v38h-5zM2554 1080h4v38h-4zM2560 1080h30v38h-30zM2592 1080h8v38h-8zM2601 1080h2v38h-2zM2608 1080h2v38h-2zM2612 1080h4v38h-4zM2618 1080h21v38h-21zM2641 1080h17v38h-17zM2660 1080h8v38h-8zM2669 1080h6v38h-6zM2678 1080h4v38h-4zM2685 1080h7v38h-7zM2694 1080h24v38h-24zM2720 1080h3v38h-3zM2726 1080h15v38h-15zM2745 1080h18v38h-18zM2765 1080h8v38h-8zM2775 1080h11v38h-11zM2787 1080h9v38h-9zM2798 1080h9v38h-9zM2814 1080h25v38h-25zM2842 1080h9v38h-9zM2854 1080h11v38h-11zM2867 1080h2v38h-2zM2871 1080h2v38h-2zM2874 1080h2v38h-2zM1560 1080h3v38h-3zM1565 1080h3v38h-3zM1570 1080h3v38h-3zM1589 1080h2v38h-2zM1593 1080h2v38h-2zM1606 1080h2v38h-2zM1611 1080h3v38h-3zM1616 1080h2v38h-2zM1472 1080h3v38h-3zM1486 1080h2v38h-2zM1495 1080h4v38h-4zM1515 1080h2v38h-2zM1525 1080h3v38h-3zM1546 1080h4v38h-4zM852 1080h5v38h-5zM859 1080h5v38h-5zM866 1080h2v38h-2zM870 1080h2v38h-2zM874 1080h2v38h-2zM880 1080h3v38h-3zM891 1080h2v38h-2zM901 1080h4v38h-4zM914 1080h2v38h-2zM918 1080h2v38h-2zM928 1080h4v38h-4zM968 1080h5v38h-5zM975 1080h2v38h-2zM990 1080h4v38h-4zM1001 1080h5v38h-5zM1013 1080h3v38h-3zM1018 1080h5v38h-5zM1025 1080h4v38h-4zM1046 1080h4v38h-4zM1056 1080h4v38h-4zM1062 1080h2v38h-2zM1066 1080h2v38h-2zM1071 1080h4v38h-4zM1077 1080h2v38h-2zM1088 1080h5v38h-5zM1095 1080h2v38h-2zM1100 1080h5v38h-5zM1108 1080h4v38h-4zM1114 1080h2v38h-2zM1118 1080h3v38h-3zM1123 1080h6v38h-6zM1132 1080h6v38h-6zM1140 1080h2v38h-2zM1144 1080h2v38h-2zM1148 1080h4v38h-4zM1154 1080h5v38h-5zM1161 1080h2v38h-2zM1165 1080h2v38h-2zM1169 1080h6v38h-6zM1177 1080h6v38h-6zM1191 1080h3v38h-3zM1196 1080h6v38h-6zM1204 1080h5v38h-5zM1211 1080h6v38h-6zM1224 1080h3v38h-3zM1230 1080h2v38h-2zM1235 1080h3v38h-3zM1240 1080h2v38h-2zM1250 1080h5v38h-5zM1258 1080h3v38h-3zM1263 1080h4v38h-4zM1269 1080h5v38h-5zM1277 1080h5v38h-5zM1284 1080h2v38h-2zM1295 1080h4v38h-4zM1302 1080h1v38h-1zM1309 1080h4v38h-4zM1346 1080h2v38h-2zM1350 1080h3v38h-3zM1356 1080h3v38h-3zM1366 1080h3v38h-3zM1408 1080h3v38h-3zM1413 1080h2v38h-2zM1423 1080h2v38h-2zM1448 1080h3v38h-3zM1453 1080h3v38h-3zM1458 1080h3v38h-3zM441 1120h59v38h-59zM502 1120h2v38h-2zM506 1120h1v38h-1zM509 1120h1v38h-1zM515 1120h45v38h-45zM562 1120h7v38h-7zM571 1120h8v38h-8zM581 1120h11v38h-11zM594 1120h2v38h-2zM598 1120h2v38h-2zM602 1120h2v38h-2zM606 1120h3v38h-3zM613 1120h8v38h-8zM626 1120h1v38h-1zM632 1120h2v38h-2zM690 1120h12v38h-12zM703 1120h2v38h-2zM1316 1120h7v38h-7zM1325 1120h4v38h-4zM1331 1120h13v38h-13zM1627 1120h4v38h-4zM1632 1120h4v38h-4zM1638 1120h2v38h-2zM2062 1120h26v38h-26zM2090 1120h17v38h-17zM2109 1120h11v38h-11zM2122 1120h8v38h-8zM2132 1120h6v38h-6zM2140 1120h1v38h-1zM2143 1120h11v38h-11zM2156 1120h34v38h-34zM2192 1120h7v38h-7zM2202 1120h1v38h-1zM2205 1120h1v38h-1zM2209 1120h5v38h-5zM2217 1120h2v38h-2zM2221 1120h3v38h-3zM2237 1120h12v38h-12zM2251 1120h6v38h-6zM2259 1120h2v38h-2zM2272 1120h273v38h-273zM2547 1120h5v38h-5zM2554 1120h4v38h-4zM2560 1120h30v38h-30zM2592 1120h8v38h-8zM2601 1120h2v38h-2zM2608 1120h2v38h-2zM2612 1120h4v38h-4zM2618 1120h21v38h-21zM2641 1120h17v38h-17zM2660 1120h8v38h-8zM2669 1120h6v38h-6zM2678 1120h4v38h-4zM2685 1120h7v38h-7zM2694 1120h24v38h-24zM2720 1120h3v38h-3zM2726 1120h15v38h-15zM2745 1120h18v38h-18zM2765 1120h8v38h-8zM2775 1120h11v38h-11zM2787 1120h9v38h-9zM2798 1120h9v38h-9zM2814 1120h25v38h-25zM2854 1120h11v38h-11zM2867 1120h2v38h-2zM2871 1120h2v38h-2zM2874 1120h2v38h-2zM1560 1120h3v38h-3zM1565 1120h3v38h-3zM1570 1120h3v38h-3zM1584 1120h3v38h-3zM1589 1120h2v38h-2zM1593 1120h2v38h-2zM1606 1120h2v38h-2zM1611 1120h3v38h-3zM1616 1120h2v38h-2zM1472 1120h3v38h-3zM1490 1120h3v38h-3zM1495 1120h4v38h-4zM1515 1120h2v38h-2zM1546 1120h4v38h-4zM786 1120h3v38h-3zM791 1120h4v38h-4zM797 1120h5v38h-5zM804 1120h3v38h-3zM828 1120h5v38h-5zM835 1120h4v38h-4zM841 1120h4v38h-4zM847 1120h2v38h-2zM852 1120h5v38h-5zM859 1120h5v38h-5zM866 1120h2v38h-2zM870 1120h2v38h-2zM874 1120h2v38h-2zM880 1120h3v38h-3zM891 1120h2v38h-2zM914 1120h2v38h-2zM918 1120h2v38h-2zM928 1120h4v38h-4zM934 1120h1v38h-1zM941 1120h4v38h-4zM947 1120h3v38h-3zM952 1120h2v38h-2zM956 1120h2v38h-2zM961 1120h5v38h-5zM968 1120h5v38h-5zM975 1120h2v38h-2zM990 1120h4v38h-4zM996 1120h3v38h-3zM1001 1120h5v38h-5zM1008 1120h3v38h-3zM1013 1120h3v38h-3zM1018 1120h5v38h-5zM1025 1120h4v38h-4zM1046 1120h4v38h-4zM1056 1120h4v38h-4zM1066 1120h2v38h-2zM1071 1120h4v38h-4zM1077 1120h2v38h-2zM1088 1120h5v38h-5zM1095 1120h2v38h-2zM1100 1120h5v38h-5zM1108 1120h4v38h-4zM1114 1120h2v38h-2zM1118 1120h3v38h-3zM1123 1120h6v38h-6zM1132 1120h6v38h-6zM1144 1120h2v38h-2zM1148 1120h4v38h-4zM1154 1120h5v38h-5zM1161 1120h2v38h-2zM1165 1120h2v38h-2zM1169 1120h6v38h-6zM1177 1120h6v38h-6zM1191 1120h3v38h-3zM1196 1120h6v38h-6zM1204 1120h5v38h-5zM1211 1120h6v38h-6zM1224 1120h3v38h-3zM1230 1120h2v38h-2zM1235 1120h3v38h-3zM1240 1120h2v38h-2zM1250 1120h5v38h-5zM1258 1120h3v38h-3zM1263 1120h4v38h-4zM1269 1120h5v38h-5zM1277 1120h5v38h-5zM1284 1120h2v38h-2zM1288 1120h5v38h-5zM1295 1120h4v38h-4zM1302 1120h1v38h-1zM1309 1120h4v38h-4zM1346 1120h2v38h-2zM1350 1120h3v38h-3zM1356 1120h3v38h-3zM1366 1120h3v38h-3zM1408 1120h3v38h-3zM1413 1120h2v38h-2zM1423 1120h2v38h-2zM1453 1120h3v38h-3zM1458 1120h3v38h-3zM441 1160h47v38h-47zM490 1160h4v38h-4zM496 1160h1v38h-1zM499 1160h1v38h-1zM502 1160h5v38h-5zM509 1160h1v38h-1zM515 1160h45v38h-45zM562 1160h7v38h-7zM571 1160h8v38h-8zM581 1160h11v38h-11zM594 1160h2v38h-2zM598 1160h2v38h-2zM602 1160h2v38h-2zM606 1160h3v38h-3zM613 1160h8v38h-8zM626 1160h1v38h-1zM632 1160h2v38h-2zM690 1160h12v38h-12zM1316 1160h7v38h-7zM1325 1160h4v38h-4zM1331 1160h13v38h-13zM1627 1160h4v38h-4zM1632 1160h4v38h-4zM1638 1160h2v38h-2zM2109 1160h11v38h-11zM2122 1160h8v38h-8zM2132 1160h6v38h-6zM2140 1160h1v38h-1zM2143 1160h11v38h-11zM2156 1160h34v38h-34zM2192 1160h7v38h-7zM2202 1160h1v38h-1zM2209 1160h5v38h-5zM2217 1160h2v38h-2zM2221 1160h3v38h-3zM2237 1160h12v38h-12zM2251 1160h6v38h-6zM2259 1160h2v38h-2zM2272 1160h273v38h-273zM2547 1160h5v38h-5zM2554 1160h4v38h-4zM2560 1160h30v38h-30zM2592 1160h8v38h-8zM2601 1160h2v38h-2zM2608 1160h2v38h-2zM2612 1160h4v38h-4zM2618 1160h21v38h-21zM2641 1160h17v38h-17zM2660 1160h8v38h-8zM2669 1160h6v38h-6zM2678 1160h4v38h-4zM2685 1160h7v38h-7zM2694 1160h24v38h-24zM2720 1160h3v38h-3zM2726 1160h15v38h-15zM2745 1160h18v38h-18zM2765 1160h8v38h-8zM2775 1160h11v38h-11zM2787 1160h9v38h-9zM2798 1160h9v38h-9zM2814 1160h25v38h-25zM2854 1160h11v38h-11zM2867 1160h2v38h-2zM2871 1160h2v38h-2zM2874 1160h2v38h-2zM1560 1160h3v38h-3zM1565 1160h3v38h-3zM1570 1160h3v38h-3zM1584 1160h3v38h-3zM1593 1160h2v38h-2zM1606 1160h2v38h-2zM1611 1160h3v38h-3zM1616 1160h2v38h-2zM1472 1160h3v38h-3zM1486 1160h2v38h-2zM1490 1160h3v38h-3zM1546 1160h4v38h-4zM786 1160h3v38h-3zM791 1160h4v38h-4zM797 1160h5v38h-5zM804 1160h3v38h-3zM809 1160h5v38h-5zM828 1160h5v38h-5zM835 1160h4v38h-4zM841 1160h4v38h-4zM847 1160h2v38h-2zM852 1160h5v38h-5zM866 1160h2v38h-2zM870 1160h2v38h-2zM874 1160h2v38h-2zM880 1160h3v38h-3zM891 1160h2v38h-2zM918 1160h2v38h-2zM928 1160h4v38h-4zM934 1160h1v38h-1zM941 1160h4v38h-4zM947 1160h3v38h-3zM952 1160h2v38h-2zM956 1160h2v38h-2zM961 1160h5v38h-5zM968 1160h5v38h-5zM975 1160h2v38h-2zM990 1160h4v38h-4zM996 1160h3v38h-3zM1001 1160h5v38h-5zM1008 1160h3v38h-3zM1013 1160h3v38h-3zM1018 1160h5v38h-5zM1025 1160h4v38h-4zM1046 1160h4v38h-4zM1056 1160h4v38h-4zM1066 1160h2v38h-2zM1071 1160h4v38h-4zM1077 1160h2v38h-2zM1088 1160h5v38h-5zM1095 1160h2v38h-2zM1100 1160h5v38h-5zM1108 1160h4v38h-4zM1114 1160h2v38h-2zM1118 1160h3v38h-3zM1132 1160h6v38h-6zM1140 1160h2v38h-2zM1144 1160h2v38h-2zM1148 1160h4v38h-4zM1154 1160h5v38h-5zM1161 1160h2v38h-2zM1165 1160h2v38h-2zM1169 1160h6v38h-6zM1177 1160h6v38h-6zM1196 1160h6v38h-6zM1204 1160h5v38h-5zM1211 1160h6v38h-6zM1224 1160h3v38h-3zM1230 1160h2v38h-2zM1235 1160h3v38h-3zM1240 1160h2v38h-2zM1250 1160h5v38h-5zM1258 1160h3v38h-3zM1263 1160h4v38h-4zM1269 1160h5v38h-5zM1277 1160h5v38h-5zM1284 1160h2v38h-2zM1288 1160h5v38h-5zM1295 1160h4v38h-4zM1302 1160h1v38h-1zM1309 1160h4v38h-4zM1346 1160h2v38h-2zM1350 1160h3v38h-3zM1356 1160h3v38h-3zM1366 1160h3v38h-3zM1408 1160h3v38h-3zM1413 1160h2v38h-2zM1423 1160h2v38h-2zM1453 1160h3v38h-3zM1458 1160h3v38h-3zM441 1200h47v38h-47zM490 1200h4v38h-4zM496 1200h1v38h-1zM499 1200h1v38h-1zM502 1200h5v38h-5zM509 1200h1v38h-1zM515 1200h31v38h-31zM581 1200h11v38h-11zM594 1200h2v38h-2zM598 1200h2v38h-2zM602 1200h2v38h-2zM606 1200h3v38h-3zM613 1200h8v38h-8zM623 1200h1v38h-1zM626 1200h1v38h-1zM632 1200h2v38h-2zM1316 1200h7v38h-7zM1325 1200h4v38h-4zM1331 1200h5v38h-5zM1627 1200h4v38h-4zM1632 1200h4v38h-4zM1638 1200h2v38h-2zM2062 1200h26v38h-26zM2090 1200h17v38h-17zM2109 1200h11v38h-11zM2122 1200h8v38h-8zM2132 1200h6v38h-6zM2140 1200h1v38h-1zM2143 1200h11v38h-11zM2156 1200h34v38h-34zM2192 1200h7v38h-7zM2202 1200h1v38h-1zM2205 1200h1v38h-1zM2209 1200h5v38h-5zM2217 1200h2v38h-2zM2221 1200h3v38h-3zM2237 1200h12v38h-12zM2251 1200h6v38h-6zM2259 1200h2v38h-2zM2547 1200h5v38h-5zM2608 1200h8v38h-8zM2669 1200h6v38h-6zM2685 1200h7v38h-7zM2694 1200h24v38h-24zM2726 1200h15v38h-15zM2765 1200h8v38h-8zM2775 1200h11v38h-11zM2787 1200h9v38h-9zM2798 1200h9v38h-9zM2854 1200h6v38h-6zM2863 1200h2v38h-2zM2867 1200h2v38h-2zM2874 1200h2v38h-2zM1560 1200h3v38h-3zM1565 1200h3v38h-3zM1570 1200h3v38h-3zM1584 1200h3v38h-3zM1589 1200h2v38h-2zM1593 1200h2v38h-2zM1606 1200h2v38h-2zM1611 1200h3v38h-3zM1472 1200h3v38h-3zM1486 1200h2v38h-2zM1490 1200h3v38h-3zM1515 1200h2v38h-2zM1546 1200h4v38h-4zM786 1200h3v38h-3zM791 1200h4v38h-4zM797 1200h5v38h-5zM804 1200h3v38h-3zM809 1200h5v38h-5zM828 1200h5v38h-5zM835 1200h4v38h-4zM841 1200h4v38h-4zM847 1200h2v38h-2zM852 1200h5v38h-5zM859 1200h5v38h-5zM866 1200h2v38h-2zM870 1200h2v38h-2zM874 1200h2v38h-2zM880 1200h3v38h-3zM891 1200h2v38h-2zM918 1200h2v38h-2zM928 1200h4v38h-4zM934 1200h1v38h-1zM941 1200h4v38h-4zM947 1200h3v38h-3zM952 1200h2v38h-2zM956 1200h2v38h-2zM961 1200h5v38h-5zM968 1200h5v38h-5zM975 1200h2v38h-2zM990 1200h4v38h-4zM996 1200h3v38h-3zM1001 1200h5v38h-5zM1008 1200h3v38h-3zM1013 1200h3v38h-3zM1018 1200h5v38h-5zM1025 1200h4v38h-4zM1046 1200h4v38h-4zM1056 1200h4v38h-4zM1066 1200h2v38h-2zM1071 1200h4v38h-4zM1088 1200h5v38h-5zM1095 1200h2v38h-2zM1100 1200h5v38h-5zM1108 1200h4v38h-4zM1114 1200h2v38h-2zM1118 1200h3v38h-3zM1123 1200h6v38h-6zM1132 1200h6v38h-6zM1140 1200h2v38h-2zM1144 1200h2v38h-2zM1154 1200h5v38h-5zM1161 1200h2v38h-2zM1165 1200h2v38h-2zM1169 1200h6v38h-6zM1177 1200h6v38h-6zM1191 1200h3v38h-3zM1196 1200h6v38h-6zM1204 1200h5v38h-5zM1211 1200h6v38h-6zM1230 1200h2v38h-2zM1235 1200h3v38h-3zM1240 1200h2v38h-2zM1250 1200h5v38h-5zM1258 1200h3v38h-3zM1263 1200h4v38h-4zM1269 1200h5v38h-5zM1277 1200h5v38h-5zM1284 1200h2v38h-2zM1288 1200h5v38h-5zM1295 1200h4v38h-4zM1302 1200h1v38h-1zM1309 1200h4v38h-4zM1346 1200h2v38h-2zM1350 1200h3v38h-3zM1356 1200h3v38h-3zM1366 1200h3v38h-3zM1408 1200h3v38h-3zM1413 1200h2v38h-2zM1453 1200h3v38h-3zM1458 1200h3v38h-3zM441 1240h47v38h-47zM490 1240h4v38h-4zM496 1240h1v38h-1zM499 1240h1v38h-1zM502 1240h5v38h-5zM512 1240h1v38h-1zM515 1240h31v38h-31zM548 1240h4v38h-4zM554 1240h2v38h-2zM562 1240h4v38h-4zM568 1240h1v38h-1zM571 1240h8v38h-8zM581 1240h11v38h-11zM594 1240h2v38h-2zM598 1240h2v38h-2zM602 1240h2v38h-2zM606 1240h3v38h-3zM613 1240h8v38h-8zM623 1240h1v38h-1zM626 1240h1v38h-1zM633 1240h1v38h-1zM1316 1240h7v38h-7zM1331 1240h5v38h-5zM1627 1240h4v38h-4zM1632 1240h4v38h-4zM1638 1240h2v38h-2zM2062 1240h26v38h-26zM2090 1240h17v38h-17zM2132 1240h6v38h-6zM2143 1240h11v38h-11zM2156 1240h30v38h-30zM2188 1240h2v38h-2zM2192 1240h7v38h-7zM2217 1240h2v38h-2zM2221 1240h3v38h-3zM2237 1240h12v38h-12zM2251 1240h6v38h-6zM2259 1240h2v38h-2zM2272 1240h268v38h-268zM2547 1240h5v38h-5zM2554 1240h4v38h-4zM2560 1240h30v38h-30zM2592 1240h8v38h-8zM2601 1240h2v38h-2zM2618 1240h18v38h-18zM2641 1240h10v38h-10zM2653 1240h5v38h-5zM2660 1240h8v38h-8zM2669 1240h6v38h-6zM2678 1240h4v38h-4zM2685 1240h7v38h-7zM2694 1240h24v38h-24zM2726 1240h12v38h-12zM2745 1240h14v38h-14zM2772 1240h2v38h-2zM2776 1240h2v38h-2zM2780 1240h2v38h-2zM2785 1240h2v38h-2zM2790 1240h2v38h-2zM2794 1240h2v38h-2zM2814 1240h15v38h-15zM2832 1240h5v38h-5zM2854 1240h6v38h-6zM2863 1240h2v38h-2zM2867 1240h2v38h-2zM2874 1240h2v38h-2zM1560 1240h3v38h-3zM1565 1240h3v38h-3zM1570 1240h3v38h-3zM1584 1240h3v38h-3zM1589 1240h2v38h-2zM1593 1240h2v38h-2zM1606 1240h2v38h-2zM1611 1240h3v38h-3zM1472 1240h3v38h-3zM1486 1240h2v38h-2zM1490 1240h3v38h-3zM1515 1240h2v38h-2zM1546 1240h4v38h-4zM791 1240h4v38h-4zM804 1240h3v38h-3zM809 1240h5v38h-5zM828 1240h5v38h-5zM841 1240h4v38h-4zM847 1240h2v38h-2zM852 1240h5v38h-5zM859 1240h5v38h-5zM870 1240h2v38h-2zM874 1240h2v38h-2zM880 1240h3v38h-3zM891 1240h2v38h-2zM918 1240h2v38h-2zM928 1240h4v38h-4zM941 1240h4v38h-4zM947 1240h3v38h-3zM952 1240h2v38h-2zM956 1240h2v38h-2zM961 1240h5v38h-5zM968 1240h5v38h-5zM975 1240h2v38h-2zM990 1240h4v38h-4zM996 1240h3v38h-3zM1001 1240h5v38h-5zM1008 1240h3v38h-3zM1013 1240h3v38h-3zM1018 1240h5v38h-5zM1046 1240h4v38h-4zM1056 1240h4v38h-4zM1066 1240h2v38h-2zM1071 1240h4v38h-4zM1088 1240h5v38h-5zM1100 1240h5v38h-5zM1108 1240h4v38h-4zM1114 1240h2v38h-2zM1118 1240h3v38h-3zM1132 1240h6v38h-6zM1140 1240h2v38h-2zM1148 1240h4v38h-4zM1154 1240h5v38h-5zM1161 1240h2v38h-2zM1165 1240h2v38h-2zM1169 1240h6v38h-6zM1177 1240h6v38h-6zM1196 1240h6v38h-6zM1204 1240h5v38h-5zM1211 1240h6v38h-6zM1235 1240h3v38h-3zM1240 1240h2v38h-2zM1258 1240h3v38h-3zM1263 1240h4v38h-4zM1269 1240h5v38h-5zM1295 1240h4v38h-4zM1302 1240h1v38h-1zM1309 1240h4v38h-4zM1346 1240h2v38h-2zM1350 1240h3v38h-3zM1366 1240h3v38h-3zM1408 1240h3v38h-3zM1413 1240h2v38h-2zM1453 1240h3v38h-3zM441 1280h40v38h-40zM483 1280h5v38h-5zM490 1280h1v38h-1zM496 1280h1v38h-1zM499 1280h1v38h-1zM502 1280h2v38h-2zM506 1280h1v38h-1zM512 1280h1v38h-1zM515 1280h31v38h-31zM548 1280h4v38h-4zM554 1280h2v38h-2zM562 1280h4v38h-4zM568 1280h1v38h-1zM571 1280h8v38h-8zM581 1280h11v38h-11zM594 1280h2v38h-2zM598 1280h2v38h-2zM602 1280h2v38h-2zM606 1280h3v38h-3zM613 1280h8v38h-8zM623 1280h1v38h-1zM626 1280h1v38h-1zM633 1280h1v38h-1zM1316 1280h7v38h-7zM1331 1280h5v38h-5zM1627 1280h4v38h-4zM1632 1280h4v38h-4zM1638 1280h2v38h-2zM2062 1280h26v38h-26zM2090 1280h17v38h-17zM2109 1280h3v38h-3zM2115 1280h1v38h-1zM2118 1280h2v38h-2zM2122 1280h8v38h-8zM2132 1280h6v38h-6zM2143 1280h11v38h-11zM2156 1280h30v38h-30zM2188 1280h2v38h-2zM2192 1280h7v38h-7zM2209 1280h5v38h-5zM2221 1280h3v38h-3zM2237 1280h5v38h-5zM2244 1280h5v38h-5zM2251 1280h6v38h-6zM2259 1280h2v38h-2zM2272 1280h268v38h-268zM2547 1280h5v38h-5zM2554 1280h4v38h-4zM2560 1280h30v38h-30zM2592 1280h8v38h-8zM2601 1280h2v38h-2zM2618 1280h18v38h-18zM2641 1280h10v38h-10zM2653 1280h5v38h-5zM2660 1280h8v38h-8zM2669 1280h6v38h-6zM2678 1280h4v38h-4zM2685 1280h7v38h-7zM2694 1280h24v38h-24zM2726 1280h12v38h-12zM2745 1280h14v38h-14zM2772 1280h2v38h-2zM2776 1280h2v38h-2zM2780 1280h2v38h-2zM2785 1280h2v38h-2zM2790 1280h2v38h-2zM2794 1280h2v38h-2zM2814 1280h15v38h-15zM2832 1280h5v38h-5zM2854 1280h6v38h-6zM2863 1280h2v38h-2zM2867 1280h2v38h-2zM2874 1280h2v38h-2zM1560 1280h3v38h-3zM1565 1280h3v38h-3zM1570 1280h3v38h-3zM1584 1280h3v38h-3zM1589 1280h2v38h-2zM1606 1280h2v38h-2zM1611 1280h3v38h-3zM1472 1280h3v38h-3zM1486 1280h2v38h-2zM1490 1280h3v38h-3zM1515 1280h2v38h-2zM1546 1280h4v38h-4zM786 1280h3v38h-3zM791 1280h4v38h-4zM809 1280h5v38h-5zM835 1280h4v38h-4zM841 1280h4v38h-4zM847 1280h2v38h-2zM852 1280h5v38h-5zM866 1280h2v38h-2zM874 1280h2v38h-2zM952 1280h2v38h-2zM956 1280h2v38h-2zM961 1280h5v38h-5zM968 1280h5v38h-5zM1008 1280h3v38h-3zM1018 1280h5v38h-5zM1046 1280h4v38h-4zM1066 1280h2v38h-2zM1071 1280h4v38h-4zM1095 1280h2v38h-2zM1100 1280h5v38h-5zM1108 1280h4v38h-4zM1114 1280h2v38h-2zM1123 1280h6v38h-6zM1132 1280h6v38h-6zM1144 1280h2v38h-2zM1148 1280h4v38h-4zM1154 1280h5v38h-5zM1161 1280h2v38h-2zM1165 1280h2v38h-2zM1169 1280h6v38h-6zM1177 1280h6v38h-6zM1196 1280h6v38h-6zM1204 1280h5v38h-5zM1211 1280h6v38h-6zM1235 1280h3v38h-3zM1240 1280h2v38h-2zM1258 1280h3v38h-3zM1269 1280h5v38h-5zM1295 1280h4v38h-4zM1302 1280h1v38h-1zM1309 1280h4v38h-4zM1350 1280h3v38h-3zM1366 1280h3v38h-3zM1408 1280h3v38h-3zM1453 1280h3v38h-3zM1458 1280h3v38h-3zM441 1320h24v38h-24zM467 1320h11v38h-11zM480 1320h1v38h-1zM483 1320h5v38h-5zM490 1320h1v38h-1zM496 1320h1v38h-1zM499 1320h1v38h-1zM502 1320h2v38h-2zM506 1320h1v38h-1zM512 1320h1v38h-1zM515 1320h31v38h-31zM548 1320h4v38h-4zM554 1320h2v38h-2zM562 1320h4v38h-4zM568 1320h1v38h-1zM571 1320h8v38h-8zM581 1320h11v38h-11zM594 1320h2v38h-2zM598 1320h2v38h-2zM602 1320h2v38h-2zM606 1320h3v38h-3zM613 1320h8v38h-8zM623 1320h1v38h-1zM626 1320h1v38h-1zM1316 1320h7v38h-7zM1325 1320h4v38h-4zM1627 1320h4v38h-4zM1632 1320h4v38h-4zM1638 1320h2v38h-2zM2062 1320h26v38h-26zM2090 1320h17v38h-17zM2109 1320h3v38h-3zM2115 1320h1v38h-1zM2118 1320h2v38h-2zM2122 1320h8v38h-8zM2132 1320h6v38h-6zM2143 1320h11v38h-11zM2156 1320h30v38h-30zM2188 1320h2v38h-2zM2192 1320h7v38h-7zM2209 1320h5v38h-5zM2221 1320h3v38h-3zM2237 1320h5v38h-5zM2244 1320h5v38h-5zM2251 1320h6v38h-6zM2259 1320h2v38h-2zM2272 1320h268v38h-268zM2547 1320h5v38h-5zM2554 1320h4v38h-4zM2560 1320h30v38h-30zM2592 1320h8v38h-8zM2601 1320h2v38h-2zM2618 1320h18v38h-18zM2641 1320h10v38h-10zM2653 1320h5v38h-5zM2660 1320h8v38h-8zM2669 1320h6v38h-6zM2678 1320h4v38h-4zM2685 1320h7v38h-7zM2694 1320h24v38h-24zM2726 1320h12v38h-12zM2745 1320h14v38h-14zM2772 1320h2v38h-2zM2776 1320h2v38h-2zM2780 1320h2v38h-2zM2785 1320h2v38h-2zM2790 1320h2v38h-2zM2794 1320h2v38h-2zM2814 1320h15v38h-15zM2832 1320h5v38h-5zM2854 1320h6v38h-6zM2863 1320h2v38h-2zM2867 1320h2v38h-2zM2874 1320h2v38h-2zM1560 1320h3v38h-3zM1565 1320h3v38h-3zM1584 1320h3v38h-3zM1589 1320h2v38h-2zM1606 1320h2v38h-2zM1611 1320h3v38h-3zM1472 1320h3v38h-3zM1490 1320h3v38h-3zM1515 1320h2v38h-2zM1546 1320h4v38h-4zM809 1320h5v38h-5zM841 1320h4v38h-4zM847 1320h2v38h-2zM852 1320h5v38h-5zM874 1320h2v38h-2zM941 1320h4v38h-4zM952 1320h2v38h-2zM956 1320h2v38h-2zM961 1320h5v38h-5zM968 1320h5v38h-5zM1018 1320h5v38h-5zM1046 1320h4v38h-4zM1071 1320h4v38h-4zM1095 1320h2v38h-2zM1108 1320h4v38h-4zM1114 1320h2v38h-2zM1118 1320h3v38h-3zM1123 1320h6v38h-6zM1132 1320h6v38h-6zM1144 1320h2v38h-2zM1148 1320h4v38h-4zM1154 1320h5v38h-5zM1161 1320h2v38h-2zM1165 1320h2v38h-2zM1169 1320h6v38h-6zM1177 1320h6v38h-6zM1196 1320h6v38h-6zM1235 1320h3v38h-3zM1240 1320h2v38h-2zM1258 1320h3v38h-3zM1263 1320h4v38h-4zM1269 1320h5v38h-5zM1295 1320h4v38h-4zM1302 1320h1v38h-1zM1309 1320h4v38h-4zM1350 1320h3v38h-3zM1366 1320h3v38h-3zM1408 1320h3v38h-3zM1413 1320h2v38h-2zM1453 1320h3v38h-3zM1458 1320h3v38h-3zM441 1360h11v38h-11zM454 1360h8v38h-8zM464 1360h1v38h-1zM467 1360h4v38h-4zM473 1360h2v38h-2zM477 1360h1v38h-1zM480 1360h1v38h-1zM483 1360h5v38h-5zM490 1360h1v38h-1zM496 1360h1v38h-1zM499 1360h1v38h-1zM502 1360h2v38h-2zM512 1360h1v38h-1zM515 1360h31v38h-31zM548 1360h4v38h-4zM554 1360h2v38h-2zM562 1360h4v38h-4zM568 1360h1v38h-1zM571 1360h8v38h-8zM581 1360h11v38h-11zM594 1360h2v38h-2zM598 1360h2v38h-2zM602 1360h2v38h-2zM606 1360h3v38h-3zM613 1360h8v38h-8zM626 1360h1v38h-1zM1316 1360h7v38h-7zM1627 1360h4v38h-4zM1632 1360h4v38h-4zM1638 1360h2v38h-2zM2062 1360h26v38h-26zM2090 1360h17v38h-17zM2109 1360h3v38h-3zM2115 1360h1v38h-1zM2118 1360h2v38h-2zM2122 1360h8v38h-8zM2132 1360h6v38h-6zM2143 1360h11v38h-11zM2156 1360h30v38h-30zM2188 1360h2v38h-2zM2192 1360h7v38h-7zM2209 1360h5v38h-5zM2221 1360h3v38h-3zM2237 1360h5v38h-5zM2244 1360h5v38h-5zM2251 1360h6v38h-6zM2259 1360h2v38h-2zM2272 1360h268v38h-268zM2547 1360h5v38h-5zM2554 1360h4v38h-4zM2560 1360h30v38h-30zM2592 1360h8v38h-8zM2601 1360h2v38h-2zM2618 1360h18v38h-18zM2641 1360h10v38h-10zM2653 1360h5v38h-5zM2660 1360h8v38h-8zM2669 1360h6v38h-6zM2678 1360h4v38h-4zM2685 1360h7v38h-7zM2694 1360h24v38h-24zM2726 1360h12v38h-12zM2745 1360h14v38h-14zM2772 1360h2v38h-2zM2776 1360h2v38h-2zM2780 1360h2v38h-2zM2785 1360h2v38h-2zM2790 1360h2v38h-2zM2794 1360h2v38h-2zM2814 1360h15v38h-15zM2832 1360h5v38h-5zM2854 1360h6v38h-6zM2863 1360h2v38h-2zM2867 1360h2v38h-2zM2874 1360h2v38h-2zM1560 1360h3v38h-3zM1565 1360h3v38h-3zM1584 1360h3v38h-3zM1589 1360h2v38h-2zM1611 1360h3v38h-3zM1472 1360h3v38h-3zM1490 1360h3v38h-3zM1515 1360h2v38h-2zM1546 1360h4v38h-4zM809 1360h5v38h-5zM841 1360h4v38h-4zM847 1360h2v38h-2zM852 1360h5v38h-5zM874 1360h2v38h-2zM941 1360h4v38h-4zM952 1360h2v38h-2zM956 1360h2v38h-2zM961 1360h5v38h-5zM968 1360h5v38h-5zM1018 1360h5v38h-5zM1046 1360h4v38h-4zM1071 1360h4v38h-4zM1095 1360h2v38h-2zM1100 1360h5v38h-5zM1108 1360h4v38h-4zM1114 1360h2v38h-2zM1118 1360h3v38h-3zM1123 1360h6v38h-6zM1132 1360h6v38h-6zM1148 1360h4v38h-4zM1154 1360h5v38h-5zM1161 1360h2v38h-2zM1165 1360h2v38h-2zM1169 1360h6v38h-6zM1177 1360h6v38h-6zM1196 1360h6v38h-6zM1204 1360h5v38h-5zM1211 1360h6v38h-6zM1235 1360h3v38h-3zM1240 1360h2v38h-2zM1263 1360h4v38h-4zM1269 1360h5v38h-5zM1295 1360h4v38h-4zM1302 1360h1v38h-1zM1309 1360h4v38h-4zM1350 1360h3v38h-3zM1366 1360h3v38h-3zM1408 1360h3v38h-3zM1413 1360h2v38h-2zM1458 1360h3v38h-3zM441 1400h11v38h-11zM454 1400h8v38h-8zM464 1400h1v38h-1zM467 1400h4v38h-4zM473 1400h2v38h-2zM477 1400h1v38h-1zM480 1400h1v38h-1zM483 1400h5v38h-5zM490 1400h1v38h-1zM496 1400h1v38h-1zM499 1400h1v38h-1zM512 1400h1v38h-1zM515 1400h31v38h-31zM548 1400h4v38h-4zM554 1400h2v38h-2zM568 1400h1v38h-1zM578 1400h1v38h-1zM581 1400h11v38h-11zM594 1400h2v38h-2zM598 1400h2v38h-2zM602 1400h2v38h-2zM606 1400h3v38h-3zM613 1400h8v38h-8zM626 1400h1v38h-1zM1316 1400h7v38h-7zM1632 1400h4v38h-4zM1638 1400h2v38h-2zM2062 1400h26v38h-26zM2090 1400h17v38h-17zM2109 1400h3v38h-3zM2115 1400h1v38h-1zM2118 1400h2v38h-2zM2122 1400h8v38h-8zM2132 1400h6v38h-6zM2143 1400h11v38h-11zM2156 1400h30v38h-30zM2188 1400h2v38h-2zM2196 1400h1v38h-1zM2209 1400h1v38h-1zM2237 1400h5v38h-5zM2244 1400h5v38h-5zM2251 1400h6v38h-6zM2259 1400h2v38h-2zM2694 1400h24v38h-24zM2726 1400h12v38h-12zM2772 1400h2v38h-2zM2776 1400h2v38h-2zM2780 1400h2v38h-2zM2785 1400h2v38h-2zM2790 1400h2v38h-2zM2854 1400h6v38h-6zM2867 1400h2v38h-2zM2874 1400h2v38h-2zM1560 1400h3v38h-3zM1565 1400h3v38h-3zM1584 1400h3v38h-3zM1589 1400h2v38h-2zM1611 1400h3v38h-3zM1472 1400h3v38h-3zM1490 1400h3v38h-3zM1546 1400h4v38h-4zM841 1400h4v38h-4zM847 1400h2v38h-2zM874 1400h2v38h-2zM941 1400h4v38h-4zM952 1400h2v38h-2zM956 1400h2v38h-2zM961 1400h5v38h-5zM968 1400h5v38h-5zM1018 1400h5v38h-5zM1046 1400h4v38h-4zM1071 1400h4v38h-4zM1095 1400h2v38h-2zM1100 1400h5v38h-5zM1108 1400h4v38h-4zM1118 1400h3v38h-3zM1123 1400h6v38h-6zM1132 1400h6v38h-6zM1148 1400h4v38h-4zM1154 1400h5v38h-5zM1165 1400h2v38h-2zM1169 1400h6v38h-6zM1177 1400h6v38h-6zM1196 1400h6v38h-6zM1235 1400h3v38h-3zM1240 1400h2v38h-2zM1258 1400h3v38h-3zM1263 1400h4v38h-4zM1269 1400h5v38h-5zM1295 1400h4v38h-4zM1302 1400h1v38h-1zM1309 1400h4v38h-4zM1350 1400h3v38h-3zM1366 1400h3v38h-3zM1408 1400h3v38h-3zM1413 1400h2v38h-2zM1453 1400h3v38h-3zM1458 1400h3v38h-3zM441 1440h4v38h-4zM454 1440h4v38h-4zM467 1440h4v38h-4zM477 1440h1v38h-1zM483 1440h5v38h-5zM490 1440h1v38h-1zM496 1440h1v38h-1zM512 1440h1v38h-1zM515 1440h31v38h-31zM548 1440h4v38h-4zM562 1440h4v38h-4zM571 1440h2v38h-2zM581 1440h11v38h-11zM594 1440h2v38h-2zM598 1440h2v38h-2zM602 1440h2v38h-2zM613 1440h8v38h-8zM626 1440h1v38h-1zM1316 1440h7v38h-7zM1638 1440h2v38h-2zM2062 1440h22v38h-22zM2086 1440h2v38h-2zM2090 1440h5v38h-5zM2097 1440h2v38h-2zM2101 1440h2v38h-2zM2115 1440h1v38h-1zM2122 1440h8v38h-8zM2132 1440h6v38h-6zM2143 1440h3v38h-3zM2148 1440h6v38h-6zM2156 1440h30v38h-30zM2188 1440h2v38h-2zM2196 1440h1v38h-1zM2237 1440h5v38h-5zM2244 1440h5v38h-5zM2251 1440h6v38h-6zM2259 1440h2v38h-2zM2272 1440h250v38h-250zM2526 1440h2v38h-2zM2532 1440h2v38h-2zM2547 1440h5v38h-5zM2560 1440h30v38h-30zM2594 1440h2v38h-2zM2600 1440h2v38h-2zM2618 1440h18v38h-18zM2641 1440h2v38h-2zM2646 1440h2v38h-2zM2652 1440h2v38h-2zM2660 1440h2v38h-2zM2694 1440h18v38h-18zM2716 1440h2v38h-2zM2726 1440h4v38h-4zM2733 1440h2v38h-2zM2745 1440h5v38h-5zM2754 1440h2v38h-2zM2772 1440h2v38h-2zM2780 1440h2v38h-2zM2790 1440h2v38h-2zM2814 1440h4v38h-4zM2822 1440h2v38h-2zM2854 1440h6v38h-6zM2867 1440h2v38h-2zM2874 1440h2v38h-2zM1560 1440h3v38h-3zM1565 1440h3v38h-3zM1584 1440h3v38h-3zM1589 1440h2v38h-2zM1606 1440h2v38h-2zM1611 1440h3v38h-3zM1546 1440h4v38h-4zM2606 1440h4v38h-4zM2669 1440h3v38h-3zM2674 1440h4v38h-4zM2680 1440h2v38h-2zM2761 1440h3v38h-3zM2785 1440h3v38h-3zM2798 1440h3v38h-3zM2803 1440h3v38h-3zM2808 1440h4v38h-4zM2834 1440h2v38h-2zM809 1440h5v38h-5zM841 1440h4v38h-4zM847 1440h2v38h-2zM852 1440h5v38h-5zM874 1440h2v38h-2zM941 1440h4v38h-4zM952 1440h2v38h-2zM956 1440h2v38h-2zM961 1440h5v38h-5zM968 1440h5v38h-5zM1018 1440h5v38h-5zM1071 1440h4v38h-4zM1095 1440h2v38h-2zM1100 1440h5v38h-5zM1108 1440h4v38h-4zM1118 1440h3v38h-3zM1123 1440h6v38h-6zM1132 1440h6v38h-6zM1148 1440h4v38h-4zM1154 1440h5v38h-5zM1161 1440h2v38h-2zM1165 1440h2v38h-2zM1169 1440h6v38h-6zM1177 1440h6v38h-6zM1196 1440h6v38h-6zM1204 1440h5v38h-5zM1211 1440h6v38h-6zM1235 1440h3v38h-3zM1240 1440h2v38h-2zM1258 1440h3v38h-3zM1263 1440h4v38h-4zM1269 1440h5v38h-5zM1295 1440h4v38h-4zM1302 1440h1v38h-1zM1309 1440h4v38h-4zM1350 1440h3v38h-3zM1366 1440h3v38h-3zM1408 1440h3v38h-3zM1413 1440h2v38h-2zM1453 1440h3v38h-3zM1458 1440h3v38h-3z"/><path fill="#cdcdf1" d="M441 360h193v38h-193zM874 360h59v38h-59zM935 360h58v38h-58zM1305 360h24v38h-24zM1331 360h21v38h-21zM1354 360h18v38h-18zM1374 360h13v38h-13zM1389 360h13v38h-13zM1404 360h12v38h-12zM1418 360h11v38h-11zM1443 360h9v38h-9zM1469 360h4v38h-4zM1495 360h4v38h-4zM1501 360h5v38h-5zM1508 360h4v38h-4zM1514 360h4v38h-4zM1520 360h3v38h-3zM1530 360h3v38h-3zM1535 360h3v38h-3zM1540 360h3v38h-3zM1626 360h4v38h-4zM2062 360h199v38h-199zM2263 360h7v38h-7zM2272 360h593v38h-593zM2871 360h2v38h-2zM1545 360h3v38h-3zM1551 360h3v38h-3zM1561 360h2v38h-2zM1570 360h2v38h-2zM1579 360h2v38h-2zM1583 360h2v38h-2zM1587 360h2v38h-2zM1591 360h3v38h-3zM1600 360h2v38h-2zM1608 360h2v38h-2zM1612 360h2v38h-2zM1616 360h3v38h-3zM874 400h59v38h-59zM935 400h58v38h-58zM1331 400h21v38h-21zM1469 400h1v38h-1zM1514 400h4v38h-4zM1530 400h3v38h-3zM1535 400h3v38h-3zM1540 400h3v38h-3zM581 440h30v38h-30zM613 440h11v38h-11zM629 440h1v38h-1zM1331 440h21v38h-21zM1530 440h3v38h-3zM629 480h1v38h-1zM786 480h86v38h-86zM995 480h49v38h-49zM1046 480h40v38h-40zM1088 480h35v38h-35zM1125 480h33v38h-33zM1191 480h28v38h-28zM1221 480h27v38h-27zM1250 480h26v38h-26zM1278 480h25v38h-25zM2871 480h2v38h-2zM1570 480h3v38h-3zM1575 480h3v38h-3zM1584 480h3v38h-3zM629 520h1v38h-1zM786 520h81v38h-81zM995 520h36v38h-36zM1033 520h11v38h-11zM1046 520h34v38h-34zM1082 520h4v38h-4zM1088 520h35v38h-35zM1125 520h30v38h-30zM1191 520h25v38h-25zM1221 520h21v38h-21zM1244 520h4v38h-4zM1250 520h26v38h-26zM1278 520h19v38h-19zM1299 520h4v38h-4zM1331 520h21v38h-21zM1530 520h3v38h-3zM441 560h72v38h-72zM629 560h1v38h-1zM1033 560h11v38h-11zM1082 560h4v38h-4zM1244 560h4v38h-4zM1299 560h4v38h-4zM441 600h69v38h-69zM515 600h64v38h-64zM629 600h1v38h-1zM2062 600h160v38h-160zM2230 600h2v38h-2zM2272 600h580v38h-580zM2871 600h2v38h-2zM629 640h1v38h-1zM1384 640h3v38h-3zM2220 640h2v38h-2zM629 680h1v38h-1zM1384 680h3v38h-3zM2220 680h2v38h-2zM1560 680h3v38h-3zM1606 680h2v38h-2zM1611 680h3v38h-3zM1616 680h2v38h-2zM629 720h1v38h-1zM1384 720h3v38h-3zM1584 720h3v38h-3zM1616 720h2v38h-2zM1490 720h3v38h-3zM515 800h64v38h-64zM2062 800h92v38h-92zM2204 800h11v38h-11zM2272 800h344v38h-344zM2618 800h106v38h-106zM2745 800h64v38h-64zM2814 800h28v38h-28zM2844 800h5v38h-5zM1565 800h3v38h-3zM1570 800h3v38h-3zM2811 840h1v38h-1zM1490 840h3v38h-3zM1535 840h3v38h-3zM1535 880h3v38h-3zM2233 920h3v38h-3zM1606 920h2v38h-2zM1515 920h2v38h-2zM515 1000h64v38h-64zM1331 1000h13v38h-13zM2272 1000h286v38h-286zM2560 1000h43v38h-43zM2608 1000h4v38h-4zM2618 1000h74v38h-74zM2745 1000h28v38h-28zM2775 1000h11v38h-11zM2814 1000h25v38h-25zM1472 1000h3v38h-3zM1495 1000h4v38h-4zM1331 1040h13v38h-13zM2062 1040h79v38h-79zM1560 1040h3v38h-3zM1611 1040h3v38h-3zM901 1040h4v38h-4zM918 1040h2v38h-2zM1148 1040h4v38h-4zM1191 1040h3v38h-3zM1230 1040h2v38h-2zM1235 1040h3v38h-3zM1584 1080h3v38h-3zM1490 1080h3v38h-3zM996 1080h3v38h-3zM1008 1080h3v38h-3zM1288 1080h5v38h-5zM623 1120h1v38h-1zM1486 1120h2v38h-2zM809 1120h5v38h-5zM1140 1120h2v38h-2zM623 1160h1v38h-1zM2062 1160h26v38h-26zM2090 1160h17v38h-17zM1589 1160h2v38h-2zM1515 1160h2v38h-2zM859 1160h5v38h-5zM1123 1160h6v38h-6zM1191 1160h3v38h-3zM548 1200h12v38h-12zM562 1200h7v38h-7zM571 1200h8v38h-8zM2272 1200h273v38h-273zM2554 1200h4v38h-4zM2560 1200h30v38h-30zM2592 1200h8v38h-8zM2618 1200h21v38h-21zM2641 1200h17v38h-17zM2660 1200h8v38h-8zM2678 1200h4v38h-4zM2745 1200h18v38h-18zM2814 1200h25v38h-25zM1148 1200h4v38h-4zM1224 1200h3v38h-3zM1423 1200h2v38h-2zM558 1240h2v38h-2zM1325 1240h4v38h-4zM2109 1240h11v38h-11zM2122 1240h8v38h-8zM2140 1240h1v38h-1zM2209 1240h5v38h-5zM786 1240h3v38h-3zM835 1240h4v38h-4zM866 1240h2v38h-2zM1095 1240h2v38h-2zM1123 1240h6v38h-6zM1144 1240h2v38h-2zM1458 1240h3v38h-3zM1325 1280h4v38h-4zM859 1280h5v38h-5zM941 1280h4v38h-4zM1118 1280h3v38h-3zM1263 1280h4v38h-4zM1413 1280h2v38h-2zM1570 1320h3v38h-3zM1100 1320h5v38h-5zM1204 1320h5v38h-5zM1211 1320h6v38h-6zM506 1360h1v38h-1zM1325 1360h4v38h-4zM1606 1360h2v38h-2zM1258 1360h3v38h-3zM1453 1360h3v38h-3zM502 1400h2v38h-2zM506 1400h1v38h-1zM562 1400h4v38h-4zM571 1400h5v38h-5zM1325 1400h4v38h-4zM2272 1400h266v38h-266zM2547 1400h5v38h-5zM2560 1400h30v38h-30zM2592 1400h8v38h-8zM2618 1400h18v38h-18zM2641 1400h10v38h-10zM2660 1400h4v38h-4zM2685 1400h7v38h-7zM2745 1400h14v38h-14zM2814 1400h11v38h-11zM2832 1400h5v38h-5zM1606 1400h2v38h-2zM809 1400h5v38h-5zM852 1400h5v38h-5zM1161 1400h2v38h-2zM1204 1400h5v38h-5zM1211 1400h6v38h-6zM447 1440h4v38h-4zM464 1440h1v38h-1zM473 1440h2v38h-2zM502 1440h2v38h-2zM554 1440h2v38h-2zM568 1440h1v38h-1zM575 1440h4v38h-4zM1325 1440h4v38h-4zM2109 1440h5v38h-5zM1472 1440h3v38h-3zM1490 1440h3v38h-3zM2613 1440h2v38h-2zM2684 1440h2v38h-2zM2766 1440h2v38h-2zM2794 1440h2v38h-2zM2830 1440h2v38h-2zM2839 1440h3v38h-3zM2844 1440h4v38h-4z"/></g><g font-family="'Liberation Mono', monospace" font-size="21.8" fill="#181a33"><text x="449" y="348">(root)</text><text x="1649" y="348">(root)</text><text x="2280" y="348">(root)</text><text x="449" y="388">proces…ctions</text><text x="644" y="388">runTe…rnal</text><text x="794" y="388">_c…st</text><text x="882" y="388">u…n</text><text x="943" y="388">u…n</text><text x="1003" y="388">_…</text><text x="1054" y="388">…</text><text x="1096" y="388">…</text><text x="1133" y="388">…</text><text x="1168" y="388">…</text><text x="1199" y="388">…</text><text x="1649" y="388">(garbage collector)</text><text x="2070" y="388">proces…ctions</text><text x="2280" y="388">processTicksAndRejections</text><text x="449" y="428">runMicrotasks</text><text x="644" y="428">getAl…Copy</text><text x="794" y="428">ca…Fn</text><text x="882" y="428">u…e</text><text x="943" y="428">p…n</text><text x="1003" y="428">c…</text><text x="1054" y="428">…</text><text x="1096" y="428">…</text><text x="1133" y="428">…</text><text x="1168" y="428">…</text><text x="1199" y="428">…</text><text x="2070" y="428">runMicrotasks</text><text x="2280" y="428">runMicrotasks</text><text x="449" y="468">_c…t</text><text x="523" y="468">j…r</text><text x="589" y="468">…</text><text x="644" y="468">deepC…Copy</text><text x="794" y="468">Pr…ed</text><text x="882" y="468">O…e</text><text x="943" y="468">p…e</text><text x="1003" y="468">P…</text><text x="1054" y="468">…</text><text x="1096" y="468">…</text><text x="1133" y="468">…</text><text x="1199" y="468">…</text><text x="2070" y="468">jestAdapter</text><text x="2280" y="468">jestAdapter</text><text x="449" y="508">ca…n</text><text x="523" y="508">r…e</text><text x="589" y="508">…</text><text x="644" y="508">deepC…ject</text><text x="794" y="508">un…wn</text><text x="882" y="508">e…e</text><text x="943" y="508">m…d</text><text x="1003" y="508">u…</text><text x="1054" y="508">…</text><text x="1096" y="508">…</text><text x="1133" y="508">…</text><text x="1199" y="508">…</text><text x="2070" y="508">requi…odule</text><text x="2280" y="508">requireModule</text><text x="449" y="548">Pr…d</text><text x="523" y="548">_…e</text><text x="589" y="548">…</text><text x="644" y="548">unknown</text><text x="794" y="548">re…er</text><text x="882" y="548">s…r</text><text x="943" y="548">w…c</text><text x="1003" y="548">…</text><text x="1054" y="548">…</text><text x="1096" y="548">…</text><text x="1133" y="548">…</text><text x="2070" y="548">_loadModule</text><text x="2280" y="548">_loadModule</text><text x="449" y="588">un…n</text><text x="523" y="588">_…e</text><text x="589" y="588">…</text><text x="644" y="588">deep…Copy</text><text x="794" y="588">re…er</text><text x="882" y="588">f…e</text><text x="943" y="588">a…r</text><text x="1003" y="588">…</text><text x="1054" y="588">…</text><text x="1096" y="588">…</text><text x="1133" y="588">…</text><text x="2070" y="588">_execModule</text><text x="2280" y="588">_execModule</text><text x="449" y="628">re…r</text><text x="523" y="628">O…&gt;</text><text x="589" y="628">…</text><text x="644" y="628">deep…ject</text><text x="794" y="628">act</text><text x="882" y="628">f…l</text><text x="943" y="628">a…t</text><text x="1003" y="628">…</text><text x="1054" y="628">…</text><text x="1096" y="628">…</text><text x="1133" y="628">…</text><text x="2070" y="628">Objec…mous&gt;</text><text x="2280" y="628">Object.&lt;anonymous&gt;</text><text x="449" y="668">re…r</text><text x="523" y="668">r…k</text><text x="589" y="668">…</text><text x="644" y="668">unknown</text><text x="794" y="668">ba…$1</text><text x="882" y="668">r…1</text><text x="943" y="668">act</text><text x="1003" y="668">…</text><text x="1054" y="668">…</text><text x="1096" y="668">…</text><text x="1133" y="668">…</text><text x="2070" y="668">re…ck</text><text x="2164" y="668">r…</text><text x="2280" y="668">requireModuleOrMock</text><text x="2626" y="668">requ…ock</text><text x="2753" y="668">re…k</text><text x="2822" y="668">…</text><text x="449" y="708">act</text><text x="523" y="708">r…e</text><text x="589" y="708">…</text><text x="644" y="708">deep…Copy</text><text x="794" y="708">…</text><text x="836" y="708">…</text><text x="882" y="708">u…y</text><text x="943" y="708">b…1</text><text x="2070" y="708">re…ck</text><text x="2164" y="708">r…</text><text x="2280" y="708">requireModule</text><text x="2626" y="708">requ…ule</text><text x="2753" y="708">re…e</text><text x="2822" y="708">…</text><text x="449" y="748">O…k</text><text x="523" y="748">_…e</text><text x="589" y="748">…</text><text x="644" y="748">deep…ject</text><text x="794" y="748">…</text><text x="836" y="748">…</text><text x="882" y="748">u…n</text><text x="943" y="748">f…e</text><text x="2070" y="748">_l…le</text><text x="2164" y="748">_…</text><text x="2280" y="748">_loadModule</text><text x="2626" y="748">_loa…ule</text><text x="2753" y="748">_l…e</text><text x="2822" y="748">…</text><text x="449" y="788">f…s</text><text x="523" y="788">_…e</text><text x="589" y="788">…</text><text x="644" y="788">unk…wn</text><text x="750" y="788">…</text><text x="794" y="788">…</text><text x="836" y="788">…</text><text x="882" y="788">p…t</text><text x="943" y="788">f…l</text><text x="2070" y="788">_e…le</text><text x="2164" y="788">_…</text><text x="2280" y="788">_execModule</text><text x="2626" y="788">_exe…ule</text><text x="2753" y="788">_e…e</text><text x="2822" y="788">…</text><text x="449" y="828">r…1</text><text x="523" y="828">O…&gt;</text><text x="589" y="828">…</text><text x="644" y="828">dee…py</text><text x="750" y="828">…</text><text x="794" y="828">…</text><text x="836" y="828">…</text><text x="882" y="828">r…c</text><text x="943" y="828">r…1</text><text x="2070" y="828">Ob…s&gt;</text><text x="2164" y="828">O…</text><text x="2280" y="828">Object.&lt;anonymous&gt;</text><text x="2626" y="828">Obj…s&gt;</text><text x="2753" y="828">O…&gt;</text><text x="2822" y="828">…</text><text x="449" y="868">u…y</text><text x="523" y="868">r…k</text><text x="644" y="868">dee…ct</text><text x="794" y="868">…</text><text x="836" y="868">…</text><text x="882" y="868">w…c</text><text x="943" y="868">u…y</text><text x="2070" y="868">re…l</text><text x="2164" y="868">r…</text><text x="2280" y="868">requireModuleOrMock</text><text x="2568" y="868">r…</text><text x="2626" y="868">req…ck</text><text x="2753" y="868">…</text><text x="2822" y="868">…</text><text x="449" y="908">f…l</text><text x="523" y="908">r…e</text><text x="644" y="908">u…</text><text x="794" y="908">…</text><text x="836" y="908">…</text><text x="882" y="908">p…k</text><text x="943" y="908">u…n</text><text x="2070" y="908">re…l</text><text x="2164" y="908">r…</text><text x="2280" y="908">requireModule</text><text x="2568" y="908">r…</text><text x="2626" y="908">req…le</text><text x="2753" y="908">…</text><text x="2822" y="908">…</text><text x="449" y="948">f…e</text><text x="523" y="948">_…e</text><text x="644" y="948">d…</text><text x="794" y="948">…</text><text x="836" y="948">…</text><text x="943" y="948">p…t</text><text x="2070" y="948">re…e</text><text x="2164" y="948">_…</text><text x="2280" y="948">_loadModule</text><text x="2568" y="948">_…</text><text x="2626" y="948">_lo…le</text><text x="2753" y="948">…</text><text x="2822" y="948">…</text><text x="449" y="988">f…l</text><text x="523" y="988">_…e</text><text x="644" y="988">d…</text><text x="794" y="988">…</text><text x="836" y="988">…</text><text x="943" y="988">r…</text><text x="2070" y="988">_l…e</text><text x="2164" y="988">_…</text><text x="2280" y="988">_execModule</text><text x="2568" y="988">_…</text><text x="2626" y="988">_ex…le</text><text x="2753" y="988">…</text><text x="2822" y="988">…</text><text x="449" y="1028">r…1</text><text x="523" y="1028">O…&gt;</text><text x="794" y="1028">…</text><text x="836" y="1028">…</text><text x="943" y="1028">w…</text><text x="2070" y="1028">_e…e</text><text x="2164" y="1028">O…</text><text x="2280" y="1028">Object.&lt;anonymous&gt;</text><text x="2568" y="1028">O…</text><text x="2626" y="1028">Ob…&gt;</text><text x="2753" y="1028">…</text><text x="449" y="1068">u…y</text><text x="523" y="1068">r…</text><text x="794" y="1068">…</text><text x="943" y="1068">p…</text><text x="2070" y="1068">Ob…&gt;</text><text x="2164" y="1068">…</text><text x="2280" y="1068">requireModuleOrMock</text><text x="2568" y="1068">…</text><text x="449" y="1108">u…n</text><text x="523" y="1108">r…</text><text x="794" y="1108">…</text><text x="2164" y="1108">…</text><text x="2280" y="1108">requireModule</text><text x="2568" y="1108">…</text><text x="449" y="1148">p…t</text><text x="523" y="1148">_…</text><text x="2164" y="1148">…</text><text x="2280" y="1148">_loadModule</text><text x="2568" y="1148">…</text><text x="449" y="1188">r…</text><text x="523" y="1188">_…</text><text x="2164" y="1188">…</text><text x="2280" y="1188">_execModule</text><text x="2568" y="1188">…</text><text x="449" y="1228">w…</text><text x="523" y="1228">…</text><text x="2164" y="1228">…</text><text x="2280" y="1228">Object.&lt;anonymous&gt;</text><text x="2568" y="1228">…</text><text x="449" y="1268">p…</text><text x="523" y="1268">…</text><text x="2164" y="1268">…</text><text x="2280" y="1268">requireModuleOrMock</text><text x="2568" y="1268">…</text><text x="449" y="1308">…</text><text x="523" y="1308">…</text><text x="2164" y="1308">…</text><text x="2280" y="1308">requireModule</text><text x="2568" y="1308">…</text><text x="523" y="1348">…</text><text x="2164" y="1348">…</text><text x="2280" y="1348">_loadModule</text><text x="2568" y="1348">…</text><text x="523" y="1388">…</text><text x="2164" y="1388">…</text><text x="2280" y="1388">_execModule</text><text x="2568" y="1388">…</text><text x="523" y="1428">…</text><text x="2164" y="1428">…</text><text x="2280" y="1428">Object.&lt;anonymous&gt;</text><text x="2568" y="1428">…</text><text x="523" y="1468">…</text><text x="2164" y="1468">…</text><text x="2280" y="1468">requireM…leOrMock</text><text x="2568" y="1468">…</text></g></svg>
<div class="r" style="left:440px;top:1470px;width:2436px;height:2px;background:#e0dce5;"></div>
<div class="t" style="left:457.0px;top:1488.5px;font-size:23px;line-height:23px;color:#3e3446;font-family:'Liberation Sans', sans-serif;font-weight:bold;letter-spacing:0.61px;">Bottom Up</div>
<div class="r" style="left:456px;top:1526px;width:124px;height:4px;background:#6c5fc7;"></div>
<div class="t" style="left:598.5px;top:1488.5px;font-size:23px;line-height:23px;color:#3e3446;font-family:'Liberation Sans', sans-serif;font-weight:normal;letter-spacing:0.65px;">Top Down</div>
<div class="t" style="left:741.6px;top:1488.5px;font-size:23px;line-height:23px;color:#3e3446;font-family:'Liberation Sans', sans-serif;font-weight:bold;letter-spacing:0.24px;">All Frames</div>
<div class="r" style="left:741px;top:1526px;width:121px;height:4px;background:#6c5fc7;"></div>
<div class="t" style="left:883.0px;top:1488.5px;font-size:23px;line-height:23px;color:#3e3446;font-family:'Liberation Sans', sans-serif;font-weight:normal;letter-spacing:0.95px;">Application Frames</div>
<div class="t" style="left:1122.0px;top:1488.5px;font-size:23px;line-height:23px;color:#3e3446;font-family:'Liberation Sans', sans-serif;font-weight:normal;letter-spacing:0.77px;">System Frames</div>
<div class="r" style="left:1331px;top:1488px;width:23px;height:23px;background:#fff;box-sizing:border-box;border:2px solid #e0dce5;border-radius:4px;"></div>
<div class="t" style="left:1362.6px;top:1488.5px;font-size:23px;line-height:23px;color:#3e3446;font-family:'Liberation Sans', sans-serif;font-weight:normal;letter-spacing:0.69px;">Collapse recursion</div>
<svg class="r" style="left:2672px;top:1485px;" width="30" height="28" viewBox="0 0 30 28"><path d="M15 2 V17 M8 11 L15 18 L22 11 M3 17 V25 H27 V17" fill="none" stroke="#80708f" stroke-width="2.4" stroke-linecap="round" stroke-linejoin="round"/></svg>
<svg class="r" style="left:2740px;top:1486px;" width="24" height="24" viewBox="0 0 24 24"><g fill="none" stroke="#80708f" stroke-width="2.4"><rect x="1.2" y="1.2" width="21.6" height="21.6" rx="4"/><path d="M9 2 V22" /></g></svg>
<svg class="r" style="left:2780px;top:1486px;" width="24" height="24" viewBox="0 0 24 24"><g fill="none" stroke="#3e3446" stroke-width="2.4"><rect x="1.2" y="1.2" width="21.6" height="21.6" rx="4"/><path d="M2 16 H22" /></g></svg>
<svg class="r" style="left:2820px;top:1486px;" width="24" height="24" viewBox="0 0 24 24"><g fill="none" stroke="#80708f" stroke-width="2.4"><rect x="1.2" y="1.2" width="21.6" height="21.6" rx="4"/><path d="M15 2 V22" /></g></svg>
<div class="r" style="left:440px;top:1530px;width:2436px;height:2px;background:#e0dce5;"></div>
<div class="t" style="left:457.0px;top:1544.5px;font-size:23px;line-height:23px;color:#3e3446;font-family:'Liberation Sans', sans-serif;font-weight:normal;letter-spacing:0.64px;">Self Time</div>
<svg class="r" style="left:565px;top:1544px;" width="20" height="20" viewBox="0 0 20 20"><circle cx="10" cy="10" r="8.6" fill="none" stroke="#80708f" stroke-width="1.8" opacity="0.7"/><path d="M7.2 7.8 A2.8 2.8 0 1 1 10 10.6 V12" fill="none" stroke="#80708f" stroke-width="1.8" stroke-linecap="round" opacity="0.7"/><circle cx="10" cy="15" r="1" fill="#80708f" opacity="0.7"/></svg>
<div class="r" style="left:766px;top:1532px;width:2px;height:384px;background:#e0dce5;"></div>
<div class="t" style="left:784.0px;top:1544.5px;font-size:23px;line-height:23px;color:#3e3446;font-family:'Liberation Sans', sans-serif;font-weight:normal;letter-spacing:0.78px;">Total Time</div>
<svg class="r" style="left:902px;top:1544px;" width="20" height="20" viewBox="0 0 20 20"><circle cx="10" cy="10" r="8.6" fill="none" stroke="#80708f" stroke-width="1.8" opacity="0.7"/><path d="M7.2 7.8 A2.8 2.8 0 1 1 10 10.6 V12" fill="none" stroke="#80708f" stroke-width="1.8" stroke-linecap="round" opacity="0.7"/><circle cx="10" cy="15" r="1" fill="#80708f" opacity="0.7"/></svg>
<svg class="r" style="left:1057px;top:1543px;" width="22" height="26" viewBox="0 0 22 26"><path d="M11 2 V23 M3 15 L11 23 L19 15" fill="none" stroke="#2b2233" stroke-width="2.4" stroke-linecap="round" stroke-linejoin="round"/></svg>
<div class="r" style="left:1094px;top:1532px;width:2px;height:384px;background:#e0dce5;"></div>
<div class="t" style="left:1113.0px;top:1544.5px;font-size:23px;line-height:23px;color:#3e3446;font-family:'Liberation Sans', sans-serif;font-weight:normal;letter-spacing:0.71px;">Frame</div>
<div class="r" style="left:2356px;top:1532px;width:2px;height:384px;background:#e0dce5;"></div>
<div class="t" style="left:2374.0px;top:1544.0px;font-size:23px;line-height:23px;color:#3e3446;font-family:'Liberation Sans', sans-serif;font-weight:bold;letter-spacing:0.72px;">Transaction</div>
<div class="r" style="left:2374px;top:1576px;width:137px;height:4px;background:#6c5fc7;"></div>
<div class="t" style="left:2530.0px;top:1544.0px;font-size:23px;line-height:23px;color:#3e3446;font-family:'Liberation Sans', sans-serif;font-weight:normal;letter-spacing:0.45px;">Device</div>
<div class="r" style="left:440px;top:1580px;width:2436px;height:2px;background:#e0dce5;"></div>
<div class="r" style="left:440px;top:1582px;width:654px;height:334px;background:#ffffff;"></div>
<div class="r" style="left:768px;top:1582px;width:326px;height:334px;background:#ffffff;"></div>
<div class="r" style="left:1096px;top:1582px;width:1260px;height:334px;background:#ffffff;"></div>
<div class="r" style="left:2358px;top:1582px;width:518px;height:334px;background:#ffffff;"></div>
<div class="r" style="left:766px;top:1532px;width:2px;height:384px;background:#e0dce5;"></div>
<div class="r" style="left:1094px;top:1532px;width:2px;height:384px;background:#e0dce5;"></div>
<div class="r" style="left:2356px;top:1532px;width:2px;height:384px;background:#e0dce5;"></div>
<div class="t" style="left:581.5px;top:1593.7px;font-size:24px;line-height:24px;color:#3e3446;font-family:'Liberation Sans', sans-serif;font-weight:normal;letter-spacing:0.35px;">1.44s</div>
<div class="t" style="left:696.5px;top:1593.7px;font-size:24px;line-height:24px;color:#80708f;font-family:'Liberation Sans', sans-serif;font-weight:normal;letter-spacing:-0.55px;">2.8%</div>
<div class="t" style="left:873.5px;top:1593.7px;font-size:24px;line-height:24px;color:#3e3446;font-family:'Liberation Sans', sans-serif;font-weight:normal;letter-spacing:0.35px;">1.44s</div>
<div class="t" style="left:980.5px;top:1593.7px;font-size:24px;line-height:24px;color:#80708f;font-family:'Liberation Sans', sans-serif;font-weight:normal;letter-spacing:-0.55px;">2.8%</div>
<svg class="r" style="left:1055px;top:1592px;" width="26" height="26" viewBox="0 0 26 26"><svg viewBox="0 0 44 44" width="26" height="26"><g fill="none" stroke="#80708f" stroke-width="3.3" stroke-linejoin="round"><path d="M17.18 10.36A5.05 5.05 0 1 1 26.82 10.36A5.05 5.05 0 1 1 33.64 17.18A5.05 5.05 0 1 1 33.64 26.82A5.05 5.05 0 1 1 26.82 33.64A5.05 5.05 0 1 1 17.18 33.64A5.05 5.05 0 1 1 10.36 26.82A5.05 5.05 0 1 1 10.36 17.18A5.05 5.05 0 1 1 17.18 10.36Z"/><circle cx="22" cy="22" r="5"/></g></svg></svg>
<div class="r" style="left:1112px;top:1594px;width:24px;height:24px;background:#f0cfd3;border-radius:4px;"></div>
<svg class="r" style="left:1148px;top:1597px;" width="12" height="18" viewBox="0 0 12 18"><path d="M3.5 4 L8.5 9 L3.5 14" fill="none" stroke="#2b2233" stroke-width="2.2" stroke-linecap="round" stroke-linejoin="round"/></svg>
<div class="t" style="left:1173.0px;top:1593.7px;font-size:24px;line-height:24px;color:#3e3446;font-family:'Liberation Sans', sans-serif;font-weight:normal;letter-spacing:0.42px;">(garbage collector)</div>
<div class="t" style="left:533.4px;top:1641.7px;font-size:24px;line-height:24px;color:#3e3446;font-family:'Liberation Sans', sans-serif;font-weight:normal;letter-spacing:0.40px;">162.06ms</div>
<div class="t" style="left:696.5px;top:1641.7px;font-size:24px;line-height:24px;color:#80708f;font-family:'Liberation Sans', sans-serif;font-weight:normal;letter-spacing:-0.55px;">0.3%</div>
<div class="t" style="left:825.4px;top:1641.7px;font-size:24px;line-height:24px;color:#3e3446;font-family:'Liberation Sans', sans-serif;font-weight:normal;letter-spacing:0.40px;">162.06ms</div>
<div class="t" style="left:980.5px;top:1641.7px;font-size:24px;line-height:24px;color:#80708f;font-family:'Liberation Sans', sans-serif;font-weight:normal;letter-spacing:-0.55px;">0.3%</div>
<svg class="r" style="left:1055px;top:1640px;" width="26" height="26" viewBox="0 0 26 26"><svg viewBox="0 0 44 44" width="26" height="26"><g fill="none" stroke="#80708f" stroke-width="3.3" stroke-linejoin="round"><path d="M17.18 10.36A5.05 5.05 0 1 1 26.82 10.36A5.05 5.05 0 1 1 33.64 17.18A5.05 5.05 0 1 1 33.64 26.82A5.05 5.05 0 1 1 26.82 33.64A5.05 5.05 0 1 1 17.18 33.64A5.05 5.05 0 1 1 10.36 26.82A5.05 5.05 0 1 1 10.36 17.18A5.05 5.05 0 1 1 17.18 10.36Z"/><circle cx="22" cy="22" r="5"/></g></svg></svg>
<div class="r" style="left:1112px;top:1642px;width:24px;height:24px;background:#f0cfd3;border-radius:4px;"></div>
<svg class="r" style="left:1148px;top:1645px;" width="12" height="18" viewBox="0 0 12 18"><path d="M3.5 4 L8.5 9 L3.5 14" fill="none" stroke="#2b2233" stroke-width="2.2" stroke-linecap="round" stroke-linejoin="round"/></svg>
<div class="t" style="left:1173.0px;top:1641.7px;font-size:24px;line-height:24px;color:#3e3446;font-family:'Liberation Sans', sans-serif;font-weight:normal;letter-spacing:0.49px;">deepCyclicCopyObject</div>
<div class="t" style="left:547.2px;top:1689.7px;font-size:24px;line-height:24px;color:#3e3446;font-family:'Liberation Sans', sans-serif;font-weight:normal;letter-spacing:0.39px;">85.63ms</div>
<div class="t" style="left:696.5px;top:1689.7px;font-size:24px;line-height:24px;color:#80708f;font-family:'Liberation Sans', sans-serif;font-weight:normal;letter-spacing:-0.55px;">0.2%</div>
<div class="t" style="left:839.2px;top:1689.7px;font-size:24px;line-height:24px;color:#3e3446;font-family:'Liberation Sans', sans-serif;font-weight:normal;letter-spacing:0.39px;">85.63ms</div>
<div class="t" style="left:980.5px;top:1689.7px;font-size:24px;line-height:24px;color:#80708f;font-family:'Liberation Sans', sans-serif;font-weight:normal;letter-spacing:-0.55px;">0.2%</div>
<svg class="r" style="left:1055px;top:1688px;" width="26" height="26" viewBox="0 0 26 26"><svg viewBox="0 0 44 44" width="26" height="26"><g fill="none" stroke="#80708f" stroke-width="3.3" stroke-linejoin="round"><path d="M17.18 10.36A5.05 5.05 0 1 1 26.82 10.36A5.05 5.05 0 1 1 33.64 17.18A5.05 5.05 0 1 1 33.64 26.82A5.05 5.05 0 1 1 26.82 33.64A5.05 5.05 0 1 1 17.18 33.64A5.05 5.05 0 1 1 10.36 26.82A5.05 5.05 0 1 1 10.36 17.18A5.05 5.05 0 1 1 17.18 10.36Z"/><circle cx="22" cy="22" r="5"/></g></svg></svg>
<div class="r" style="left:1112px;top:1690px;width:24px;height:24px;background:#f0cfd3;border-radius:4px;"></div>
<svg class="r" style="left:1148px;top:1693px;" width="12" height="18" viewBox="0 0 12 18"><path d="M3.5 4 L8.5 9 L3.5 14" fill="none" stroke="#2b2233" stroke-width="2.2" stroke-linecap="round" stroke-linejoin="round"/></svg>
<div class="t" style="left:1173.0px;top:1689.7px;font-size:24px;line-height:24px;color:#3e3446;font-family:'Liberation Sans', sans-serif;font-weight:normal;letter-spacing:0.49px;">deepCyclicCopyObject</div>
<div class="t" style="left:547.2px;top:1737.7px;font-size:24px;line-height:24px;color:#3e3446;font-family:'Liberation Sans', sans-serif;font-weight:normal;letter-spacing:0.39px;">49.35ms</div>
<div class="t" style="left:696.5px;top:1737.7px;font-size:24px;line-height:24px;color:#80708f;font-family:'Liberation Sans', sans-serif;font-weight:normal;letter-spacing:-0.55px;">0.1%</div>
<div class="t" style="left:839.2px;top:1737.7px;font-size:24px;line-height:24px;color:#3e3446;font-family:'Liberation Sans', sans-serif;font-weight:normal;letter-spacing:0.39px;">49.35ms</div>
<div class="t" style="left:980.5px;top:1737.7px;font-size:24px;line-height:24px;color:#80708f;font-family:'Liberation Sans', sans-serif;font-weight:normal;letter-spacing:-0.55px;">0.1%</div>
<svg class="r" style="left:1055px;top:1736px;" width="26" height="26" viewBox="0 0 26 26"><svg viewBox="0 0 44 44" width="26" height="26"><g fill="none" stroke="#80708f" stroke-width="3.3" stroke-linejoin="round"><path d="M17.18 10.36A5.05 5.05 0 1 1 26.82 10.36A5.05 5.05 0 1 1 33.64 17.18A5.05 5.05 0 1 1 33.64 26.82A5.05 5.05 0 1 1 26.82 33.64A5.05 5.05 0 1 1 17.18 33.64A5.05 5.05 0 1 1 10.36 26.82A5.05 5.05 0 1 1 10.36 17.18A5.05 5.05 0 1 1 17.18 10.36Z"/><circle cx="22" cy="22" r="5"/></g></svg></svg>
<div class="r" style="left:1112px;top:1738px;width:24px;height:24px;background:#f0cfd3;border-radius:4px;"></div>
<svg class="r" style="left:1148px;top:1741px;" width="12" height="18" viewBox="0 0 12 18"><path d="M3.5 4 L8.5 9 L3.5 14" fill="none" stroke="#2b2233" stroke-width="2.2" stroke-linecap="round" stroke-linejoin="round"/></svg>
<div class="t" style="left:1173.0px;top:1737.7px;font-size:24px;line-height:24px;color:#3e3446;font-family:'Liberation Sans', sans-serif;font-weight:normal;letter-spacing:0.49px;">deepCyclicCopyObject</div>
<div class="t" style="left:547.2px;top:1785.7px;font-size:24px;line-height:24px;color:#3e3446;font-family:'Liberation Sans', sans-serif;font-weight:normal;letter-spacing:0.39px;">33.57ms</div>
<div class="t" style="left:696.5px;top:1785.7px;font-size:24px;line-height:24px;color:#80708f;font-family:'Liberation Sans', sans-serif;font-weight:normal;letter-spacing:-0.55px;">0.1%</div>
<div class="t" style="left:839.2px;top:1785.7px;font-size:24px;line-height:24px;color:#3e3446;font-family:'Liberation Sans', sans-serif;font-weight:normal;letter-spacing:0.39px;">33.57ms</div>
<div class="t" style="left:980.5px;top:1785.7px;font-size:24px;line-height:24px;color:#80708f;font-family:'Liberation Sans', sans-serif;font-weight:normal;letter-spacing:-0.55px;">0.1%</div>
<svg class="r" style="left:1055px;top:1784px;" width="26" height="26" viewBox="0 0 26 26"><svg viewBox="0 0 44 44" width="26" height="26"><g fill="none" stroke="#80708f" stroke-width="3.3" stroke-linejoin="round"><path d="M17.18 10.36A5.05 5.05 0 1 1 26.82 10.36A5.05 5.05 0 1 1 33.64 17.18A5.05 5.05 0 1 1 33.64 26.82A5.05 5.05 0 1 1 26.82 33.64A5.05 5.05 0 1 1 17.18 33.64A5.05 5.05 0 1 1 10.36 26.82A5.05 5.05 0 1 1 10.36 17.18A5.05 5.05 0 1 1 17.18 10.36Z"/><circle cx="22" cy="22" r="5"/></g></svg></svg>
<div class="r" style="left:1112px;top:1786px;width:24px;height:24px;background:#f0cfd3;border-radius:4px;"></div>
<svg class="r" style="left:1148px;top:1789px;" width="12" height="18" viewBox="0 0 12 18"><path d="M3.5 4 L8.5 9 L3.5 14" fill="none" stroke="#2b2233" stroke-width="2.2" stroke-linecap="round" stroke-linejoin="round"/></svg>
<div class="t" style="left:1173.0px;top:1785.7px;font-size:24px;line-height:24px;color:#3e3446;font-family:'Liberation Sans', sans-serif;font-weight:normal;letter-spacing:0.38px;">startProfiling</div>
<div class="t" style="left:547.2px;top:1833.7px;font-size:24px;line-height:24px;color:#3e3446;font-family:'Liberation Sans', sans-serif;font-weight:normal;letter-spacing:0.39px;">30.39ms</div>
<div class="t" style="left:696.5px;top:1833.7px;font-size:24px;line-height:24px;color:#80708f;font-family:'Liberation Sans', sans-serif;font-weight:normal;letter-spacing:-0.55px;">0.1%</div>
<div class="t" style="left:839.2px;top:1833.7px;font-size:24px;line-height:24px;color:#3e3446;font-family:'Liberation Sans', sans-serif;font-weight:normal;letter-spacing:0.39px;">30.39ms</div>
<div class="t" style="left:980.5px;top:1833.7px;font-size:24px;line-height:24px;color:#80708f;font-family:'Liberation Sans', sans-serif;font-weight:normal;letter-spacing:-0.55px;">0.1%</div>
<svg class="r" style="left:1055px;top:1832px;" width="26" height="26" viewBox="0 0 26 26"><svg viewBox="0 0 44 44" width="26" height="26"><g fill="none" stroke="#80708f" stroke-width="3.3" stroke-linejoin="round"><path d="M17.18 10.36A5.05 5.05 0 1 1 26.82 10.36A5.05 5.05 0 1 1 33.64 17.18A5.05 5.05 0 1 1 33.64 26.82A5.05 5.05 0 1 1 26.82 33.64A5.05 5.05 0 1 1 17.18 33.64A5.05 5.05 0 1 1 10.36 26.82A5.05 5.05 0 1 1 10.36 17.18A5.05 5.05 0 1 1 17.18 10.36Z"/><circle cx="22" cy="22" r="5"/></g></svg></svg>
<div class="r" style="left:1112px;top:1834px;width:24px;height:24px;background:#f0cfd3;border-radius:4px;"></div>
<svg class="r" style="left:1148px;top:1837px;" width="12" height="18" viewBox="0 0 12 18"><path d="M3.5 4 L8.5 9 L3.5 14" fill="none" stroke="#2b2233" stroke-width="2.2" stroke-linecap="round" stroke-linejoin="round"/></svg>
<div class="t" style="left:1173.0px;top:1833.7px;font-size:24px;line-height:24px;color:#3e3446;font-family:'Liberation Sans', sans-serif;font-weight:normal;letter-spacing:0.50px;">FiberNode</div>
<div class="t" style="left:547.2px;top:1881.7px;font-size:24px;line-height:24px;color:#3e3446;font-family:'Liberation Sans', sans-serif;font-weight:normal;letter-spacing:0.39px;">29.75ms</div>
<div class="t" style="left:696.5px;top:1881.7px;font-size:24px;line-height:24px;color:#80708f;font-family:'Liberation Sans', sans-serif;font-weight:normal;letter-spacing:-0.55px;">0.1%</div>
<div class="t" style="left:839.2px;top:1881.7px;font-size:24px;line-height:24px;color:#3e3446;font-family:'Liberation Sans', sans-serif;font-weight:normal;letter-spacing:0.39px;">29.75ms</div>
<div class="t" style="left:980.5px;top:1881.7px;font-size:24px;line-height:24px;color:#80708f;font-family:'Liberation Sans', sans-serif;font-weight:normal;letter-spacing:-0.55px;">0.1%</div>
<svg class="r" style="left:1055px;top:1880px;" width="26" height="26" viewBox="0 0 26 26"><svg viewBox="0 0 44 44" width="26" height="26"><g fill="none" stroke="#80708f" stroke-width="3.3" stroke-linejoin="round"><path d="M17.18 10.36A5.05 5.05 0 1 1 26.82 10.36A5.05 5.05 0 1 1 33.64 17.18A5.05 5.05 0 1 1 33.64 26.82A5.05 5.05 0 1 1 26.82 33.64A5.05 5.05 0 1 1 17.18 33.64A5.05 5.05 0 1 1 10.36 26.82A5.05 5.05 0 1 1 10.36 17.18A5.05 5.05 0 1 1 17.18 10.36Z"/><circle cx="22" cy="22" r="5"/></g></svg></svg>
<div class="r" style="left:1112px;top:1882px;width:24px;height:24px;background:#f0cfd3;border-radius:4px;"></div>
<svg class="r" style="left:1148px;top:1885px;" width="12" height="18" viewBox="0 0 12 18"><path d="M3.5 4 L8.5 9 L3.5 14" fill="none" stroke="#2b2233" stroke-width="2.2" stroke-linecap="round" stroke-linejoin="round"/></svg>
<div class="t" style="left:1173.0px;top:1881.7px;font-size:24px;line-height:24px;color:#3e3446;font-family:'Liberation Sans', sans-serif;font-weight:normal;letter-spacing:0.45px;">_attach</div>
<div class="r" style="left:757px;top:1582px;width:9px;height:47px;background:#fdf8ea;"></div>
<div class="r" style="left:757px;top:1627px;width:9px;height:2px;background:#f5b000;"></div>
<div class="r" style="left:1034px;top:1582px;width:8px;height:47px;background:#fdf8ea;"></div>
<div class="r" style="left:1034px;top:1627px;width:8px;height:2px;background:#f5b000;"></div>
<div class="t" style="left:2374.0px;top:1597.2px;font-size:24px;line-height:24px;color:#3e3446;font-family:'Liberation Sans', sans-serif;font-weight:bold;letter-spacing:0.29px;">transaction:</div>
<div class="t" style="left:2524.8px;top:1597.2px;font-size:24px;line-height:24px;color:#3e3446;font-family:'Liberation Sans', sans-serif;font-weight:normal;letter-spacing:0.86px;">/static/app/views/performa…</div>
<div class="t" style="left:2374.0px;top:1630.9px;font-size:24px;line-height:24px;color:#3e3446;font-family:'Liberation Sans', sans-serif;font-weight:bold;letter-spacing:0.28px;">received at:</div>
<div class="t" style="left:2520.7px;top:1630.9px;font-size:24px;line-height:24px;color:#3e3446;font-family:'Liberation Sans', sans-serif;font-weight:normal;">Mar 22, 7:38 PM</div>
<div class="t" style="left:2374.0px;top:1664.6px;font-size:24px;line-height:24px;color:#3e3446;font-family:'Liberation Sans', sans-serif;font-weight:bold;letter-spacing:0.29px;">organization:</div>
<div class="t" style="left:2538.4px;top:1664.6px;font-size:24px;line-height:24px;color:#3e3446;font-family:'Liberation Sans', sans-serif;font-weight:normal;">ø</div>
<div class="t" style="left:2374.0px;top:1698.3px;font-size:24px;line-height:24px;color:#3e3446;font-family:'Liberation Sans', sans-serif;font-weight:bold;letter-spacing:0.28px;">project:</div>
<div class="t" style="left:2474.2px;top:1698.3px;font-size:24px;line-height:24px;color:#3e3446;font-family:'Liberation Sans', sans-serif;font-weight:normal;">ø</div>
<div class="t" style="left:2374.0px;top:1732.0px;font-size:24px;line-height:24px;color:#3e3446;font-family:'Liberation Sans', sans-serif;font-weight:bold;letter-spacing:0.29px;">platform:</div>
<div class="r" style="left:2490.616015625px;top:1732.3px;width:24px;height:24px;background:#53b94a;border-radius:4px;"></div>
<svg class="r" style="left:2490.616015625px;top:1732.3px;" width="24" height="24" viewBox="0 0 24 24"><path d="M6 20 V9 L12 5 L18 9 V20 H15 V11 H9 V20 Z" fill="#fff"/></svg>
<div class="t" style="left:2522.6px;top:1732.0px;font-size:24px;line-height:24px;color:#3e3446;font-family:'Liberation Sans', sans-serif;font-weight:normal;">node</div>
<div class="t" style="left:2374.0px;top:1765.7px;font-size:24px;line-height:24px;color:#3e3446;font-family:'Liberation Sans', sans-serif;font-weight:bold;letter-spacing:0.28px;">release:</div>
<div class="t" style="left:2477.0px;top:1765.7px;font-size:24px;line-height:24px;color:#3e3446;font-family:'Liberation Sans', sans-serif;font-weight:normal;">ø</div>
<div class="t" style="left:2374.0px;top:1799.4px;font-size:24px;line-height:24px;color:#3e3446;font-family:'Liberation Sans', sans-serif;font-weight:bold;letter-spacing:0.32px;">environment:</div>
<div class="t" style="left:2539.8px;top:1799.4px;font-size:24px;line-height:24px;color:#3e3446;font-family:'Liberation Sans', sans-serif;font-weight:normal;">ci</div>
<div class="t" style="left:2374.0px;top:1833.1px;font-size:24px;line-height:24px;color:#3e3446;font-family:'Liberation Sans', sans-serif;font-weight:bold;letter-spacing:0.29px;">duration:</div>
<div class="t" style="left:2490.6px;top:1833.1px;font-size:24px;line-height:24px;color:#3e3446;font-family:'Liberation Sans', sans-serif;font-weight:normal;">8.34s</div>
<div class="t" style="left:2374.0px;top:1866.8px;font-size:24px;line-height:24px;color:#3e3446;font-family:'Liberation Sans', sans-serif;font-weight:bold;letter-spacing:0.30px;">threads:</div>
<div class="t" style="left:2481.1px;top:1866.8px;font-size:24px;line-height:24px;color:#3e3446;font-family:'Liberation Sans', sans-serif;font-weight:normal;">1</div>
</body></html>
